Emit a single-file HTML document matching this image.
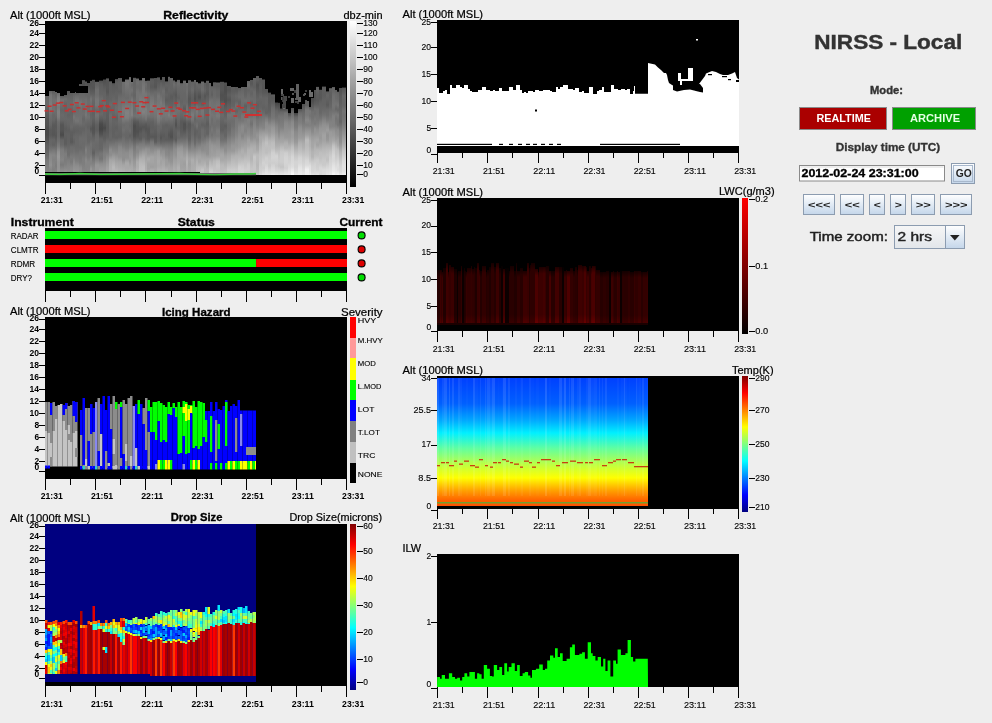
<!DOCTYPE html>
<html><head><meta charset="utf-8"><style>html,body{margin:0;padding:0;background:#eeeeee;width:992px;height:723px;overflow:hidden;position:relative}</style></head>
<body>
<svg width="992" height="723" viewBox="0 0 992 723" style="position:absolute;left:0;top:0;font-family:'Liberation Sans', sans-serif;will-change:transform"><rect x="0" y="0" width="992" height="723" fill="#eeeeee" /><defs><linearGradient id="gray" x1="0" y1="0" x2="0" y2="1"><stop offset="0" stop-color="#fff"/><stop offset="1" stop-color="#000"/></linearGradient><linearGradient id="jet" x1="0" y1="0" x2="0" y2="1"><stop offset="0" stop-color="#800000"/><stop offset="0.125" stop-color="#ff0000"/><stop offset="0.375" stop-color="#ffff00"/><stop offset="0.625" stop-color="#00ffff"/><stop offset="0.875" stop-color="#0000ff"/><stop offset="1" stop-color="#000080"/></linearGradient><linearGradient id="red" x1="0" y1="0" x2="0" y2="1"><stop offset="0" stop-color="#ff0000"/><stop offset="1" stop-color="#000"/></linearGradient></defs><rect x="45" y="21" width="302" height="162" fill="#000" /><defs><linearGradient id="rf0" x1="0" y1="0" x2="0" y2="1"><stop offset="0.000" stop-color="#616161"/><stop offset="0.051" stop-color="#686868"/><stop offset="0.114" stop-color="#6b6b6b"/><stop offset="0.177" stop-color="#606060"/><stop offset="0.241" stop-color="#5a5a5a"/><stop offset="0.304" stop-color="#525252"/><stop offset="0.367" stop-color="#515151"/><stop offset="0.430" stop-color="#4a4a4a"/><stop offset="0.494" stop-color="#4b4b4b"/><stop offset="0.557" stop-color="#525252"/><stop offset="0.620" stop-color="#5e5e5e"/><stop offset="0.684" stop-color="#626262"/><stop offset="0.747" stop-color="#696969"/><stop offset="0.810" stop-color="#777777"/><stop offset="0.873" stop-color="#7d7d7d"/><stop offset="0.937" stop-color="#838383"/><stop offset="1.000" stop-color="#7e7e7e"/></linearGradient><linearGradient id="rf1" x1="0" y1="0" x2="0" y2="1"><stop offset="0.000" stop-color="#636363"/><stop offset="0.048" stop-color="#767676"/><stop offset="0.107" stop-color="#787878"/><stop offset="0.167" stop-color="#7d7d7d"/><stop offset="0.226" stop-color="#777777"/><stop offset="0.286" stop-color="#6e6e6e"/><stop offset="0.345" stop-color="#6a6a6a"/><stop offset="0.405" stop-color="#656565"/><stop offset="0.464" stop-color="#5a5a5a"/><stop offset="0.524" stop-color="#595959"/><stop offset="0.583" stop-color="#656565"/><stop offset="0.643" stop-color="#676767"/><stop offset="0.702" stop-color="#747474"/><stop offset="0.762" stop-color="#878787"/><stop offset="0.821" stop-color="#8a8a8a"/><stop offset="0.881" stop-color="#909090"/><stop offset="0.940" stop-color="#858585"/><stop offset="1.000" stop-color="#8f8f8f"/></linearGradient><linearGradient id="rf2" x1="0" y1="0" x2="0" y2="1"><stop offset="0.000" stop-color="#5a5a5a"/><stop offset="0.048" stop-color="#6a6a6a"/><stop offset="0.107" stop-color="#727272"/><stop offset="0.167" stop-color="#6f6f6f"/><stop offset="0.226" stop-color="#717171"/><stop offset="0.286" stop-color="#676767"/><stop offset="0.345" stop-color="#666666"/><stop offset="0.405" stop-color="#595959"/><stop offset="0.464" stop-color="#585858"/><stop offset="0.524" stop-color="#555555"/><stop offset="0.583" stop-color="#656565"/><stop offset="0.643" stop-color="#626262"/><stop offset="0.702" stop-color="#777777"/><stop offset="0.762" stop-color="#858585"/><stop offset="0.821" stop-color="#818181"/><stop offset="0.881" stop-color="#848484"/><stop offset="0.940" stop-color="#7f7f7f"/><stop offset="1.000" stop-color="#898989"/></linearGradient><linearGradient id="rf3" x1="0" y1="0" x2="0" y2="1"><stop offset="0.000" stop-color="#636363"/><stop offset="0.048" stop-color="#666666"/><stop offset="0.108" stop-color="#747474"/><stop offset="0.169" stop-color="#6a6a6a"/><stop offset="0.229" stop-color="#6d6d6d"/><stop offset="0.289" stop-color="#696969"/><stop offset="0.349" stop-color="#5e5e5e"/><stop offset="0.410" stop-color="#595959"/><stop offset="0.470" stop-color="#5a5a5a"/><stop offset="0.530" stop-color="#565656"/><stop offset="0.590" stop-color="#606060"/><stop offset="0.651" stop-color="#686868"/><stop offset="0.711" stop-color="#777777"/><stop offset="0.771" stop-color="#838383"/><stop offset="0.831" stop-color="#818181"/><stop offset="0.892" stop-color="#7c7c7c"/><stop offset="0.952" stop-color="#838383"/><stop offset="1.000" stop-color="#8a8a8a"/></linearGradient><linearGradient id="rf4" x1="0" y1="0" x2="0" y2="1"><stop offset="0.000" stop-color="#6c6c6c"/><stop offset="0.049" stop-color="#7e7e7e"/><stop offset="0.110" stop-color="#868686"/><stop offset="0.171" stop-color="#787878"/><stop offset="0.232" stop-color="#818181"/><stop offset="0.293" stop-color="#7d7d7d"/><stop offset="0.354" stop-color="#6d6d6d"/><stop offset="0.415" stop-color="#686868"/><stop offset="0.476" stop-color="#676767"/><stop offset="0.537" stop-color="#696969"/><stop offset="0.598" stop-color="#717171"/><stop offset="0.659" stop-color="#7e7e7e"/><stop offset="0.720" stop-color="#929292"/><stop offset="0.780" stop-color="#999999"/><stop offset="0.841" stop-color="#929292"/><stop offset="0.902" stop-color="#929292"/><stop offset="0.963" stop-color="#959595"/><stop offset="1.000" stop-color="#a2a2a2"/></linearGradient><linearGradient id="rf5" x1="0" y1="0" x2="0" y2="1"><stop offset="0.000" stop-color="#5a5a5a"/><stop offset="0.051" stop-color="#727272"/><stop offset="0.114" stop-color="#6c6c6c"/><stop offset="0.177" stop-color="#646464"/><stop offset="0.241" stop-color="#696969"/><stop offset="0.304" stop-color="#666666"/><stop offset="0.367" stop-color="#555555"/><stop offset="0.430" stop-color="#555555"/><stop offset="0.494" stop-color="#4a4a4a"/><stop offset="0.557" stop-color="#656565"/><stop offset="0.620" stop-color="#696969"/><stop offset="0.684" stop-color="#7c7c7c"/><stop offset="0.747" stop-color="#7f7f7f"/><stop offset="0.810" stop-color="#848484"/><stop offset="0.873" stop-color="#7a7a7a"/><stop offset="0.937" stop-color="#8b8b8b"/><stop offset="1.000" stop-color="#959595"/></linearGradient><linearGradient id="rf6" x1="0" y1="0" x2="0" y2="1"><stop offset="0.000" stop-color="#585858"/><stop offset="0.050" stop-color="#6d6d6d"/><stop offset="0.113" stop-color="#646464"/><stop offset="0.175" stop-color="#626262"/><stop offset="0.237" stop-color="#666666"/><stop offset="0.300" stop-color="#676767"/><stop offset="0.362" stop-color="#626262"/><stop offset="0.425" stop-color="#5b5b5b"/><stop offset="0.487" stop-color="#606060"/><stop offset="0.550" stop-color="#5d5d5d"/><stop offset="0.613" stop-color="#5d5d5d"/><stop offset="0.675" stop-color="#6f6f6f"/><stop offset="0.738" stop-color="#7d7d7d"/><stop offset="0.800" stop-color="#7b7b7b"/><stop offset="0.863" stop-color="#7e7e7e"/><stop offset="0.925" stop-color="#8a8a8a"/><stop offset="0.988" stop-color="#9a9a9a"/><stop offset="1.000" stop-color="#9b9b9b"/></linearGradient><linearGradient id="rf7" x1="0" y1="0" x2="0" y2="1"><stop offset="0.000" stop-color="#545454"/><stop offset="0.048" stop-color="#606060"/><stop offset="0.107" stop-color="#686868"/><stop offset="0.167" stop-color="#696969"/><stop offset="0.226" stop-color="#686868"/><stop offset="0.286" stop-color="#626262"/><stop offset="0.345" stop-color="#676767"/><stop offset="0.405" stop-color="#646464"/><stop offset="0.464" stop-color="#5d5d5d"/><stop offset="0.524" stop-color="#616161"/><stop offset="0.583" stop-color="#616161"/><stop offset="0.643" stop-color="#646464"/><stop offset="0.702" stop-color="#6c6c6c"/><stop offset="0.762" stop-color="#6e6e6e"/><stop offset="0.821" stop-color="#7d7d7d"/><stop offset="0.881" stop-color="#848484"/><stop offset="0.940" stop-color="#8b8b8b"/><stop offset="1.000" stop-color="#979797"/></linearGradient><linearGradient id="rf8" x1="0" y1="0" x2="0" y2="1"><stop offset="0.000" stop-color="#5c5c5c"/><stop offset="0.049" stop-color="#636363"/><stop offset="0.110" stop-color="#696969"/><stop offset="0.171" stop-color="#696969"/><stop offset="0.232" stop-color="#626262"/><stop offset="0.293" stop-color="#656565"/><stop offset="0.354" stop-color="#666666"/><stop offset="0.415" stop-color="#696969"/><stop offset="0.476" stop-color="#5e5e5e"/><stop offset="0.537" stop-color="#5d5d5d"/><stop offset="0.598" stop-color="#595959"/><stop offset="0.659" stop-color="#6c6c6c"/><stop offset="0.720" stop-color="#6e6e6e"/><stop offset="0.780" stop-color="#7a7a7a"/><stop offset="0.841" stop-color="#797979"/><stop offset="0.902" stop-color="#888888"/><stop offset="0.963" stop-color="#8f8f8f"/><stop offset="1.000" stop-color="#8d8d8d"/></linearGradient><linearGradient id="rf9" x1="0" y1="0" x2="0" y2="1"><stop offset="0.000" stop-color="#5e5e5e"/><stop offset="0.049" stop-color="#6a6a6a"/><stop offset="0.110" stop-color="#707070"/><stop offset="0.171" stop-color="#6e6e6e"/><stop offset="0.232" stop-color="#686868"/><stop offset="0.293" stop-color="#767676"/><stop offset="0.354" stop-color="#6d6d6d"/><stop offset="0.415" stop-color="#646464"/><stop offset="0.476" stop-color="#5e5e5e"/><stop offset="0.537" stop-color="#666666"/><stop offset="0.598" stop-color="#606060"/><stop offset="0.659" stop-color="#6b6b6b"/><stop offset="0.720" stop-color="#717171"/><stop offset="0.780" stop-color="#7a7a7a"/><stop offset="0.841" stop-color="#898989"/><stop offset="0.902" stop-color="#8f8f8f"/><stop offset="0.963" stop-color="#989898"/><stop offset="1.000" stop-color="#9a9a9a"/></linearGradient><linearGradient id="rf10" x1="0" y1="0" x2="0" y2="1"><stop offset="0.000" stop-color="#585858"/><stop offset="0.048" stop-color="#6a6a6a"/><stop offset="0.108" stop-color="#777777"/><stop offset="0.169" stop-color="#6a6a6a"/><stop offset="0.229" stop-color="#6c6c6c"/><stop offset="0.289" stop-color="#6f6f6f"/><stop offset="0.349" stop-color="#757575"/><stop offset="0.410" stop-color="#656565"/><stop offset="0.470" stop-color="#606060"/><stop offset="0.530" stop-color="#666666"/><stop offset="0.590" stop-color="#686868"/><stop offset="0.651" stop-color="#686868"/><stop offset="0.711" stop-color="#6c6c6c"/><stop offset="0.771" stop-color="#767676"/><stop offset="0.831" stop-color="#7d7d7d"/><stop offset="0.892" stop-color="#8d8d8d"/><stop offset="0.952" stop-color="#949494"/><stop offset="1.000" stop-color="#9b9b9b"/></linearGradient><linearGradient id="rf11" x1="0" y1="0" x2="0" y2="1"><stop offset="0.000" stop-color="#4f4f4f"/><stop offset="0.044" stop-color="#5c5c5c"/><stop offset="0.099" stop-color="#656565"/><stop offset="0.154" stop-color="#6b6b6b"/><stop offset="0.209" stop-color="#767676"/><stop offset="0.264" stop-color="#6f6f6f"/><stop offset="0.319" stop-color="#6e6e6e"/><stop offset="0.374" stop-color="#707070"/><stop offset="0.429" stop-color="#6f6f6f"/><stop offset="0.484" stop-color="#636363"/><stop offset="0.538" stop-color="#626262"/><stop offset="0.593" stop-color="#6c6c6c"/><stop offset="0.648" stop-color="#6b6b6b"/><stop offset="0.703" stop-color="#696969"/><stop offset="0.758" stop-color="#747474"/><stop offset="0.813" stop-color="#767676"/><stop offset="0.868" stop-color="#7c7c7c"/><stop offset="0.923" stop-color="#8d8d8d"/><stop offset="0.978" stop-color="#8f8f8f"/><stop offset="1.000" stop-color="#969696"/></linearGradient><linearGradient id="rf12" x1="0" y1="0" x2="0" y2="1"><stop offset="0.000" stop-color="#565656"/><stop offset="0.040" stop-color="#4e4e4e"/><stop offset="0.092" stop-color="#575757"/><stop offset="0.145" stop-color="#666666"/><stop offset="0.198" stop-color="#6c6c6c"/><stop offset="0.251" stop-color="#707070"/><stop offset="0.303" stop-color="#6a6a6a"/><stop offset="0.356" stop-color="#6e6e6e"/><stop offset="0.409" stop-color="#666666"/><stop offset="0.462" stop-color="#696969"/><stop offset="0.515" stop-color="#626262"/><stop offset="0.567" stop-color="#686868"/><stop offset="0.620" stop-color="#6c6c6c"/><stop offset="0.673" stop-color="#6a6a6a"/><stop offset="0.726" stop-color="#6c6c6c"/><stop offset="0.778" stop-color="#737373"/><stop offset="0.831" stop-color="#7d7d7d"/><stop offset="0.884" stop-color="#7e7e7e"/><stop offset="0.937" stop-color="#838383"/><stop offset="0.989" stop-color="#8c8c8c"/><stop offset="1.000" stop-color="#8a8a8a"/></linearGradient><linearGradient id="rf13" x1="0" y1="0" x2="0" y2="1"><stop offset="0.000" stop-color="#565656"/><stop offset="0.037" stop-color="#535353"/><stop offset="0.091" stop-color="#616161"/><stop offset="0.144" stop-color="#656565"/><stop offset="0.198" stop-color="#6f6f6f"/><stop offset="0.251" stop-color="#717171"/><stop offset="0.305" stop-color="#727272"/><stop offset="0.358" stop-color="#777777"/><stop offset="0.412" stop-color="#6c6c6c"/><stop offset="0.465" stop-color="#656565"/><stop offset="0.519" stop-color="#676767"/><stop offset="0.572" stop-color="#6a6a6a"/><stop offset="0.626" stop-color="#6c6c6c"/><stop offset="0.679" stop-color="#6e6e6e"/><stop offset="0.733" stop-color="#808080"/><stop offset="0.786" stop-color="#7a7a7a"/><stop offset="0.840" stop-color="#888888"/><stop offset="0.893" stop-color="#848484"/><stop offset="0.947" stop-color="#848484"/><stop offset="1.000" stop-color="#929292"/></linearGradient><linearGradient id="rf14" x1="0" y1="0" x2="0" y2="1"><stop offset="0.000" stop-color="#505050"/><stop offset="0.043" stop-color="#555555"/><stop offset="0.098" stop-color="#646464"/><stop offset="0.152" stop-color="#666666"/><stop offset="0.207" stop-color="#6c6c6c"/><stop offset="0.261" stop-color="#696969"/><stop offset="0.315" stop-color="#6b6b6b"/><stop offset="0.370" stop-color="#707070"/><stop offset="0.424" stop-color="#676767"/><stop offset="0.478" stop-color="#616161"/><stop offset="0.533" stop-color="#676767"/><stop offset="0.587" stop-color="#656565"/><stop offset="0.641" stop-color="#666666"/><stop offset="0.696" stop-color="#727272"/><stop offset="0.750" stop-color="#757575"/><stop offset="0.804" stop-color="#787878"/><stop offset="0.859" stop-color="#848484"/><stop offset="0.913" stop-color="#848484"/><stop offset="0.967" stop-color="#888888"/><stop offset="1.000" stop-color="#909090"/></linearGradient><linearGradient id="rf15" x1="0" y1="0" x2="0" y2="1"><stop offset="0.000" stop-color="#535353"/><stop offset="0.033" stop-color="#535353"/><stop offset="0.086" stop-color="#575757"/><stop offset="0.139" stop-color="#606060"/><stop offset="0.192" stop-color="#747474"/><stop offset="0.245" stop-color="#6e6e6e"/><stop offset="0.299" stop-color="#707070"/><stop offset="0.352" stop-color="#646464"/><stop offset="0.405" stop-color="#676767"/><stop offset="0.458" stop-color="#646464"/><stop offset="0.511" stop-color="#555555"/><stop offset="0.564" stop-color="#676767"/><stop offset="0.617" stop-color="#666666"/><stop offset="0.671" stop-color="#717171"/><stop offset="0.724" stop-color="#707070"/><stop offset="0.777" stop-color="#747474"/><stop offset="0.830" stop-color="#838383"/><stop offset="0.883" stop-color="#838383"/><stop offset="0.936" stop-color="#979797"/><stop offset="0.989" stop-color="#949494"/><stop offset="1.000" stop-color="#949494"/></linearGradient><linearGradient id="rf16" x1="0" y1="0" x2="0" y2="1"><stop offset="0.000" stop-color="#4c4c4c"/><stop offset="0.033" stop-color="#555555"/><stop offset="0.086" stop-color="#545454"/><stop offset="0.138" stop-color="#5e5e5e"/><stop offset="0.191" stop-color="#696969"/><stop offset="0.243" stop-color="#656565"/><stop offset="0.296" stop-color="#656565"/><stop offset="0.348" stop-color="#616161"/><stop offset="0.401" stop-color="#636363"/><stop offset="0.454" stop-color="#5a5a5a"/><stop offset="0.506" stop-color="#525252"/><stop offset="0.559" stop-color="#565656"/><stop offset="0.611" stop-color="#636363"/><stop offset="0.664" stop-color="#6b6b6b"/><stop offset="0.716" stop-color="#6a6a6a"/><stop offset="0.769" stop-color="#606060"/><stop offset="0.821" stop-color="#717171"/><stop offset="0.874" stop-color="#808080"/><stop offset="0.926" stop-color="#8b8b8b"/><stop offset="0.979" stop-color="#929292"/><stop offset="1.000" stop-color="#959595"/></linearGradient><linearGradient id="rf17" x1="0" y1="0" x2="0" y2="1"><stop offset="0.000" stop-color="#616161"/><stop offset="0.035" stop-color="#636363"/><stop offset="0.088" stop-color="#6e6e6e"/><stop offset="0.142" stop-color="#6e6e6e"/><stop offset="0.196" stop-color="#777777"/><stop offset="0.249" stop-color="#767676"/><stop offset="0.303" stop-color="#686868"/><stop offset="0.357" stop-color="#747474"/><stop offset="0.410" stop-color="#6b6b6b"/><stop offset="0.464" stop-color="#5f5f5f"/><stop offset="0.517" stop-color="#5d5d5d"/><stop offset="0.571" stop-color="#696969"/><stop offset="0.625" stop-color="#6c6c6c"/><stop offset="0.678" stop-color="#696969"/><stop offset="0.732" stop-color="#6a6a6a"/><stop offset="0.786" stop-color="#747474"/><stop offset="0.839" stop-color="#828282"/><stop offset="0.893" stop-color="#969696"/><stop offset="0.946" stop-color="#969696"/><stop offset="1.000" stop-color="#979797"/></linearGradient><linearGradient id="rf18" x1="0" y1="0" x2="0" y2="1"><stop offset="0.000" stop-color="#4f4f4f"/><stop offset="0.036" stop-color="#5d5d5d"/><stop offset="0.089" stop-color="#616161"/><stop offset="0.142" stop-color="#636363"/><stop offset="0.195" stop-color="#6c6c6c"/><stop offset="0.248" stop-color="#676767"/><stop offset="0.301" stop-color="#626262"/><stop offset="0.354" stop-color="#696969"/><stop offset="0.407" stop-color="#5d5d5d"/><stop offset="0.460" stop-color="#4a4a4a"/><stop offset="0.513" stop-color="#454545"/><stop offset="0.566" stop-color="#515151"/><stop offset="0.619" stop-color="#656565"/><stop offset="0.672" stop-color="#656565"/><stop offset="0.725" stop-color="#666666"/><stop offset="0.777" stop-color="#767676"/><stop offset="0.830" stop-color="#747474"/><stop offset="0.883" stop-color="#8e8e8e"/><stop offset="0.936" stop-color="#9a9a9a"/><stop offset="0.989" stop-color="#a0a0a0"/><stop offset="1.000" stop-color="#999999"/></linearGradient><linearGradient id="rf19" x1="0" y1="0" x2="0" y2="1"><stop offset="0.000" stop-color="#4e4e4e"/><stop offset="0.037" stop-color="#545454"/><stop offset="0.089" stop-color="#5d5d5d"/><stop offset="0.141" stop-color="#636363"/><stop offset="0.194" stop-color="#646464"/><stop offset="0.246" stop-color="#6b6b6b"/><stop offset="0.298" stop-color="#686868"/><stop offset="0.351" stop-color="#636363"/><stop offset="0.403" stop-color="#636363"/><stop offset="0.455" stop-color="#575757"/><stop offset="0.508" stop-color="#494949"/><stop offset="0.560" stop-color="#595959"/><stop offset="0.613" stop-color="#5d5d5d"/><stop offset="0.665" stop-color="#696969"/><stop offset="0.717" stop-color="#717171"/><stop offset="0.770" stop-color="#7d7d7d"/><stop offset="0.822" stop-color="#818181"/><stop offset="0.874" stop-color="#8e8e8e"/><stop offset="0.927" stop-color="#989898"/><stop offset="0.979" stop-color="#a0a0a0"/><stop offset="1.000" stop-color="#a6a6a6"/></linearGradient><linearGradient id="rf20" x1="0" y1="0" x2="0" y2="1"><stop offset="0.000" stop-color="#585858"/><stop offset="0.037" stop-color="#555555"/><stop offset="0.089" stop-color="#585858"/><stop offset="0.141" stop-color="#565656"/><stop offset="0.192" stop-color="#606060"/><stop offset="0.244" stop-color="#636363"/><stop offset="0.296" stop-color="#626262"/><stop offset="0.348" stop-color="#5f5f5f"/><stop offset="0.400" stop-color="#5d5d5d"/><stop offset="0.451" stop-color="#5b5b5b"/><stop offset="0.503" stop-color="#585858"/><stop offset="0.555" stop-color="#5a5a5a"/><stop offset="0.607" stop-color="#606060"/><stop offset="0.658" stop-color="#6d6d6d"/><stop offset="0.710" stop-color="#717171"/><stop offset="0.762" stop-color="#7b7b7b"/><stop offset="0.814" stop-color="#8a8a8a"/><stop offset="0.865" stop-color="#959595"/><stop offset="0.917" stop-color="#9f9f9f"/><stop offset="0.969" stop-color="#a6a6a6"/><stop offset="1.000" stop-color="#a9a9a9"/></linearGradient><linearGradient id="rf21" x1="0" y1="0" x2="0" y2="1"><stop offset="0.000" stop-color="#5d5d5d"/><stop offset="0.039" stop-color="#5f5f5f"/><stop offset="0.093" stop-color="#5f5f5f"/><stop offset="0.146" stop-color="#626262"/><stop offset="0.199" stop-color="#636363"/><stop offset="0.253" stop-color="#6b6b6b"/><stop offset="0.306" stop-color="#636363"/><stop offset="0.360" stop-color="#6c6c6c"/><stop offset="0.413" stop-color="#6a6a6a"/><stop offset="0.466" stop-color="#666666"/><stop offset="0.520" stop-color="#636363"/><stop offset="0.573" stop-color="#666666"/><stop offset="0.626" stop-color="#666666"/><stop offset="0.680" stop-color="#767676"/><stop offset="0.733" stop-color="#8c8c8c"/><stop offset="0.787" stop-color="#8d8d8d"/><stop offset="0.840" stop-color="#a5a5a5"/><stop offset="0.893" stop-color="#adadad"/><stop offset="0.947" stop-color="#b1b1b1"/><stop offset="1.000" stop-color="#b9b9b9"/></linearGradient><linearGradient id="rf22" x1="0" y1="0" x2="0" y2="1"><stop offset="0.000" stop-color="#555555"/><stop offset="0.041" stop-color="#5d5d5d"/><stop offset="0.096" stop-color="#5f5f5f"/><stop offset="0.150" stop-color="#646464"/><stop offset="0.205" stop-color="#686868"/><stop offset="0.259" stop-color="#676767"/><stop offset="0.314" stop-color="#676767"/><stop offset="0.368" stop-color="#626262"/><stop offset="0.423" stop-color="#646464"/><stop offset="0.477" stop-color="#616161"/><stop offset="0.531" stop-color="#606060"/><stop offset="0.586" stop-color="#616161"/><stop offset="0.640" stop-color="#6d6d6d"/><stop offset="0.695" stop-color="#7d7d7d"/><stop offset="0.749" stop-color="#898989"/><stop offset="0.804" stop-color="#9c9c9c"/><stop offset="0.858" stop-color="#ababab"/><stop offset="0.913" stop-color="#b8b8b8"/><stop offset="0.967" stop-color="#b6b6b6"/><stop offset="1.000" stop-color="#bdbdbd"/></linearGradient><linearGradient id="rf23" x1="0" y1="0" x2="0" y2="1"><stop offset="0.000" stop-color="#535353"/><stop offset="0.040" stop-color="#5f5f5f"/><stop offset="0.093" stop-color="#5d5d5d"/><stop offset="0.145" stop-color="#626262"/><stop offset="0.197" stop-color="#626262"/><stop offset="0.249" stop-color="#686868"/><stop offset="0.301" stop-color="#6d6d6d"/><stop offset="0.353" stop-color="#6a6a6a"/><stop offset="0.405" stop-color="#616161"/><stop offset="0.458" stop-color="#656565"/><stop offset="0.510" stop-color="#5f5f5f"/><stop offset="0.562" stop-color="#646464"/><stop offset="0.614" stop-color="#616161"/><stop offset="0.666" stop-color="#747474"/><stop offset="0.718" stop-color="#7e7e7e"/><stop offset="0.771" stop-color="#8a8a8a"/><stop offset="0.823" stop-color="#9a9a9a"/><stop offset="0.875" stop-color="#a6a6a6"/><stop offset="0.927" stop-color="#afafaf"/><stop offset="0.979" stop-color="#bbbbbb"/><stop offset="1.000" stop-color="#bababa"/></linearGradient><linearGradient id="rf24" x1="0" y1="0" x2="0" y2="1"><stop offset="0.000" stop-color="#565656"/><stop offset="0.041" stop-color="#606060"/><stop offset="0.092" stop-color="#626262"/><stop offset="0.144" stop-color="#606060"/><stop offset="0.196" stop-color="#6a6a6a"/><stop offset="0.247" stop-color="#6e6e6e"/><stop offset="0.299" stop-color="#717171"/><stop offset="0.350" stop-color="#727272"/><stop offset="0.402" stop-color="#6f6f6f"/><stop offset="0.453" stop-color="#6b6b6b"/><stop offset="0.505" stop-color="#656565"/><stop offset="0.557" stop-color="#636363"/><stop offset="0.608" stop-color="#616161"/><stop offset="0.660" stop-color="#737373"/><stop offset="0.711" stop-color="#868686"/><stop offset="0.763" stop-color="#8e8e8e"/><stop offset="0.814" stop-color="#919191"/><stop offset="0.866" stop-color="#a3a3a3"/><stop offset="0.917" stop-color="#aaaaaa"/><stop offset="0.969" stop-color="#b4b4b4"/><stop offset="1.000" stop-color="#b8b8b8"/></linearGradient><linearGradient id="rf25" x1="0" y1="0" x2="0" y2="1"><stop offset="0.000" stop-color="#6d6d6d"/><stop offset="0.035" stop-color="#6d6d6d"/><stop offset="0.089" stop-color="#6d6d6d"/><stop offset="0.142" stop-color="#696969"/><stop offset="0.196" stop-color="#6e6e6e"/><stop offset="0.249" stop-color="#747474"/><stop offset="0.303" stop-color="#7c7c7c"/><stop offset="0.357" stop-color="#787878"/><stop offset="0.410" stop-color="#787878"/><stop offset="0.464" stop-color="#6a6a6a"/><stop offset="0.517" stop-color="#6e6e6e"/><stop offset="0.571" stop-color="#676767"/><stop offset="0.625" stop-color="#707070"/><stop offset="0.678" stop-color="#787878"/><stop offset="0.732" stop-color="#888888"/><stop offset="0.786" stop-color="#8e8e8e"/><stop offset="0.839" stop-color="#8e8e8e"/><stop offset="0.893" stop-color="#a5a5a5"/><stop offset="0.946" stop-color="#aeaeae"/><stop offset="1.000" stop-color="#b8b8b8"/></linearGradient><linearGradient id="rf26" x1="0" y1="0" x2="0" y2="1"><stop offset="0.000" stop-color="#707070"/><stop offset="0.037" stop-color="#787878"/><stop offset="0.089" stop-color="#737373"/><stop offset="0.141" stop-color="#6e6e6e"/><stop offset="0.194" stop-color="#6a6a6a"/><stop offset="0.246" stop-color="#727272"/><stop offset="0.299" stop-color="#7c7c7c"/><stop offset="0.351" stop-color="#818181"/><stop offset="0.403" stop-color="#7d7d7d"/><stop offset="0.456" stop-color="#6d6d6d"/><stop offset="0.508" stop-color="#6c6c6c"/><stop offset="0.560" stop-color="#676767"/><stop offset="0.613" stop-color="#666666"/><stop offset="0.665" stop-color="#727272"/><stop offset="0.717" stop-color="#7d7d7d"/><stop offset="0.770" stop-color="#8d8d8d"/><stop offset="0.822" stop-color="#909090"/><stop offset="0.874" stop-color="#a8a8a8"/><stop offset="0.927" stop-color="#a8a8a8"/><stop offset="0.979" stop-color="#b0b0b0"/><stop offset="1.000" stop-color="#b3b3b3"/></linearGradient><linearGradient id="rf27" x1="0" y1="0" x2="0" y2="1"><stop offset="0.000" stop-color="#6b6b6b"/><stop offset="0.039" stop-color="#727272"/><stop offset="0.091" stop-color="#6f6f6f"/><stop offset="0.142" stop-color="#727272"/><stop offset="0.193" stop-color="#6e6e6e"/><stop offset="0.244" stop-color="#6f6f6f"/><stop offset="0.295" stop-color="#777777"/><stop offset="0.346" stop-color="#7a7a7a"/><stop offset="0.397" stop-color="#7b7b7b"/><stop offset="0.448" stop-color="#6f6f6f"/><stop offset="0.499" stop-color="#686868"/><stop offset="0.550" stop-color="#6d6d6d"/><stop offset="0.601" stop-color="#606060"/><stop offset="0.653" stop-color="#717171"/><stop offset="0.704" stop-color="#7d7d7d"/><stop offset="0.755" stop-color="#8f8f8f"/><stop offset="0.806" stop-color="#979797"/><stop offset="0.857" stop-color="#959595"/><stop offset="0.908" stop-color="#a5a5a5"/><stop offset="0.959" stop-color="#aeaeae"/><stop offset="1.000" stop-color="#b2b2b2"/></linearGradient><linearGradient id="rf28" x1="0" y1="0" x2="0" y2="1"><stop offset="0.000" stop-color="#727272"/><stop offset="0.033" stop-color="#686868"/><stop offset="0.086" stop-color="#737373"/><stop offset="0.140" stop-color="#686868"/><stop offset="0.194" stop-color="#787878"/><stop offset="0.248" stop-color="#797979"/><stop offset="0.301" stop-color="#7e7e7e"/><stop offset="0.355" stop-color="#818181"/><stop offset="0.409" stop-color="#696969"/><stop offset="0.463" stop-color="#646464"/><stop offset="0.516" stop-color="#646464"/><stop offset="0.570" stop-color="#616161"/><stop offset="0.624" stop-color="#686868"/><stop offset="0.678" stop-color="#7c7c7c"/><stop offset="0.731" stop-color="#8d8d8d"/><stop offset="0.785" stop-color="#959595"/><stop offset="0.839" stop-color="#9d9d9d"/><stop offset="0.893" stop-color="#a6a6a6"/><stop offset="0.946" stop-color="#ababab"/><stop offset="1.000" stop-color="#adadad"/></linearGradient><linearGradient id="rf29" x1="0" y1="0" x2="0" y2="1"><stop offset="0.000" stop-color="#5a5a5a"/><stop offset="0.033" stop-color="#636363"/><stop offset="0.084" stop-color="#656565"/><stop offset="0.136" stop-color="#676767"/><stop offset="0.187" stop-color="#646464"/><stop offset="0.239" stop-color="#6c6c6c"/><stop offset="0.290" stop-color="#6c6c6c"/><stop offset="0.342" stop-color="#6b6b6b"/><stop offset="0.393" stop-color="#727272"/><stop offset="0.444" stop-color="#5a5a5a"/><stop offset="0.496" stop-color="#4b4b4b"/><stop offset="0.547" stop-color="#4e4e4e"/><stop offset="0.599" stop-color="#515151"/><stop offset="0.650" stop-color="#636363"/><stop offset="0.702" stop-color="#747474"/><stop offset="0.753" stop-color="#808080"/><stop offset="0.805" stop-color="#888888"/><stop offset="0.856" stop-color="#969696"/><stop offset="0.907" stop-color="#9d9d9d"/><stop offset="0.959" stop-color="#a9a9a9"/><stop offset="1.000" stop-color="#a6a6a6"/></linearGradient><linearGradient id="rf30" x1="0" y1="0" x2="0" y2="1"><stop offset="0.000" stop-color="#646464"/><stop offset="0.036" stop-color="#6f6f6f"/><stop offset="0.088" stop-color="#6b6b6b"/><stop offset="0.140" stop-color="#747474"/><stop offset="0.191" stop-color="#747474"/><stop offset="0.243" stop-color="#737373"/><stop offset="0.295" stop-color="#7a7a7a"/><stop offset="0.347" stop-color="#727272"/><stop offset="0.399" stop-color="#727272"/><stop offset="0.451" stop-color="#585858"/><stop offset="0.502" stop-color="#525252"/><stop offset="0.554" stop-color="#505050"/><stop offset="0.606" stop-color="#595959"/><stop offset="0.658" stop-color="#6c6c6c"/><stop offset="0.710" stop-color="#858585"/><stop offset="0.762" stop-color="#888888"/><stop offset="0.813" stop-color="#989898"/><stop offset="0.865" stop-color="#ababab"/><stop offset="0.917" stop-color="#adadad"/><stop offset="0.969" stop-color="#b6b6b6"/><stop offset="1.000" stop-color="#b3b3b3"/></linearGradient><linearGradient id="rf31" x1="0" y1="0" x2="0" y2="1"><stop offset="0.000" stop-color="#6a6a6a"/><stop offset="0.039" stop-color="#6b6b6b"/><stop offset="0.092" stop-color="#6b6b6b"/><stop offset="0.145" stop-color="#747474"/><stop offset="0.198" stop-color="#797979"/><stop offset="0.250" stop-color="#7d7d7d"/><stop offset="0.303" stop-color="#7f7f7f"/><stop offset="0.356" stop-color="#787878"/><stop offset="0.409" stop-color="#6a6a6a"/><stop offset="0.462" stop-color="#5c5c5c"/><stop offset="0.514" stop-color="#515151"/><stop offset="0.567" stop-color="#5c5c5c"/><stop offset="0.620" stop-color="#5c5c5c"/><stop offset="0.673" stop-color="#7a7a7a"/><stop offset="0.725" stop-color="#888888"/><stop offset="0.778" stop-color="#9b9b9b"/><stop offset="0.831" stop-color="#afafaf"/><stop offset="0.884" stop-color="#b9b9b9"/><stop offset="0.937" stop-color="#bebebe"/><stop offset="0.989" stop-color="#bfbfbf"/><stop offset="1.000" stop-color="#c5c5c5"/></linearGradient><linearGradient id="rf32" x1="0" y1="0" x2="0" y2="1"><stop offset="0.000" stop-color="#6c6c6c"/><stop offset="0.041" stop-color="#717171"/><stop offset="0.093" stop-color="#777777"/><stop offset="0.144" stop-color="#787878"/><stop offset="0.196" stop-color="#757575"/><stop offset="0.247" stop-color="#7d7d7d"/><stop offset="0.299" stop-color="#787878"/><stop offset="0.350" stop-color="#828282"/><stop offset="0.402" stop-color="#747474"/><stop offset="0.453" stop-color="#646464"/><stop offset="0.505" stop-color="#545454"/><stop offset="0.557" stop-color="#5e5e5e"/><stop offset="0.608" stop-color="#606060"/><stop offset="0.660" stop-color="#747474"/><stop offset="0.711" stop-color="#848484"/><stop offset="0.763" stop-color="#9a9a9a"/><stop offset="0.814" stop-color="#ababab"/><stop offset="0.866" stop-color="#b4b4b4"/><stop offset="0.918" stop-color="#bebebe"/><stop offset="0.969" stop-color="#c0c0c0"/><stop offset="1.000" stop-color="#c7c7c7"/></linearGradient><linearGradient id="rf33" x1="0" y1="0" x2="0" y2="1"><stop offset="0.000" stop-color="#606060"/><stop offset="0.034" stop-color="#6e6e6e"/><stop offset="0.087" stop-color="#696969"/><stop offset="0.140" stop-color="#767676"/><stop offset="0.193" stop-color="#747474"/><stop offset="0.247" stop-color="#737373"/><stop offset="0.300" stop-color="#7f7f7f"/><stop offset="0.353" stop-color="#7c7c7c"/><stop offset="0.406" stop-color="#747474"/><stop offset="0.459" stop-color="#595959"/><stop offset="0.512" stop-color="#535353"/><stop offset="0.565" stop-color="#5c5c5c"/><stop offset="0.618" stop-color="#5f5f5f"/><stop offset="0.671" stop-color="#747474"/><stop offset="0.724" stop-color="#929292"/><stop offset="0.777" stop-color="#9e9e9e"/><stop offset="0.830" stop-color="#a5a5a5"/><stop offset="0.883" stop-color="#acacac"/><stop offset="0.936" stop-color="#aeaeae"/><stop offset="0.989" stop-color="#bdbdbd"/><stop offset="1.000" stop-color="#c3c3c3"/></linearGradient><linearGradient id="rf34" x1="0" y1="0" x2="0" y2="1"><stop offset="0.000" stop-color="#626262"/><stop offset="0.036" stop-color="#626262"/><stop offset="0.089" stop-color="#656565"/><stop offset="0.142" stop-color="#707070"/><stop offset="0.195" stop-color="#6b6b6b"/><stop offset="0.248" stop-color="#737373"/><stop offset="0.301" stop-color="#767676"/><stop offset="0.354" stop-color="#787878"/><stop offset="0.407" stop-color="#686868"/><stop offset="0.460" stop-color="#5f5f5f"/><stop offset="0.513" stop-color="#555555"/><stop offset="0.566" stop-color="#565656"/><stop offset="0.619" stop-color="#5a5a5a"/><stop offset="0.672" stop-color="#757575"/><stop offset="0.725" stop-color="#8f8f8f"/><stop offset="0.778" stop-color="#979797"/><stop offset="0.831" stop-color="#ababab"/><stop offset="0.883" stop-color="#a1a1a1"/><stop offset="0.936" stop-color="#a2a2a2"/><stop offset="0.989" stop-color="#b5b5b5"/><stop offset="1.000" stop-color="#b8b8b8"/></linearGradient><linearGradient id="rf35" x1="0" y1="0" x2="0" y2="1"><stop offset="0.000" stop-color="#5b5b5b"/><stop offset="0.038" stop-color="#5e5e5e"/><stop offset="0.090" stop-color="#5a5a5a"/><stop offset="0.141" stop-color="#666666"/><stop offset="0.193" stop-color="#727272"/><stop offset="0.245" stop-color="#787878"/><stop offset="0.296" stop-color="#7d7d7d"/><stop offset="0.348" stop-color="#757575"/><stop offset="0.400" stop-color="#6f6f6f"/><stop offset="0.452" stop-color="#616161"/><stop offset="0.503" stop-color="#5e5e5e"/><stop offset="0.555" stop-color="#606060"/><stop offset="0.607" stop-color="#575757"/><stop offset="0.659" stop-color="#757575"/><stop offset="0.710" stop-color="#828282"/><stop offset="0.762" stop-color="#919191"/><stop offset="0.814" stop-color="#a4a4a4"/><stop offset="0.866" stop-color="#a4a4a4"/><stop offset="0.917" stop-color="#9e9e9e"/><stop offset="0.969" stop-color="#b4b4b4"/><stop offset="1.000" stop-color="#b9b9b9"/></linearGradient><linearGradient id="rf36" x1="0" y1="0" x2="0" y2="1"><stop offset="0.000" stop-color="#535353"/><stop offset="0.041" stop-color="#585858"/><stop offset="0.093" stop-color="#555555"/><stop offset="0.144" stop-color="#696969"/><stop offset="0.196" stop-color="#6c6c6c"/><stop offset="0.247" stop-color="#707070"/><stop offset="0.299" stop-color="#777777"/><stop offset="0.351" stop-color="#767676"/><stop offset="0.402" stop-color="#727272"/><stop offset="0.454" stop-color="#686868"/><stop offset="0.505" stop-color="#606060"/><stop offset="0.557" stop-color="#5d5d5d"/><stop offset="0.608" stop-color="#575757"/><stop offset="0.660" stop-color="#5e5e5e"/><stop offset="0.711" stop-color="#828282"/><stop offset="0.763" stop-color="#979797"/><stop offset="0.814" stop-color="#a0a0a0"/><stop offset="0.866" stop-color="#a1a1a1"/><stop offset="0.918" stop-color="#a1a1a1"/><stop offset="0.969" stop-color="#acacac"/><stop offset="1.000" stop-color="#acacac"/></linearGradient><linearGradient id="rf37" x1="0" y1="0" x2="0" y2="1"><stop offset="0.000" stop-color="#595959"/><stop offset="0.037" stop-color="#595959"/><stop offset="0.088" stop-color="#606060"/><stop offset="0.140" stop-color="#686868"/><stop offset="0.191" stop-color="#767676"/><stop offset="0.242" stop-color="#747474"/><stop offset="0.293" stop-color="#787878"/><stop offset="0.344" stop-color="#797979"/><stop offset="0.396" stop-color="#7e7e7e"/><stop offset="0.447" stop-color="#777777"/><stop offset="0.498" stop-color="#676767"/><stop offset="0.549" stop-color="#666666"/><stop offset="0.601" stop-color="#606060"/><stop offset="0.652" stop-color="#656565"/><stop offset="0.703" stop-color="#7a7a7a"/><stop offset="0.754" stop-color="#9b9b9b"/><stop offset="0.805" stop-color="#a3a3a3"/><stop offset="0.857" stop-color="#a9a9a9"/><stop offset="0.908" stop-color="#a7a7a7"/><stop offset="0.959" stop-color="#b2b2b2"/><stop offset="1.000" stop-color="#b3b3b3"/></linearGradient><linearGradient id="rf38" x1="0" y1="0" x2="0" y2="1"><stop offset="0.000" stop-color="#4f4f4f"/><stop offset="0.034" stop-color="#5f5f5f"/><stop offset="0.087" stop-color="#676767"/><stop offset="0.139" stop-color="#696969"/><stop offset="0.192" stop-color="#727272"/><stop offset="0.244" stop-color="#7a7a7a"/><stop offset="0.297" stop-color="#757575"/><stop offset="0.349" stop-color="#707070"/><stop offset="0.402" stop-color="#777777"/><stop offset="0.454" stop-color="#696969"/><stop offset="0.507" stop-color="#666666"/><stop offset="0.559" stop-color="#5e5e5e"/><stop offset="0.612" stop-color="#545454"/><stop offset="0.664" stop-color="#656565"/><stop offset="0.717" stop-color="#858585"/><stop offset="0.769" stop-color="#919191"/><stop offset="0.822" stop-color="#a3a3a3"/><stop offset="0.874" stop-color="#a1a1a1"/><stop offset="0.927" stop-color="#aaaaaa"/><stop offset="0.979" stop-color="#b7b7b7"/><stop offset="1.000" stop-color="#bbbbbb"/></linearGradient><linearGradient id="rf39" x1="0" y1="0" x2="0" y2="1"><stop offset="0.000" stop-color="#565656"/><stop offset="0.041" stop-color="#575757"/><stop offset="0.092" stop-color="#616161"/><stop offset="0.143" stop-color="#6e6e6e"/><stop offset="0.194" stop-color="#6a6a6a"/><stop offset="0.245" stop-color="#6e6e6e"/><stop offset="0.296" stop-color="#767676"/><stop offset="0.347" stop-color="#757575"/><stop offset="0.398" stop-color="#757575"/><stop offset="0.449" stop-color="#6c6c6c"/><stop offset="0.500" stop-color="#606060"/><stop offset="0.551" stop-color="#606060"/><stop offset="0.602" stop-color="#5a5a5a"/><stop offset="0.653" stop-color="#606060"/><stop offset="0.704" stop-color="#757575"/><stop offset="0.755" stop-color="#8f8f8f"/><stop offset="0.806" stop-color="#989898"/><stop offset="0.857" stop-color="#a4a4a4"/><stop offset="0.908" stop-color="#a9a9a9"/><stop offset="0.959" stop-color="#b3b3b3"/><stop offset="1.000" stop-color="#b9b9b9"/></linearGradient><linearGradient id="rf40" x1="0" y1="0" x2="0" y2="1"><stop offset="0.000" stop-color="#5c5c5c"/><stop offset="0.039" stop-color="#636363"/><stop offset="0.092" stop-color="#5e5e5e"/><stop offset="0.146" stop-color="#646464"/><stop offset="0.199" stop-color="#5c5c5c"/><stop offset="0.252" stop-color="#646464"/><stop offset="0.306" stop-color="#757575"/><stop offset="0.359" stop-color="#777777"/><stop offset="0.413" stop-color="#707070"/><stop offset="0.466" stop-color="#5f5f5f"/><stop offset="0.519" stop-color="#616161"/><stop offset="0.573" stop-color="#5e5e5e"/><stop offset="0.626" stop-color="#5c5c5c"/><stop offset="0.680" stop-color="#737373"/><stop offset="0.733" stop-color="#858585"/><stop offset="0.786" stop-color="#8a8a8a"/><stop offset="0.840" stop-color="#9b9b9b"/><stop offset="0.893" stop-color="#9e9e9e"/><stop offset="0.947" stop-color="#aeaeae"/><stop offset="1.000" stop-color="#c0c0c0"/></linearGradient><linearGradient id="rf41" x1="0" y1="0" x2="0" y2="1"><stop offset="0.000" stop-color="#606060"/><stop offset="0.033" stop-color="#5f5f5f"/><stop offset="0.084" stop-color="#626262"/><stop offset="0.135" stop-color="#646464"/><stop offset="0.186" stop-color="#606060"/><stop offset="0.237" stop-color="#5e5e5e"/><stop offset="0.288" stop-color="#636363"/><stop offset="0.338" stop-color="#717171"/><stop offset="0.389" stop-color="#7e7e7e"/><stop offset="0.440" stop-color="#6e6e6e"/><stop offset="0.491" stop-color="#626262"/><stop offset="0.542" stop-color="#5e5e5e"/><stop offset="0.593" stop-color="#545454"/><stop offset="0.644" stop-color="#5c5c5c"/><stop offset="0.695" stop-color="#727272"/><stop offset="0.746" stop-color="#828282"/><stop offset="0.796" stop-color="#888888"/><stop offset="0.847" stop-color="#939393"/><stop offset="0.898" stop-color="#a1a1a1"/><stop offset="0.949" stop-color="#a8a8a8"/><stop offset="1.000" stop-color="#b6b6b6"/></linearGradient><linearGradient id="rf42" x1="0" y1="0" x2="0" y2="1"><stop offset="0.000" stop-color="#636363"/><stop offset="0.041" stop-color="#646464"/><stop offset="0.093" stop-color="#636363"/><stop offset="0.144" stop-color="#626262"/><stop offset="0.196" stop-color="#5a5a5a"/><stop offset="0.247" stop-color="#606060"/><stop offset="0.299" stop-color="#646464"/><stop offset="0.351" stop-color="#6e6e6e"/><stop offset="0.402" stop-color="#777777"/><stop offset="0.454" stop-color="#6a6a6a"/><stop offset="0.505" stop-color="#5f5f5f"/><stop offset="0.557" stop-color="#555555"/><stop offset="0.608" stop-color="#4f4f4f"/><stop offset="0.660" stop-color="#636363"/><stop offset="0.711" stop-color="#777777"/><stop offset="0.763" stop-color="#888888"/><stop offset="0.814" stop-color="#8f8f8f"/><stop offset="0.866" stop-color="#949494"/><stop offset="0.918" stop-color="#a1a1a1"/><stop offset="0.969" stop-color="#ababab"/><stop offset="1.000" stop-color="#b3b3b3"/></linearGradient><linearGradient id="rf43" x1="0" y1="0" x2="0" y2="1"><stop offset="0.000" stop-color="#616161"/><stop offset="0.038" stop-color="#6e6e6e"/><stop offset="0.091" stop-color="#656565"/><stop offset="0.144" stop-color="#5c5c5c"/><stop offset="0.197" stop-color="#606060"/><stop offset="0.250" stop-color="#656565"/><stop offset="0.303" stop-color="#6e6e6e"/><stop offset="0.355" stop-color="#747474"/><stop offset="0.408" stop-color="#6c6c6c"/><stop offset="0.461" stop-color="#636363"/><stop offset="0.514" stop-color="#616161"/><stop offset="0.567" stop-color="#5e5e5e"/><stop offset="0.620" stop-color="#5f5f5f"/><stop offset="0.672" stop-color="#7a7a7a"/><stop offset="0.725" stop-color="#8b8b8b"/><stop offset="0.778" stop-color="#939393"/><stop offset="0.831" stop-color="#9d9d9d"/><stop offset="0.884" stop-color="#a5a5a5"/><stop offset="0.937" stop-color="#acacac"/><stop offset="0.989" stop-color="#afafaf"/><stop offset="1.000" stop-color="#b2b2b2"/></linearGradient><linearGradient id="rf44" x1="0" y1="0" x2="0" y2="1"><stop offset="0.000" stop-color="#5c5c5c"/><stop offset="0.036" stop-color="#686868"/><stop offset="0.090" stop-color="#606060"/><stop offset="0.143" stop-color="#575757"/><stop offset="0.197" stop-color="#5d5d5d"/><stop offset="0.250" stop-color="#626262"/><stop offset="0.304" stop-color="#6f6f6f"/><stop offset="0.357" stop-color="#717171"/><stop offset="0.411" stop-color="#5b5b5b"/><stop offset="0.465" stop-color="#505050"/><stop offset="0.518" stop-color="#606060"/><stop offset="0.572" stop-color="#5f5f5f"/><stop offset="0.625" stop-color="#5b5b5b"/><stop offset="0.679" stop-color="#7a7a7a"/><stop offset="0.732" stop-color="#8e8e8e"/><stop offset="0.786" stop-color="#929292"/><stop offset="0.839" stop-color="#9e9e9e"/><stop offset="0.893" stop-color="#a4a4a4"/><stop offset="0.946" stop-color="#ababab"/><stop offset="1.000" stop-color="#a8a8a8"/></linearGradient><linearGradient id="rf45" x1="0" y1="0" x2="0" y2="1"><stop offset="0.000" stop-color="#616161"/><stop offset="0.033" stop-color="#6f6f6f"/><stop offset="0.085" stop-color="#696969"/><stop offset="0.138" stop-color="#666666"/><stop offset="0.191" stop-color="#606060"/><stop offset="0.243" stop-color="#6d6d6d"/><stop offset="0.296" stop-color="#747474"/><stop offset="0.348" stop-color="#6e6e6e"/><stop offset="0.401" stop-color="#686868"/><stop offset="0.453" stop-color="#636363"/><stop offset="0.506" stop-color="#5e5e5e"/><stop offset="0.558" stop-color="#696969"/><stop offset="0.611" stop-color="#676767"/><stop offset="0.664" stop-color="#7b7b7b"/><stop offset="0.716" stop-color="#959595"/><stop offset="0.769" stop-color="#a0a0a0"/><stop offset="0.821" stop-color="#a2a2a2"/><stop offset="0.874" stop-color="#a7a7a7"/><stop offset="0.926" stop-color="#b1b1b1"/><stop offset="0.979" stop-color="#afafaf"/><stop offset="1.000" stop-color="#b8b8b8"/></linearGradient><linearGradient id="rf46" x1="0" y1="0" x2="0" y2="1"><stop offset="0.000" stop-color="#656565"/><stop offset="0.041" stop-color="#696969"/><stop offset="0.095" stop-color="#676767"/><stop offset="0.150" stop-color="#666666"/><stop offset="0.204" stop-color="#646464"/><stop offset="0.259" stop-color="#696969"/><stop offset="0.313" stop-color="#6a6a6a"/><stop offset="0.368" stop-color="#646464"/><stop offset="0.422" stop-color="#595959"/><stop offset="0.477" stop-color="#595959"/><stop offset="0.531" stop-color="#5c5c5c"/><stop offset="0.586" stop-color="#656565"/><stop offset="0.640" stop-color="#767676"/><stop offset="0.695" stop-color="#939393"/><stop offset="0.749" stop-color="#9e9e9e"/><stop offset="0.804" stop-color="#a4a4a4"/><stop offset="0.858" stop-color="#a2a2a2"/><stop offset="0.913" stop-color="#a1a1a1"/><stop offset="0.967" stop-color="#a8a8a8"/><stop offset="1.000" stop-color="#b2b2b2"/></linearGradient><linearGradient id="rf47" x1="0" y1="0" x2="0" y2="1"><stop offset="0.000" stop-color="#6b6b6b"/><stop offset="0.036" stop-color="#6a6a6a"/><stop offset="0.089" stop-color="#696969"/><stop offset="0.142" stop-color="#666666"/><stop offset="0.195" stop-color="#666666"/><stop offset="0.248" stop-color="#686868"/><stop offset="0.301" stop-color="#5c5c5c"/><stop offset="0.354" stop-color="#6c6c6c"/><stop offset="0.407" stop-color="#626262"/><stop offset="0.460" stop-color="#505050"/><stop offset="0.513" stop-color="#525252"/><stop offset="0.566" stop-color="#606060"/><stop offset="0.619" stop-color="#6c6c6c"/><stop offset="0.672" stop-color="#7e7e7e"/><stop offset="0.725" stop-color="#909090"/><stop offset="0.777" stop-color="#9a9a9a"/><stop offset="0.830" stop-color="#a5a5a5"/><stop offset="0.883" stop-color="#9e9e9e"/><stop offset="0.936" stop-color="#a3a3a3"/><stop offset="0.989" stop-color="#a9a9a9"/><stop offset="1.000" stop-color="#b1b1b1"/></linearGradient><linearGradient id="rf48" x1="0" y1="0" x2="0" y2="1"><stop offset="0.000" stop-color="#737373"/><stop offset="0.043" stop-color="#6c6c6c"/><stop offset="0.098" stop-color="#6e6e6e"/><stop offset="0.152" stop-color="#696969"/><stop offset="0.207" stop-color="#666666"/><stop offset="0.261" stop-color="#707070"/><stop offset="0.315" stop-color="#737373"/><stop offset="0.370" stop-color="#747474"/><stop offset="0.424" stop-color="#606060"/><stop offset="0.478" stop-color="#5b5b5b"/><stop offset="0.533" stop-color="#646464"/><stop offset="0.587" stop-color="#6a6a6a"/><stop offset="0.641" stop-color="#7b7b7b"/><stop offset="0.696" stop-color="#8c8c8c"/><stop offset="0.750" stop-color="#9e9e9e"/><stop offset="0.804" stop-color="#acacac"/><stop offset="0.859" stop-color="#b4b4b4"/><stop offset="0.913" stop-color="#afafaf"/><stop offset="0.967" stop-color="#aeaeae"/><stop offset="1.000" stop-color="#acacac"/></linearGradient><linearGradient id="rf49" x1="0" y1="0" x2="0" y2="1"><stop offset="0.000" stop-color="#606060"/><stop offset="0.040" stop-color="#626262"/><stop offset="0.092" stop-color="#636363"/><stop offset="0.145" stop-color="#5d5d5d"/><stop offset="0.198" stop-color="#565656"/><stop offset="0.251" stop-color="#5a5a5a"/><stop offset="0.303" stop-color="#656565"/><stop offset="0.356" stop-color="#6e6e6e"/><stop offset="0.409" stop-color="#6a6a6a"/><stop offset="0.462" stop-color="#575757"/><stop offset="0.515" stop-color="#5a5a5a"/><stop offset="0.567" stop-color="#5f5f5f"/><stop offset="0.620" stop-color="#606060"/><stop offset="0.673" stop-color="#707070"/><stop offset="0.726" stop-color="#838383"/><stop offset="0.778" stop-color="#979797"/><stop offset="0.831" stop-color="#a5a5a5"/><stop offset="0.884" stop-color="#a1a1a1"/><stop offset="0.937" stop-color="#a6a6a6"/><stop offset="0.989" stop-color="#acacac"/><stop offset="1.000" stop-color="#adadad"/></linearGradient><linearGradient id="rf50" x1="0" y1="0" x2="0" y2="1"><stop offset="0.000" stop-color="#626262"/><stop offset="0.036" stop-color="#656565"/><stop offset="0.090" stop-color="#6a6a6a"/><stop offset="0.143" stop-color="#616161"/><stop offset="0.197" stop-color="#5e5e5e"/><stop offset="0.250" stop-color="#666666"/><stop offset="0.304" stop-color="#717171"/><stop offset="0.357" stop-color="#7b7b7b"/><stop offset="0.411" stop-color="#747474"/><stop offset="0.465" stop-color="#636363"/><stop offset="0.518" stop-color="#666666"/><stop offset="0.572" stop-color="#696969"/><stop offset="0.625" stop-color="#717171"/><stop offset="0.679" stop-color="#7f7f7f"/><stop offset="0.732" stop-color="#8a8a8a"/><stop offset="0.786" stop-color="#9c9c9c"/><stop offset="0.839" stop-color="#aeaeae"/><stop offset="0.893" stop-color="#ababab"/><stop offset="0.946" stop-color="#adadad"/><stop offset="1.000" stop-color="#b3b3b3"/></linearGradient><linearGradient id="rf51" x1="0" y1="0" x2="0" y2="1"><stop offset="0.000" stop-color="#696969"/><stop offset="0.042" stop-color="#606060"/><stop offset="0.095" stop-color="#606060"/><stop offset="0.147" stop-color="#555555"/><stop offset="0.200" stop-color="#4f4f4f"/><stop offset="0.253" stop-color="#5e5e5e"/><stop offset="0.305" stop-color="#717171"/><stop offset="0.358" stop-color="#717171"/><stop offset="0.411" stop-color="#656565"/><stop offset="0.463" stop-color="#6a6a6a"/><stop offset="0.516" stop-color="#616161"/><stop offset="0.568" stop-color="#5e5e5e"/><stop offset="0.621" stop-color="#656565"/><stop offset="0.674" stop-color="#6d6d6d"/><stop offset="0.726" stop-color="#868686"/><stop offset="0.779" stop-color="#969696"/><stop offset="0.832" stop-color="#a4a4a4"/><stop offset="0.884" stop-color="#a9a9a9"/><stop offset="0.937" stop-color="#aeaeae"/><stop offset="0.989" stop-color="#afafaf"/><stop offset="1.000" stop-color="#b3b3b3"/></linearGradient><linearGradient id="rf52" x1="0" y1="0" x2="0" y2="1"><stop offset="0.000" stop-color="#6d6d6d"/><stop offset="0.042" stop-color="#656565"/><stop offset="0.095" stop-color="#606060"/><stop offset="0.149" stop-color="#595959"/><stop offset="0.203" stop-color="#5a5a5a"/><stop offset="0.257" stop-color="#6e6e6e"/><stop offset="0.311" stop-color="#7a7a7a"/><stop offset="0.365" stop-color="#747474"/><stop offset="0.418" stop-color="#696969"/><stop offset="0.472" stop-color="#727272"/><stop offset="0.526" stop-color="#616161"/><stop offset="0.580" stop-color="#656565"/><stop offset="0.634" stop-color="#717171"/><stop offset="0.688" stop-color="#818181"/><stop offset="0.742" stop-color="#919191"/><stop offset="0.795" stop-color="#a3a3a3"/><stop offset="0.849" stop-color="#afafaf"/><stop offset="0.903" stop-color="#b6b6b6"/><stop offset="0.957" stop-color="#bebebe"/><stop offset="1.000" stop-color="#bababa"/></linearGradient><linearGradient id="rf53" x1="0" y1="0" x2="0" y2="1"><stop offset="0.000" stop-color="#626262"/><stop offset="0.041" stop-color="#676767"/><stop offset="0.095" stop-color="#5c5c5c"/><stop offset="0.150" stop-color="#4f4f4f"/><stop offset="0.204" stop-color="#5f5f5f"/><stop offset="0.259" stop-color="#6b6b6b"/><stop offset="0.313" stop-color="#707070"/><stop offset="0.368" stop-color="#6f6f6f"/><stop offset="0.422" stop-color="#696969"/><stop offset="0.477" stop-color="#646464"/><stop offset="0.531" stop-color="#656565"/><stop offset="0.586" stop-color="#636363"/><stop offset="0.640" stop-color="#707070"/><stop offset="0.695" stop-color="#878787"/><stop offset="0.749" stop-color="#979797"/><stop offset="0.804" stop-color="#a5a5a5"/><stop offset="0.858" stop-color="#a6a6a6"/><stop offset="0.913" stop-color="#b9b9b9"/><stop offset="0.967" stop-color="#c2c2c2"/><stop offset="1.000" stop-color="#bababa"/></linearGradient><linearGradient id="rf54" x1="0" y1="0" x2="0" y2="1"><stop offset="0.000" stop-color="#6c6c6c"/><stop offset="0.038" stop-color="#6a6a6a"/><stop offset="0.091" stop-color="#6c6c6c"/><stop offset="0.145" stop-color="#5f5f5f"/><stop offset="0.198" stop-color="#5e5e5e"/><stop offset="0.251" stop-color="#616161"/><stop offset="0.305" stop-color="#767676"/><stop offset="0.358" stop-color="#757575"/><stop offset="0.412" stop-color="#6b6b6b"/><stop offset="0.465" stop-color="#606060"/><stop offset="0.519" stop-color="#6c6c6c"/><stop offset="0.572" stop-color="#6c6c6c"/><stop offset="0.626" stop-color="#737373"/><stop offset="0.679" stop-color="#858585"/><stop offset="0.733" stop-color="#8b8b8b"/><stop offset="0.786" stop-color="#9c9c9c"/><stop offset="0.840" stop-color="#a8a8a8"/><stop offset="0.893" stop-color="#b1b1b1"/><stop offset="0.947" stop-color="#c6c6c6"/><stop offset="1.000" stop-color="#c2c2c2"/></linearGradient><linearGradient id="rf55" x1="0" y1="0" x2="0" y2="1"><stop offset="0.000" stop-color="#5d5d5d"/><stop offset="0.036" stop-color="#606060"/><stop offset="0.090" stop-color="#646464"/><stop offset="0.144" stop-color="#555555"/><stop offset="0.198" stop-color="#5f5f5f"/><stop offset="0.253" stop-color="#686868"/><stop offset="0.307" stop-color="#686868"/><stop offset="0.361" stop-color="#686868"/><stop offset="0.415" stop-color="#696969"/><stop offset="0.469" stop-color="#606060"/><stop offset="0.523" stop-color="#686868"/><stop offset="0.578" stop-color="#676767"/><stop offset="0.632" stop-color="#7a7a7a"/><stop offset="0.686" stop-color="#898989"/><stop offset="0.740" stop-color="#8f8f8f"/><stop offset="0.794" stop-color="#9d9d9d"/><stop offset="0.848" stop-color="#aaaaaa"/><stop offset="0.903" stop-color="#b8b8b8"/><stop offset="0.957" stop-color="#bbbbbb"/><stop offset="1.000" stop-color="#bdbdbd"/></linearGradient><linearGradient id="rf56" x1="0" y1="0" x2="0" y2="1"><stop offset="0.000" stop-color="#616161"/><stop offset="0.034" stop-color="#595959"/><stop offset="0.087" stop-color="#5d5d5d"/><stop offset="0.140" stop-color="#585858"/><stop offset="0.193" stop-color="#606060"/><stop offset="0.246" stop-color="#666666"/><stop offset="0.299" stop-color="#666666"/><stop offset="0.352" stop-color="#676767"/><stop offset="0.405" stop-color="#656565"/><stop offset="0.458" stop-color="#5c5c5c"/><stop offset="0.512" stop-color="#636363"/><stop offset="0.565" stop-color="#636363"/><stop offset="0.618" stop-color="#797979"/><stop offset="0.671" stop-color="#898989"/><stop offset="0.724" stop-color="#8d8d8d"/><stop offset="0.777" stop-color="#909090"/><stop offset="0.830" stop-color="#a6a6a6"/><stop offset="0.883" stop-color="#a8a8a8"/><stop offset="0.936" stop-color="#b7b7b7"/><stop offset="0.989" stop-color="#bcbcbc"/><stop offset="1.000" stop-color="#c0c0c0"/></linearGradient><linearGradient id="rf57" x1="0" y1="0" x2="0" y2="1"><stop offset="0.000" stop-color="#656565"/><stop offset="0.043" stop-color="#656565"/><stop offset="0.097" stop-color="#676767"/><stop offset="0.152" stop-color="#676767"/><stop offset="0.206" stop-color="#747474"/><stop offset="0.261" stop-color="#747474"/><stop offset="0.315" stop-color="#787878"/><stop offset="0.369" stop-color="#767676"/><stop offset="0.424" stop-color="#747474"/><stop offset="0.478" stop-color="#6c6c6c"/><stop offset="0.532" stop-color="#727272"/><stop offset="0.587" stop-color="#7a7a7a"/><stop offset="0.641" stop-color="#8f8f8f"/><stop offset="0.696" stop-color="#969696"/><stop offset="0.750" stop-color="#999999"/><stop offset="0.804" stop-color="#9f9f9f"/><stop offset="0.859" stop-color="#b6b6b6"/><stop offset="0.913" stop-color="#c2c2c2"/><stop offset="0.967" stop-color="#d1d1d1"/><stop offset="1.000" stop-color="#d4d4d4"/></linearGradient><linearGradient id="rf58" x1="0" y1="0" x2="0" y2="1"><stop offset="0.000" stop-color="#616161"/><stop offset="0.043" stop-color="#656565"/><stop offset="0.099" stop-color="#5f5f5f"/><stop offset="0.156" stop-color="#707070"/><stop offset="0.212" stop-color="#727272"/><stop offset="0.268" stop-color="#707070"/><stop offset="0.325" stop-color="#757575"/><stop offset="0.381" stop-color="#6c6c6c"/><stop offset="0.437" stop-color="#6e6e6e"/><stop offset="0.493" stop-color="#777777"/><stop offset="0.550" stop-color="#717171"/><stop offset="0.606" stop-color="#818181"/><stop offset="0.662" stop-color="#959595"/><stop offset="0.719" stop-color="#9c9c9c"/><stop offset="0.775" stop-color="#9e9e9e"/><stop offset="0.831" stop-color="#ababab"/><stop offset="0.887" stop-color="#bababa"/><stop offset="0.944" stop-color="#cbcbcb"/><stop offset="1.000" stop-color="#d9d9d9"/></linearGradient><linearGradient id="rf59" x1="0" y1="0" x2="0" y2="1"><stop offset="0.000" stop-color="#5e5e5e"/><stop offset="0.040" stop-color="#5e5e5e"/><stop offset="0.094" stop-color="#686868"/><stop offset="0.148" stop-color="#696969"/><stop offset="0.202" stop-color="#6e6e6e"/><stop offset="0.256" stop-color="#727272"/><stop offset="0.310" stop-color="#707070"/><stop offset="0.363" stop-color="#747474"/><stop offset="0.417" stop-color="#727272"/><stop offset="0.471" stop-color="#6e6e6e"/><stop offset="0.525" stop-color="#727272"/><stop offset="0.579" stop-color="#787878"/><stop offset="0.633" stop-color="#848484"/><stop offset="0.687" stop-color="#959595"/><stop offset="0.741" stop-color="#9a9a9a"/><stop offset="0.795" stop-color="#a0a0a0"/><stop offset="0.849" stop-color="#b7b7b7"/><stop offset="0.903" stop-color="#bfbfbf"/><stop offset="0.957" stop-color="#c5c5c5"/><stop offset="1.000" stop-color="#d5d5d5"/></linearGradient><linearGradient id="rf60" x1="0" y1="0" x2="0" y2="1"><stop offset="0.000" stop-color="#616161"/><stop offset="0.038" stop-color="#5c5c5c"/><stop offset="0.092" stop-color="#656565"/><stop offset="0.146" stop-color="#656565"/><stop offset="0.200" stop-color="#707070"/><stop offset="0.254" stop-color="#757575"/><stop offset="0.308" stop-color="#727272"/><stop offset="0.362" stop-color="#7a7a7a"/><stop offset="0.416" stop-color="#6e6e6e"/><stop offset="0.470" stop-color="#6f6f6f"/><stop offset="0.524" stop-color="#7a7a7a"/><stop offset="0.578" stop-color="#797979"/><stop offset="0.632" stop-color="#898989"/><stop offset="0.686" stop-color="#939393"/><stop offset="0.740" stop-color="#9e9e9e"/><stop offset="0.795" stop-color="#a4a4a4"/><stop offset="0.849" stop-color="#bdbdbd"/><stop offset="0.903" stop-color="#c6c6c6"/><stop offset="0.957" stop-color="#c3c3c3"/><stop offset="1.000" stop-color="#d2d2d2"/></linearGradient><linearGradient id="rf61" x1="0" y1="0" x2="0" y2="1"><stop offset="0.000" stop-color="#525252"/><stop offset="0.034" stop-color="#565656"/><stop offset="0.088" stop-color="#565656"/><stop offset="0.142" stop-color="#505050"/><stop offset="0.195" stop-color="#525252"/><stop offset="0.249" stop-color="#626262"/><stop offset="0.303" stop-color="#606060"/><stop offset="0.356" stop-color="#6a6a6a"/><stop offset="0.410" stop-color="#656565"/><stop offset="0.464" stop-color="#5f5f5f"/><stop offset="0.517" stop-color="#5e5e5e"/><stop offset="0.571" stop-color="#6b6b6b"/><stop offset="0.624" stop-color="#707070"/><stop offset="0.678" stop-color="#828282"/><stop offset="0.732" stop-color="#989898"/><stop offset="0.785" stop-color="#a6a6a6"/><stop offset="0.839" stop-color="#a8a8a8"/><stop offset="0.893" stop-color="#b9b9b9"/><stop offset="0.946" stop-color="#bdbdbd"/><stop offset="1.000" stop-color="#cacaca"/></linearGradient><linearGradient id="rf62" x1="0" y1="0" x2="0" y2="1"><stop offset="0.000" stop-color="#535353"/><stop offset="0.038" stop-color="#4d4d4d"/><stop offset="0.092" stop-color="#4d4d4d"/><stop offset="0.146" stop-color="#515151"/><stop offset="0.200" stop-color="#4e4e4e"/><stop offset="0.254" stop-color="#585858"/><stop offset="0.308" stop-color="#5f5f5f"/><stop offset="0.362" stop-color="#646464"/><stop offset="0.416" stop-color="#6a6a6a"/><stop offset="0.470" stop-color="#5b5b5b"/><stop offset="0.524" stop-color="#646464"/><stop offset="0.578" stop-color="#656565"/><stop offset="0.632" stop-color="#747474"/><stop offset="0.686" stop-color="#898989"/><stop offset="0.741" stop-color="#8f8f8f"/><stop offset="0.795" stop-color="#a1a1a1"/><stop offset="0.849" stop-color="#acacac"/><stop offset="0.903" stop-color="#b6b6b6"/><stop offset="0.957" stop-color="#c2c2c2"/><stop offset="1.000" stop-color="#c7c7c7"/></linearGradient><linearGradient id="rf63" x1="0" y1="0" x2="0" y2="1"><stop offset="0.000" stop-color="#575757"/><stop offset="0.045" stop-color="#545454"/><stop offset="0.101" stop-color="#5e5e5e"/><stop offset="0.157" stop-color="#545454"/><stop offset="0.213" stop-color="#5d5d5d"/><stop offset="0.270" stop-color="#626262"/><stop offset="0.326" stop-color="#757575"/><stop offset="0.382" stop-color="#6e6e6e"/><stop offset="0.438" stop-color="#696969"/><stop offset="0.494" stop-color="#6a6a6a"/><stop offset="0.551" stop-color="#737373"/><stop offset="0.607" stop-color="#808080"/><stop offset="0.663" stop-color="#8c8c8c"/><stop offset="0.719" stop-color="#969696"/><stop offset="0.775" stop-color="#a4a4a4"/><stop offset="0.831" stop-color="#aeaeae"/><stop offset="0.888" stop-color="#bebebe"/><stop offset="0.944" stop-color="#cccccc"/><stop offset="1.000" stop-color="#cdcdcd"/></linearGradient><linearGradient id="rf64" x1="0" y1="0" x2="0" y2="1"><stop offset="0.000" stop-color="#5e5e5e"/><stop offset="0.045" stop-color="#5c5c5c"/><stop offset="0.102" stop-color="#646464"/><stop offset="0.159" stop-color="#616161"/><stop offset="0.216" stop-color="#636363"/><stop offset="0.273" stop-color="#737373"/><stop offset="0.330" stop-color="#727272"/><stop offset="0.386" stop-color="#6d6d6d"/><stop offset="0.443" stop-color="#6f6f6f"/><stop offset="0.500" stop-color="#777777"/><stop offset="0.557" stop-color="#7c7c7c"/><stop offset="0.614" stop-color="#898989"/><stop offset="0.670" stop-color="#969696"/><stop offset="0.727" stop-color="#999999"/><stop offset="0.784" stop-color="#afafaf"/><stop offset="0.841" stop-color="#bababa"/><stop offset="0.898" stop-color="#c3c3c3"/><stop offset="0.955" stop-color="#cfcfcf"/><stop offset="1.000" stop-color="#d2d2d2"/></linearGradient><linearGradient id="rf65" x1="0" y1="0" x2="0" y2="1"><stop offset="0.000" stop-color="#585858"/><stop offset="0.045" stop-color="#5c5c5c"/><stop offset="0.102" stop-color="#686868"/><stop offset="0.159" stop-color="#636363"/><stop offset="0.216" stop-color="#727272"/><stop offset="0.273" stop-color="#636363"/><stop offset="0.330" stop-color="#717171"/><stop offset="0.386" stop-color="#777777"/><stop offset="0.443" stop-color="#797979"/><stop offset="0.500" stop-color="#7e7e7e"/><stop offset="0.557" stop-color="#868686"/><stop offset="0.614" stop-color="#929292"/><stop offset="0.670" stop-color="#969696"/><stop offset="0.727" stop-color="#a1a1a1"/><stop offset="0.784" stop-color="#b2b2b2"/><stop offset="0.841" stop-color="#b8b8b8"/><stop offset="0.898" stop-color="#c2c2c2"/><stop offset="0.955" stop-color="#cdcdcd"/><stop offset="1.000" stop-color="#cfcfcf"/></linearGradient><linearGradient id="rf66" x1="0" y1="0" x2="0" y2="1"><stop offset="0.000" stop-color="#5a5a5a"/><stop offset="0.046" stop-color="#676767"/><stop offset="0.103" stop-color="#6d6d6d"/><stop offset="0.161" stop-color="#616161"/><stop offset="0.218" stop-color="#656565"/><stop offset="0.276" stop-color="#6c6c6c"/><stop offset="0.333" stop-color="#6d6d6d"/><stop offset="0.391" stop-color="#787878"/><stop offset="0.448" stop-color="#858585"/><stop offset="0.506" stop-color="#898989"/><stop offset="0.563" stop-color="#909090"/><stop offset="0.621" stop-color="#979797"/><stop offset="0.678" stop-color="#9c9c9c"/><stop offset="0.736" stop-color="#ababab"/><stop offset="0.793" stop-color="#b5b5b5"/><stop offset="0.851" stop-color="#c0c0c0"/><stop offset="0.908" stop-color="#d1d1d1"/><stop offset="0.966" stop-color="#d5d5d5"/><stop offset="1.000" stop-color="#d7d7d7"/></linearGradient><linearGradient id="rf67" x1="0" y1="0" x2="0" y2="1"><stop offset="0.000" stop-color="#616161"/><stop offset="0.045" stop-color="#676767"/><stop offset="0.102" stop-color="#6d6d6d"/><stop offset="0.159" stop-color="#6e6e6e"/><stop offset="0.216" stop-color="#6a6a6a"/><stop offset="0.273" stop-color="#696969"/><stop offset="0.330" stop-color="#767676"/><stop offset="0.386" stop-color="#767676"/><stop offset="0.443" stop-color="#898989"/><stop offset="0.500" stop-color="#8b8b8b"/><stop offset="0.557" stop-color="#848484"/><stop offset="0.614" stop-color="#969696"/><stop offset="0.670" stop-color="#9f9f9f"/><stop offset="0.727" stop-color="#afafaf"/><stop offset="0.784" stop-color="#b0b0b0"/><stop offset="0.841" stop-color="#bfbfbf"/><stop offset="0.898" stop-color="#cdcdcd"/><stop offset="0.955" stop-color="#d5d5d5"/><stop offset="1.000" stop-color="#d9d9d9"/></linearGradient><linearGradient id="rf68" x1="0" y1="0" x2="0" y2="1"><stop offset="0.000" stop-color="#606060"/><stop offset="0.045" stop-color="#616161"/><stop offset="0.102" stop-color="#656565"/><stop offset="0.159" stop-color="#717171"/><stop offset="0.216" stop-color="#5e5e5e"/><stop offset="0.273" stop-color="#676767"/><stop offset="0.330" stop-color="#777777"/><stop offset="0.386" stop-color="#7b7b7b"/><stop offset="0.443" stop-color="#838383"/><stop offset="0.500" stop-color="#818181"/><stop offset="0.557" stop-color="#8d8d8d"/><stop offset="0.614" stop-color="#979797"/><stop offset="0.670" stop-color="#a2a2a2"/><stop offset="0.727" stop-color="#a9a9a9"/><stop offset="0.784" stop-color="#b5b5b5"/><stop offset="0.841" stop-color="#c2c2c2"/><stop offset="0.898" stop-color="#c8c8c8"/><stop offset="0.955" stop-color="#d2d2d2"/><stop offset="1.000" stop-color="#cccccc"/></linearGradient><linearGradient id="rf69" x1="0" y1="0" x2="0" y2="1"><stop offset="0.000" stop-color="#636363"/><stop offset="0.043" stop-color="#6d6d6d"/><stop offset="0.096" stop-color="#636363"/><stop offset="0.149" stop-color="#6a6a6a"/><stop offset="0.202" stop-color="#6e6e6e"/><stop offset="0.255" stop-color="#676767"/><stop offset="0.309" stop-color="#6f6f6f"/><stop offset="0.362" stop-color="#6c6c6c"/><stop offset="0.415" stop-color="#808080"/><stop offset="0.468" stop-color="#7e7e7e"/><stop offset="0.521" stop-color="#878787"/><stop offset="0.574" stop-color="#8d8d8d"/><stop offset="0.628" stop-color="#9f9f9f"/><stop offset="0.681" stop-color="#a3a3a3"/><stop offset="0.734" stop-color="#b3b3b3"/><stop offset="0.787" stop-color="#b7b7b7"/><stop offset="0.840" stop-color="#bfbfbf"/><stop offset="0.894" stop-color="#cdcdcd"/><stop offset="0.947" stop-color="#d0d0d0"/><stop offset="1.000" stop-color="#d0d0d0"/></linearGradient><linearGradient id="rf70" x1="0" y1="0" x2="0" y2="1"><stop offset="0.000" stop-color="#5a5a5a"/><stop offset="0.042" stop-color="#585858"/><stop offset="0.095" stop-color="#666666"/><stop offset="0.147" stop-color="#636363"/><stop offset="0.200" stop-color="#6c6c6c"/><stop offset="0.253" stop-color="#606060"/><stop offset="0.305" stop-color="#6b6b6b"/><stop offset="0.358" stop-color="#676767"/><stop offset="0.411" stop-color="#797979"/><stop offset="0.463" stop-color="#717171"/><stop offset="0.516" stop-color="#808080"/><stop offset="0.568" stop-color="#868686"/><stop offset="0.621" stop-color="#919191"/><stop offset="0.674" stop-color="#a5a5a5"/><stop offset="0.726" stop-color="#b2b2b2"/><stop offset="0.779" stop-color="#b4b4b4"/><stop offset="0.832" stop-color="#b4b4b4"/><stop offset="0.884" stop-color="#bebebe"/><stop offset="0.937" stop-color="#c6c6c6"/><stop offset="0.989" stop-color="#c4c4c4"/><stop offset="1.000" stop-color="#cacaca"/></linearGradient><linearGradient id="rf71" x1="0" y1="0" x2="0" y2="1"><stop offset="0.000" stop-color="#656565"/><stop offset="0.041" stop-color="#626262"/><stop offset="0.093" stop-color="#5f5f5f"/><stop offset="0.144" stop-color="#6a6a6a"/><stop offset="0.196" stop-color="#6a6a6a"/><stop offset="0.247" stop-color="#6c6c6c"/><stop offset="0.299" stop-color="#666666"/><stop offset="0.351" stop-color="#696969"/><stop offset="0.402" stop-color="#767676"/><stop offset="0.454" stop-color="#808080"/><stop offset="0.505" stop-color="#878787"/><stop offset="0.557" stop-color="#8d8d8d"/><stop offset="0.608" stop-color="#909090"/><stop offset="0.660" stop-color="#a0a0a0"/><stop offset="0.711" stop-color="#aeaeae"/><stop offset="0.763" stop-color="#b1b1b1"/><stop offset="0.814" stop-color="#c7c7c7"/><stop offset="0.866" stop-color="#c3c3c3"/><stop offset="0.918" stop-color="#c7c7c7"/><stop offset="0.969" stop-color="#c7c7c7"/><stop offset="1.000" stop-color="#d1d1d1"/></linearGradient><linearGradient id="rf72" x1="0" y1="0" x2="0" y2="1"><stop offset="0.000" stop-color="#5a5a5a"/><stop offset="0.040" stop-color="#5f5f5f"/><stop offset="0.091" stop-color="#505050"/><stop offset="0.141" stop-color="#575757"/><stop offset="0.192" stop-color="#5e5e5e"/><stop offset="0.242" stop-color="#646464"/><stop offset="0.293" stop-color="#5f5f5f"/><stop offset="0.343" stop-color="#626262"/><stop offset="0.394" stop-color="#636363"/><stop offset="0.444" stop-color="#747474"/><stop offset="0.495" stop-color="#797979"/><stop offset="0.545" stop-color="#878787"/><stop offset="0.596" stop-color="#959595"/><stop offset="0.646" stop-color="#949494"/><stop offset="0.697" stop-color="#a0a0a0"/><stop offset="0.747" stop-color="#a8a8a8"/><stop offset="0.798" stop-color="#bbbbbb"/><stop offset="0.848" stop-color="#bbbbbb"/><stop offset="0.899" stop-color="#b8b8b8"/><stop offset="0.949" stop-color="#bdbdbd"/><stop offset="1.000" stop-color="#c9c9c9"/></linearGradient><linearGradient id="rf73" x1="0" y1="0" x2="0" y2="1"><stop offset="0.000" stop-color="#585858"/><stop offset="0.041" stop-color="#585858"/><stop offset="0.093" stop-color="#5d5d5d"/><stop offset="0.144" stop-color="#5d5d5d"/><stop offset="0.196" stop-color="#666666"/><stop offset="0.247" stop-color="#626262"/><stop offset="0.299" stop-color="#636363"/><stop offset="0.351" stop-color="#6c6c6c"/><stop offset="0.402" stop-color="#707070"/><stop offset="0.454" stop-color="#7a7a7a"/><stop offset="0.505" stop-color="#848484"/><stop offset="0.557" stop-color="#979797"/><stop offset="0.608" stop-color="#a6a6a6"/><stop offset="0.660" stop-color="#ababab"/><stop offset="0.711" stop-color="#b4b4b4"/><stop offset="0.763" stop-color="#bdbdbd"/><stop offset="0.814" stop-color="#c3c3c3"/><stop offset="0.866" stop-color="#c7c7c7"/><stop offset="0.918" stop-color="#cdcdcd"/><stop offset="0.969" stop-color="#d2d2d2"/><stop offset="1.000" stop-color="#dbdbdb"/></linearGradient><linearGradient id="rf74" x1="0" y1="0" x2="0" y2="1"><stop offset="0.000" stop-color="#565656"/><stop offset="0.037" stop-color="#565656"/><stop offset="0.089" stop-color="#555555"/><stop offset="0.141" stop-color="#5a5a5a"/><stop offset="0.194" stop-color="#646464"/><stop offset="0.246" stop-color="#646464"/><stop offset="0.298" stop-color="#616161"/><stop offset="0.351" stop-color="#696969"/><stop offset="0.403" stop-color="#757575"/><stop offset="0.455" stop-color="#7f7f7f"/><stop offset="0.508" stop-color="#858585"/><stop offset="0.560" stop-color="#9d9d9d"/><stop offset="0.613" stop-color="#aaaaaa"/><stop offset="0.665" stop-color="#b9b9b9"/><stop offset="0.717" stop-color="#bebebe"/><stop offset="0.770" stop-color="#c2c2c2"/><stop offset="0.822" stop-color="#c9c9c9"/><stop offset="0.874" stop-color="#d2d2d2"/><stop offset="0.927" stop-color="#cecece"/><stop offset="0.979" stop-color="#dddddd"/><stop offset="1.000" stop-color="#e4e4e4"/></linearGradient><linearGradient id="rf75" x1="0" y1="0" x2="0" y2="1"><stop offset="0.000" stop-color="#525252"/><stop offset="0.047" stop-color="#5a5a5a"/><stop offset="0.105" stop-color="#656565"/><stop offset="0.163" stop-color="#666666"/><stop offset="0.221" stop-color="#636363"/><stop offset="0.279" stop-color="#616161"/><stop offset="0.337" stop-color="#797979"/><stop offset="0.395" stop-color="#8c8c8c"/><stop offset="0.453" stop-color="#909090"/><stop offset="0.512" stop-color="#9d9d9d"/><stop offset="0.570" stop-color="#b3b3b3"/><stop offset="0.628" stop-color="#c1c1c1"/><stop offset="0.686" stop-color="#bdbdbd"/><stop offset="0.744" stop-color="#bebebe"/><stop offset="0.802" stop-color="#d0d0d0"/><stop offset="0.860" stop-color="#cfcfcf"/><stop offset="0.919" stop-color="#dadada"/><stop offset="0.977" stop-color="#e3e3e3"/><stop offset="1.000" stop-color="#e5e5e5"/></linearGradient><linearGradient id="rf76" x1="0" y1="0" x2="0" y2="1"><stop offset="0.000" stop-color="#4f4f4f"/><stop offset="0.041" stop-color="#5a5a5a"/><stop offset="0.102" stop-color="#5a5a5a"/><stop offset="0.163" stop-color="#5d5d5d"/><stop offset="0.223" stop-color="#606060"/><stop offset="0.284" stop-color="#696969"/><stop offset="0.345" stop-color="#7a7a7a"/><stop offset="0.405" stop-color="#8e8e8e"/><stop offset="0.466" stop-color="#949494"/><stop offset="0.527" stop-color="#a1a1a1"/><stop offset="0.587" stop-color="#b5b5b5"/><stop offset="0.648" stop-color="#bdbdbd"/><stop offset="0.709" stop-color="#bfbfbf"/><stop offset="0.769" stop-color="#c9c9c9"/><stop offset="0.830" stop-color="#cdcdcd"/><stop offset="0.891" stop-color="#cacaca"/><stop offset="0.951" stop-color="#d9d9d9"/><stop offset="1.000" stop-color="#e6e6e6"/></linearGradient><linearGradient id="rf77" x1="0" y1="0" x2="0" y2="1"><stop offset="0.000" stop-color="#5d5d5d"/><stop offset="0.045" stop-color="#585858"/><stop offset="0.107" stop-color="#5f5f5f"/><stop offset="0.169" stop-color="#6c6c6c"/><stop offset="0.231" stop-color="#727272"/><stop offset="0.293" stop-color="#767676"/><stop offset="0.355" stop-color="#888888"/><stop offset="0.417" stop-color="#979797"/><stop offset="0.479" stop-color="#9f9f9f"/><stop offset="0.541" stop-color="#aeaeae"/><stop offset="0.603" stop-color="#bdbdbd"/><stop offset="0.665" stop-color="#c0c0c0"/><stop offset="0.727" stop-color="#d0d0d0"/><stop offset="0.789" stop-color="#d3d3d3"/><stop offset="0.851" stop-color="#cdcdcd"/><stop offset="0.913" stop-color="#d8d8d8"/><stop offset="0.975" stop-color="#e1e1e1"/><stop offset="1.000" stop-color="#eeeeee"/></linearGradient><linearGradient id="rf78" x1="0" y1="0" x2="0" y2="1"><stop offset="0.000" stop-color="#454545"/><stop offset="0.048" stop-color="#525252"/><stop offset="0.117" stop-color="#676767"/><stop offset="0.186" stop-color="#6d6d6d"/><stop offset="0.255" stop-color="#787878"/><stop offset="0.324" stop-color="#878787"/><stop offset="0.393" stop-color="#909090"/><stop offset="0.462" stop-color="#9c9c9c"/><stop offset="0.531" stop-color="#a5a5a5"/><stop offset="0.600" stop-color="#afafaf"/><stop offset="0.669" stop-color="#bebebe"/><stop offset="0.738" stop-color="#d4d4d4"/><stop offset="0.807" stop-color="#d0d0d0"/><stop offset="0.876" stop-color="#cbcbcb"/><stop offset="0.945" stop-color="#d8d8d8"/><stop offset="1.000" stop-color="#e9e9e9"/></linearGradient><linearGradient id="rf79" x1="0" y1="0" x2="0" y2="1"><stop offset="0.000" stop-color="#434343"/><stop offset="0.045" stop-color="#515151"/><stop offset="0.114" stop-color="#616161"/><stop offset="0.183" stop-color="#737373"/><stop offset="0.253" stop-color="#767676"/><stop offset="0.322" stop-color="#7f7f7f"/><stop offset="0.391" stop-color="#868686"/><stop offset="0.460" stop-color="#929292"/><stop offset="0.529" stop-color="#a4a4a4"/><stop offset="0.599" stop-color="#b0b0b0"/><stop offset="0.668" stop-color="#bfbfbf"/><stop offset="0.737" stop-color="#c7c7c7"/><stop offset="0.806" stop-color="#cccccc"/><stop offset="0.875" stop-color="#c6c6c6"/><stop offset="0.945" stop-color="#d7d7d7"/><stop offset="1.000" stop-color="#e5e5e5"/></linearGradient><linearGradient id="rf80" x1="0" y1="0" x2="0" y2="1"><stop offset="0.000" stop-color="#4b4b4b"/><stop offset="0.053" stop-color="#676767"/><stop offset="0.128" stop-color="#757575"/><stop offset="0.203" stop-color="#7a7a7a"/><stop offset="0.278" stop-color="#808080"/><stop offset="0.353" stop-color="#909090"/><stop offset="0.429" stop-color="#9d9d9d"/><stop offset="0.504" stop-color="#a6a6a6"/><stop offset="0.579" stop-color="#b9b9b9"/><stop offset="0.654" stop-color="#c9c9c9"/><stop offset="0.729" stop-color="#cdcdcd"/><stop offset="0.805" stop-color="#cdcdcd"/><stop offset="0.880" stop-color="#c4c4c4"/><stop offset="0.955" stop-color="#d9d9d9"/><stop offset="1.000" stop-color="#e6e6e6"/></linearGradient><linearGradient id="rf81" x1="0" y1="0" x2="0" y2="1"><stop offset="0.000" stop-color="#4d4d4d"/><stop offset="0.061" stop-color="#727272"/><stop offset="0.136" stop-color="#797979"/><stop offset="0.212" stop-color="#888888"/><stop offset="0.288" stop-color="#8d8d8d"/><stop offset="0.364" stop-color="#939393"/><stop offset="0.439" stop-color="#9a9a9a"/><stop offset="0.515" stop-color="#afafaf"/><stop offset="0.591" stop-color="#b5b5b5"/><stop offset="0.667" stop-color="#cecece"/><stop offset="0.742" stop-color="#d4d4d4"/><stop offset="0.818" stop-color="#d4d4d4"/><stop offset="0.894" stop-color="#d0d0d0"/><stop offset="0.970" stop-color="#e1e1e1"/><stop offset="1.000" stop-color="#eaeaea"/></linearGradient><linearGradient id="rf82" x1="0" y1="0" x2="0" y2="1"><stop offset="0.000" stop-color="#4c4c4c"/><stop offset="0.065" stop-color="#6f6f6f"/><stop offset="0.145" stop-color="#828282"/><stop offset="0.226" stop-color="#8a8a8a"/><stop offset="0.306" stop-color="#949494"/><stop offset="0.387" stop-color="#989898"/><stop offset="0.468" stop-color="#a2a2a2"/><stop offset="0.548" stop-color="#b4b4b4"/><stop offset="0.629" stop-color="#c4c4c4"/><stop offset="0.710" stop-color="#cdcdcd"/><stop offset="0.790" stop-color="#d1d1d1"/><stop offset="0.871" stop-color="#d9d9d9"/><stop offset="0.952" stop-color="#e4e4e4"/><stop offset="1.000" stop-color="#e9e9e9"/></linearGradient><linearGradient id="rf83" x1="0" y1="0" x2="0" y2="1"><stop offset="0.000" stop-color="#525252"/><stop offset="0.060" stop-color="#686868"/><stop offset="0.134" stop-color="#767676"/><stop offset="0.209" stop-color="#898989"/><stop offset="0.284" stop-color="#8f8f8f"/><stop offset="0.358" stop-color="#9b9b9b"/><stop offset="0.433" stop-color="#9d9d9d"/><stop offset="0.507" stop-color="#a8a8a8"/><stop offset="0.582" stop-color="#bdbdbd"/><stop offset="0.657" stop-color="#c9c9c9"/><stop offset="0.731" stop-color="#d6d6d6"/><stop offset="0.806" stop-color="#d8d8d8"/><stop offset="0.881" stop-color="#dddddd"/><stop offset="0.955" stop-color="#f0f0f0"/><stop offset="1.000" stop-color="#fafafa"/></linearGradient><linearGradient id="rf84" x1="0" y1="0" x2="0" y2="1"><stop offset="0.000" stop-color="#424242"/><stop offset="0.065" stop-color="#676767"/><stop offset="0.145" stop-color="#767676"/><stop offset="0.226" stop-color="#7c7c7c"/><stop offset="0.306" stop-color="#8a8a8a"/><stop offset="0.387" stop-color="#909090"/><stop offset="0.468" stop-color="#999999"/><stop offset="0.548" stop-color="#aaaaaa"/><stop offset="0.629" stop-color="#bbbbbb"/><stop offset="0.710" stop-color="#c9c9c9"/><stop offset="0.790" stop-color="#d4d4d4"/><stop offset="0.871" stop-color="#d4d4d4"/><stop offset="0.952" stop-color="#dfdfdf"/><stop offset="1.000" stop-color="#e9e9e9"/></linearGradient><linearGradient id="rf85" x1="0" y1="0" x2="0" y2="1"><stop offset="0.000" stop-color="#525252"/><stop offset="0.061" stop-color="#6d6d6d"/><stop offset="0.136" stop-color="#797979"/><stop offset="0.212" stop-color="#7f7f7f"/><stop offset="0.288" stop-color="#8f8f8f"/><stop offset="0.364" stop-color="#959595"/><stop offset="0.439" stop-color="#9c9c9c"/><stop offset="0.515" stop-color="#afafaf"/><stop offset="0.591" stop-color="#b9b9b9"/><stop offset="0.667" stop-color="#c4c4c4"/><stop offset="0.742" stop-color="#d4d4d4"/><stop offset="0.818" stop-color="#d8d8d8"/><stop offset="0.894" stop-color="#e4e4e4"/><stop offset="0.970" stop-color="#eaeaea"/><stop offset="1.000" stop-color="#ececec"/></linearGradient><linearGradient id="rf86" x1="0" y1="0" x2="0" y2="1"><stop offset="0.000" stop-color="#515151"/><stop offset="0.056" stop-color="#5d5d5d"/><stop offset="0.127" stop-color="#6a6a6a"/><stop offset="0.197" stop-color="#717171"/><stop offset="0.268" stop-color="#797979"/><stop offset="0.338" stop-color="#848484"/><stop offset="0.408" stop-color="#919191"/><stop offset="0.479" stop-color="#9c9c9c"/><stop offset="0.549" stop-color="#aaaaaa"/><stop offset="0.620" stop-color="#b2b2b2"/><stop offset="0.690" stop-color="#c0c0c0"/><stop offset="0.761" stop-color="#cccccc"/><stop offset="0.831" stop-color="#d2d2d2"/><stop offset="0.901" stop-color="#dadada"/><stop offset="0.972" stop-color="#e6e6e6"/><stop offset="1.000" stop-color="#e5e5e5"/></linearGradient><linearGradient id="rf87" x1="0" y1="0" x2="0" y2="1"><stop offset="0.000" stop-color="#656565"/><stop offset="0.058" stop-color="#787878"/><stop offset="0.130" stop-color="#797979"/><stop offset="0.203" stop-color="#878787"/><stop offset="0.275" stop-color="#7e7e7e"/><stop offset="0.348" stop-color="#919191"/><stop offset="0.420" stop-color="#a0a0a0"/><stop offset="0.493" stop-color="#bcbcbc"/><stop offset="0.565" stop-color="#b9b9b9"/><stop offset="0.638" stop-color="#c0c0c0"/><stop offset="0.710" stop-color="#c7c7c7"/><stop offset="0.783" stop-color="#d5d5d5"/><stop offset="0.855" stop-color="#dbdbdb"/><stop offset="0.928" stop-color="#f1f1f1"/><stop offset="1.000" stop-color="#efefef"/></linearGradient><linearGradient id="rf88" x1="0" y1="0" x2="0" y2="1"><stop offset="0.000" stop-color="#595959"/><stop offset="0.059" stop-color="#787878"/><stop offset="0.132" stop-color="#737373"/><stop offset="0.206" stop-color="#828282"/><stop offset="0.279" stop-color="#818181"/><stop offset="0.353" stop-color="#949494"/><stop offset="0.426" stop-color="#9e9e9e"/><stop offset="0.500" stop-color="#aeaeae"/><stop offset="0.574" stop-color="#b1b1b1"/><stop offset="0.647" stop-color="#bababa"/><stop offset="0.721" stop-color="#c1c1c1"/><stop offset="0.794" stop-color="#cacaca"/><stop offset="0.868" stop-color="#dfdfdf"/><stop offset="0.941" stop-color="#e4e4e4"/><stop offset="1.000" stop-color="#ececec"/></linearGradient><linearGradient id="rf89" x1="0" y1="0" x2="0" y2="1"><stop offset="0.000" stop-color="#4b4b4b"/><stop offset="0.052" stop-color="#515151"/><stop offset="0.117" stop-color="#5f5f5f"/><stop offset="0.182" stop-color="#707070"/><stop offset="0.247" stop-color="#717171"/><stop offset="0.312" stop-color="#7a7a7a"/><stop offset="0.377" stop-color="#828282"/><stop offset="0.442" stop-color="#8b8b8b"/><stop offset="0.506" stop-color="#9b9b9b"/><stop offset="0.571" stop-color="#a4a4a4"/><stop offset="0.636" stop-color="#a7a7a7"/><stop offset="0.701" stop-color="#b3b3b3"/><stop offset="0.766" stop-color="#b6b6b6"/><stop offset="0.831" stop-color="#cacaca"/><stop offset="0.896" stop-color="#d4d4d4"/><stop offset="0.961" stop-color="#d7d7d7"/><stop offset="1.000" stop-color="#e3e3e3"/></linearGradient><linearGradient id="rf90" x1="0" y1="0" x2="0" y2="1"><stop offset="0.000" stop-color="#575757"/><stop offset="0.047" stop-color="#545454"/><stop offset="0.106" stop-color="#535353"/><stop offset="0.165" stop-color="#5d5d5d"/><stop offset="0.224" stop-color="#6f6f6f"/><stop offset="0.282" stop-color="#6e6e6e"/><stop offset="0.341" stop-color="#7a7a7a"/><stop offset="0.400" stop-color="#797979"/><stop offset="0.459" stop-color="#929292"/><stop offset="0.518" stop-color="#959595"/><stop offset="0.576" stop-color="#a2a2a2"/><stop offset="0.635" stop-color="#aaaaaa"/><stop offset="0.694" stop-color="#b4b4b4"/><stop offset="0.753" stop-color="#bababa"/><stop offset="0.812" stop-color="#c6c6c6"/><stop offset="0.871" stop-color="#d1d1d1"/><stop offset="0.929" stop-color="#d6d6d6"/><stop offset="0.988" stop-color="#dddddd"/><stop offset="1.000" stop-color="#e1e1e1"/></linearGradient><linearGradient id="rf91" x1="0" y1="0" x2="0" y2="1"><stop offset="0.000" stop-color="#5b5b5b"/><stop offset="0.035" stop-color="#626262"/><stop offset="0.092" stop-color="#5b5b5b"/><stop offset="0.149" stop-color="#585858"/><stop offset="0.205" stop-color="#606060"/><stop offset="0.262" stop-color="#707070"/><stop offset="0.319" stop-color="#737373"/><stop offset="0.376" stop-color="#777777"/><stop offset="0.432" stop-color="#808080"/><stop offset="0.489" stop-color="#8f8f8f"/><stop offset="0.546" stop-color="#999999"/><stop offset="0.603" stop-color="#a6a6a6"/><stop offset="0.659" stop-color="#a1a1a1"/><stop offset="0.716" stop-color="#b7b7b7"/><stop offset="0.773" stop-color="#bcbcbc"/><stop offset="0.830" stop-color="#cbcbcb"/><stop offset="0.886" stop-color="#cdcdcd"/><stop offset="0.943" stop-color="#d3d3d3"/><stop offset="1.000" stop-color="#e3e3e3"/></linearGradient><linearGradient id="rf92" x1="0" y1="0" x2="0" y2="1"><stop offset="0.000" stop-color="#585858"/><stop offset="0.038" stop-color="#585858"/><stop offset="0.097" stop-color="#575757"/><stop offset="0.155" stop-color="#626262"/><stop offset="0.214" stop-color="#656565"/><stop offset="0.273" stop-color="#686868"/><stop offset="0.331" stop-color="#737373"/><stop offset="0.390" stop-color="#848484"/><stop offset="0.449" stop-color="#949494"/><stop offset="0.507" stop-color="#9a9a9a"/><stop offset="0.566" stop-color="#999999"/><stop offset="0.625" stop-color="#a2a2a2"/><stop offset="0.683" stop-color="#b0b0b0"/><stop offset="0.742" stop-color="#bfbfbf"/><stop offset="0.801" stop-color="#c1c1c1"/><stop offset="0.859" stop-color="#cacaca"/><stop offset="0.918" stop-color="#d7d7d7"/><stop offset="0.977" stop-color="#d9d9d9"/><stop offset="1.000" stop-color="#d6d6d6"/></linearGradient><linearGradient id="rf93" x1="0" y1="0" x2="0" y2="1"><stop offset="0.000" stop-color="#5b5b5b"/><stop offset="0.038" stop-color="#5f5f5f"/><stop offset="0.095" stop-color="#5d5d5d"/><stop offset="0.152" stop-color="#626262"/><stop offset="0.208" stop-color="#626262"/><stop offset="0.265" stop-color="#696969"/><stop offset="0.321" stop-color="#717171"/><stop offset="0.378" stop-color="#838383"/><stop offset="0.434" stop-color="#919191"/><stop offset="0.491" stop-color="#979797"/><stop offset="0.548" stop-color="#a2a2a2"/><stop offset="0.604" stop-color="#a2a2a2"/><stop offset="0.661" stop-color="#adadad"/><stop offset="0.717" stop-color="#b9b9b9"/><stop offset="0.774" stop-color="#c0c0c0"/><stop offset="0.830" stop-color="#c8c8c8"/><stop offset="0.887" stop-color="#cacaca"/><stop offset="0.943" stop-color="#dbdbdb"/><stop offset="1.000" stop-color="#dcdcdc"/></linearGradient><linearGradient id="rf94" x1="0" y1="0" x2="0" y2="1"><stop offset="0.000" stop-color="#5b5b5b"/><stop offset="0.043" stop-color="#656565"/><stop offset="0.103" stop-color="#606060"/><stop offset="0.163" stop-color="#5a5a5a"/><stop offset="0.222" stop-color="#6a6a6a"/><stop offset="0.282" stop-color="#6e6e6e"/><stop offset="0.342" stop-color="#7a7a7a"/><stop offset="0.402" stop-color="#8f8f8f"/><stop offset="0.462" stop-color="#9d9d9d"/><stop offset="0.522" stop-color="#929292"/><stop offset="0.581" stop-color="#979797"/><stop offset="0.641" stop-color="#aeaeae"/><stop offset="0.701" stop-color="#bbbbbb"/><stop offset="0.761" stop-color="#c3c3c3"/><stop offset="0.821" stop-color="#c1c1c1"/><stop offset="0.880" stop-color="#d0d0d0"/><stop offset="0.940" stop-color="#dddddd"/><stop offset="1.000" stop-color="#e4e4e4"/></linearGradient><linearGradient id="rf95" x1="0" y1="0" x2="0" y2="1"><stop offset="0.000" stop-color="#646464"/><stop offset="0.043" stop-color="#5f5f5f"/><stop offset="0.101" stop-color="#5e5e5e"/><stop offset="0.159" stop-color="#626262"/><stop offset="0.216" stop-color="#666666"/><stop offset="0.274" stop-color="#717171"/><stop offset="0.331" stop-color="#777777"/><stop offset="0.389" stop-color="#818181"/><stop offset="0.447" stop-color="#848484"/><stop offset="0.504" stop-color="#9a9a9a"/><stop offset="0.562" stop-color="#9d9d9d"/><stop offset="0.620" stop-color="#a5a5a5"/><stop offset="0.677" stop-color="#b3b3b3"/><stop offset="0.735" stop-color="#c3c3c3"/><stop offset="0.793" stop-color="#cecece"/><stop offset="0.850" stop-color="#d4d4d4"/><stop offset="0.908" stop-color="#dadada"/><stop offset="0.965" stop-color="#e2e2e2"/><stop offset="1.000" stop-color="#e8e8e8"/></linearGradient><linearGradient id="rf96" x1="0" y1="0" x2="0" y2="1"><stop offset="0.000" stop-color="#666666"/><stop offset="0.044" stop-color="#666666"/><stop offset="0.101" stop-color="#6f6f6f"/><stop offset="0.158" stop-color="#717171"/><stop offset="0.215" stop-color="#747474"/><stop offset="0.272" stop-color="#707070"/><stop offset="0.329" stop-color="#7f7f7f"/><stop offset="0.386" stop-color="#818181"/><stop offset="0.443" stop-color="#828282"/><stop offset="0.499" stop-color="#959595"/><stop offset="0.556" stop-color="#9c9c9c"/><stop offset="0.613" stop-color="#a8a8a8"/><stop offset="0.670" stop-color="#c2c2c2"/><stop offset="0.727" stop-color="#cecece"/><stop offset="0.784" stop-color="#d7d7d7"/><stop offset="0.841" stop-color="#d8d8d8"/><stop offset="0.898" stop-color="#e3e3e3"/><stop offset="0.954" stop-color="#e9e9e9"/><stop offset="1.000" stop-color="#f5f5f5"/></linearGradient><linearGradient id="rf97" x1="0" y1="0" x2="0" y2="1"><stop offset="0.000" stop-color="#5e5e5e"/><stop offset="0.047" stop-color="#696969"/><stop offset="0.106" stop-color="#6b6b6b"/><stop offset="0.165" stop-color="#737373"/><stop offset="0.224" stop-color="#666666"/><stop offset="0.282" stop-color="#7a7a7a"/><stop offset="0.341" stop-color="#737373"/><stop offset="0.400" stop-color="#797979"/><stop offset="0.459" stop-color="#898989"/><stop offset="0.518" stop-color="#929292"/><stop offset="0.576" stop-color="#9b9b9b"/><stop offset="0.635" stop-color="#aeaeae"/><stop offset="0.694" stop-color="#c1c1c1"/><stop offset="0.753" stop-color="#c6c6c6"/><stop offset="0.812" stop-color="#cfcfcf"/><stop offset="0.871" stop-color="#d8d8d8"/><stop offset="0.929" stop-color="#e2e2e2"/><stop offset="0.988" stop-color="#ebebeb"/><stop offset="1.000" stop-color="#efefef"/></linearGradient><linearGradient id="rf98" x1="0" y1="0" x2="0" y2="1"><stop offset="0.000" stop-color="#606060"/><stop offset="0.040" stop-color="#676767"/><stop offset="0.100" stop-color="#6a6a6a"/><stop offset="0.160" stop-color="#757575"/><stop offset="0.220" stop-color="#666666"/><stop offset="0.280" stop-color="#7c7c7c"/><stop offset="0.340" stop-color="#747474"/><stop offset="0.400" stop-color="#747474"/><stop offset="0.460" stop-color="#8d8d8d"/><stop offset="0.520" stop-color="#919191"/><stop offset="0.580" stop-color="#a1a1a1"/><stop offset="0.640" stop-color="#a9a9a9"/><stop offset="0.700" stop-color="#c0c0c0"/><stop offset="0.760" stop-color="#cacaca"/><stop offset="0.820" stop-color="#d4d4d4"/><stop offset="0.880" stop-color="#dedede"/><stop offset="0.940" stop-color="#dddddd"/><stop offset="1.000" stop-color="#f2f2f2"/></linearGradient><linearGradient id="rf99" x1="0" y1="0" x2="0" y2="1"><stop offset="0.000" stop-color="#505050"/><stop offset="0.046" stop-color="#555555"/><stop offset="0.103" stop-color="#5c5c5c"/><stop offset="0.161" stop-color="#5d5d5d"/><stop offset="0.218" stop-color="#626262"/><stop offset="0.276" stop-color="#676767"/><stop offset="0.333" stop-color="#686868"/><stop offset="0.391" stop-color="#666666"/><stop offset="0.448" stop-color="#767676"/><stop offset="0.506" stop-color="#838383"/><stop offset="0.563" stop-color="#898989"/><stop offset="0.621" stop-color="#8f8f8f"/><stop offset="0.678" stop-color="#a0a0a0"/><stop offset="0.736" stop-color="#b3b3b3"/><stop offset="0.793" stop-color="#bfbfbf"/><stop offset="0.851" stop-color="#cbcbcb"/><stop offset="0.908" stop-color="#d6d6d6"/><stop offset="0.966" stop-color="#dadada"/><stop offset="1.000" stop-color="#e9e9e9"/></linearGradient><linearGradient id="rf100" x1="0" y1="0" x2="0" y2="1"><stop offset="0.000" stop-color="#555555"/><stop offset="0.039" stop-color="#5c5c5c"/><stop offset="0.096" stop-color="#686868"/><stop offset="0.153" stop-color="#666666"/><stop offset="0.211" stop-color="#666666"/><stop offset="0.268" stop-color="#737373"/><stop offset="0.325" stop-color="#707070"/><stop offset="0.382" stop-color="#767676"/><stop offset="0.439" stop-color="#7e7e7e"/><stop offset="0.497" stop-color="#8c8c8c"/><stop offset="0.554" stop-color="#979797"/><stop offset="0.611" stop-color="#a4a4a4"/><stop offset="0.668" stop-color="#b0b0b0"/><stop offset="0.725" stop-color="#c4c4c4"/><stop offset="0.783" stop-color="#cecece"/><stop offset="0.840" stop-color="#dbdbdb"/><stop offset="0.897" stop-color="#e1e1e1"/><stop offset="0.954" stop-color="#e2e2e2"/><stop offset="1.000" stop-color="#ededed"/></linearGradient></defs><rect x="45" y="96.0" width="4" height="79.0" fill="url(#rf0)"/><rect x="49" y="91.0" width="3" height="84.0" fill="url(#rf1)"/><rect x="52" y="91.0" width="3" height="84.0" fill="url(#rf2)"/><rect x="55" y="92.0" width="2" height="83.0" fill="url(#rf3)"/><rect x="57" y="93.0" width="3" height="82.0" fill="url(#rf4)"/><rect x="60" y="96.0" width="4" height="79.0" fill="url(#rf5)"/><rect x="64" y="95.0" width="3" height="80.0" fill="url(#rf6)"/><rect x="67" y="91.0" width="3" height="84.0" fill="url(#rf7)"/><rect x="70" y="93.0" width="3" height="82.0" fill="url(#rf8)"/><rect x="73" y="93.0" width="2" height="82.0" fill="url(#rf9)"/><rect x="75" y="92.0" width="4" height="83.0" fill="url(#rf10)"/><rect x="79" y="84.0" width="3" height="91.0" fill="url(#rf11)"/><rect x="82" y="80.2" width="3" height="94.8" fill="url(#rf12)"/><rect x="85" y="81.5" width="2" height="93.5" fill="url(#rf13)"/><rect x="87" y="83.0" width="3" height="92.0" fill="url(#rf14)"/><rect x="90" y="80.9" width="2" height="94.1" fill="url(#rf15)"/><rect x="92" y="79.8" width="3" height="95.2" fill="url(#rf16)"/><rect x="95" y="81.8" width="4" height="93.2" fill="url(#rf17)"/><rect x="99" y="80.6" width="4" height="94.4" fill="url(#rf18)"/><rect x="103" y="79.5" width="3" height="95.5" fill="url(#rf19)"/><rect x="106" y="78.4" width="3" height="96.6" fill="url(#rf20)"/><rect x="109" y="81.3" width="3" height="93.7" fill="url(#rf21)"/><rect x="112" y="83.2" width="3" height="91.8" fill="url(#rf22)"/><rect x="115" y="79.1" width="3" height="95.9" fill="url(#rf23)"/><rect x="118" y="78.0" width="4" height="97.0" fill="url(#rf24)"/><rect x="122" y="81.7" width="3" height="93.3" fill="url(#rf25)"/><rect x="125" y="79.5" width="4" height="95.5" fill="url(#rf26)"/><rect x="129" y="77.1" width="2" height="97.9" fill="url(#rf27)"/><rect x="131" y="82.0" width="2" height="93.0" fill="url(#rf28)"/><rect x="133" y="77.8" width="3" height="97.2" fill="url(#rf29)"/><rect x="136" y="78.5" width="3" height="96.5" fill="url(#rf30)"/><rect x="139" y="80.3" width="3" height="94.7" fill="url(#rf31)"/><rect x="142" y="78.0" width="3" height="97.0" fill="url(#rf32)"/><rect x="145" y="80.8" width="2" height="94.2" fill="url(#rf33)"/><rect x="147" y="80.6" width="3" height="94.4" fill="url(#rf34)"/><rect x="150" y="78.3" width="4" height="96.7" fill="url(#rf35)"/><rect x="154" y="78.0" width="3" height="97.0" fill="url(#rf36)"/><rect x="157" y="77.4" width="3" height="97.6" fill="url(#rf37)"/><rect x="160" y="79.8" width="2" height="95.2" fill="url(#rf38)"/><rect x="162" y="77.0" width="3" height="98.0" fill="url(#rf39)"/><rect x="165" y="81.4" width="3" height="93.6" fill="url(#rf40)"/><rect x="168" y="76.8" width="2" height="98.2" fill="url(#rf41)"/><rect x="170" y="78.0" width="3" height="97.0" fill="url(#rf42)"/><rect x="173" y="80.4" width="2" height="94.6" fill="url(#rf43)"/><rect x="175" y="81.6" width="2" height="93.4" fill="url(#rf44)"/><rect x="177" y="79.9" width="3" height="95.1" fill="url(#rf45)"/><rect x="180" y="83.2" width="3" height="91.8" fill="url(#rf46)"/><rect x="183" y="80.6" width="3" height="94.4" fill="url(#rf47)"/><rect x="186" y="83.0" width="2" height="92.0" fill="url(#rf48)"/><rect x="188" y="80.2" width="3" height="94.8" fill="url(#rf49)"/><rect x="191" y="81.6" width="3" height="93.4" fill="url(#rf50)"/><rect x="194" y="80.0" width="2" height="95.0" fill="url(#rf51)"/><rect x="196" y="82.1" width="2" height="92.9" fill="url(#rf52)"/><rect x="198" y="83.3" width="3" height="91.7" fill="url(#rf53)"/><rect x="201" y="81.5" width="3" height="93.5" fill="url(#rf54)"/><rect x="204" y="82.7" width="2" height="92.3" fill="url(#rf55)"/><rect x="206" y="80.8" width="3" height="94.2" fill="url(#rf56)"/><rect x="209" y="83.0" width="2" height="92.0" fill="url(#rf57)"/><rect x="211" y="86.2" width="2" height="88.8" fill="url(#rf58)"/><rect x="213" y="82.3" width="3" height="92.7" fill="url(#rf59)"/><rect x="216" y="82.5" width="4" height="92.5" fill="url(#rf60)"/><rect x="220" y="81.8" width="4" height="93.2" fill="url(#rf61)"/><rect x="224" y="82.5" width="3" height="92.5" fill="url(#rf62)"/><rect x="227" y="86.0" width="4" height="89.0" fill="url(#rf63)"/><rect x="231" y="87.0" width="4" height="88.0" fill="url(#rf64)"/><rect x="235" y="87.0" width="3" height="88.0" fill="url(#rf65)"/><rect x="238" y="88.0" width="3" height="87.0" fill="url(#rf66)"/><rect x="241" y="87.0" width="3" height="88.0" fill="url(#rf67)"/><rect x="244" y="87.0" width="3" height="88.0" fill="url(#rf68)"/><rect x="247" y="81.0" width="3" height="94.0" fill="url(#rf69)"/><rect x="250" y="80.0" width="3" height="95.0" fill="url(#rf70)"/><rect x="253" y="78.0" width="3" height="97.0" fill="url(#rf71)"/><rect x="256" y="76.0" width="3" height="99.0" fill="url(#rf72)"/><rect x="259" y="78.0" width="3" height="97.0" fill="url(#rf73)"/><rect x="262" y="79.5" width="3" height="95.5" fill="url(#rf74)"/><rect x="265" y="89.0" width="3" height="86.0" fill="url(#rf75)"/><rect x="268" y="92.6" width="3" height="82.4" fill="url(#rf76)"/><rect x="271" y="94.4" width="4" height="80.6" fill="url(#rf77)"/><rect x="275" y="102.5" width="3" height="72.5" fill="url(#rf78)"/><rect x="278" y="102.8" width="2" height="72.2" fill="url(#rf79)"/><rect x="280" y="108.5" width="4" height="66.5" fill="url(#rf80)"/><rect x="284" y="109.0" width="4" height="66.0" fill="url(#rf81)"/><rect x="288" y="113.0" width="3" height="62.0" fill="url(#rf82)"/><rect x="291" y="108.0" width="3" height="67.0" fill="url(#rf83)"/><rect x="294" y="113.0" width="4" height="62.0" fill="url(#rf84)"/><rect x="298" y="109.0" width="4" height="66.0" fill="url(#rf85)"/><rect x="302" y="104.0" width="3" height="71.0" fill="url(#rf86)"/><rect x="305" y="106.0" width="4" height="69.0" fill="url(#rf87)"/><rect x="309" y="107.0" width="2" height="68.0" fill="url(#rf88)"/><rect x="311" y="98.0" width="3" height="77.0" fill="url(#rf89)"/><rect x="314" y="90.0" width="2" height="85.0" fill="url(#rf90)"/><rect x="316" y="86.9" width="3" height="88.1" fill="url(#rf91)"/><rect x="319" y="89.8" width="3" height="85.2" fill="url(#rf92)"/><rect x="322" y="86.6" width="4" height="88.4" fill="url(#rf93)"/><rect x="326" y="91.4" width="3" height="83.6" fill="url(#rf94)"/><rect x="329" y="88.2" width="3" height="86.8" fill="url(#rf95)"/><rect x="332" y="87.1" width="3" height="87.9" fill="url(#rf96)"/><rect x="335" y="90.0" width="2" height="85.0" fill="url(#rf97)"/><rect x="337" y="91.7" width="2" height="83.3" fill="url(#rf98)"/><rect x="339" y="88.0" width="3" height="87.0" fill="url(#rf99)"/><rect x="342" y="87.6" width="4" height="87.4" fill="url(#rf100)"/><rect x="76" y="86" width="12" height="7" fill="#000"/><rect x="304" y="93" width="2" height="2" fill="#656565"/><rect x="283" y="96" width="4" height="5" fill="#484848"/><rect x="297" y="101" width="2" height="3" fill="#3d3d3d"/><rect x="309" y="90" width="2" height="5" fill="#6e6e6e"/><rect x="292" y="93" width="2" height="2" fill="#585858"/><rect x="288" y="96" width="2" height="2" fill="#404040"/><rect x="305" y="101" width="3" height="5" fill="#5f5f5f"/><rect x="282" y="104" width="4" height="5" fill="#474747"/><rect x="290" y="88" width="4" height="3" fill="#656565"/><rect x="309" y="92" width="4" height="5" fill="#6d6d6d"/><rect x="291" y="98" width="3" height="5" fill="#6b6b6b"/><rect x="296" y="91" width="3" height="3" fill="#616161"/><rect x="303" y="94" width="2" height="2" fill="#555555"/><rect x="281" y="94" width="3" height="2" fill="#494949"/><rect x="295" y="98" width="3" height="2" fill="#5d5d5d"/><rect x="305" y="100" width="2" height="3" fill="#575757"/><rect x="281" y="97" width="3" height="3" fill="#595959"/><rect x="282" y="97" width="2" height="5" fill="#3c3c3c"/><rect x="283" y="106" width="2" height="3" fill="#6d6d6d"/><rect x="283" y="105" width="2" height="3" fill="#464646"/><rect x="305" y="90" width="2" height="2" fill="#3f3f3f"/><rect x="306" y="101" width="3" height="5" fill="#606060"/><rect x="298" y="97" width="3" height="5" fill="#666666"/><rect x="283" y="100" width="3" height="5" fill="#4a4a4a"/><rect x="294" y="90" width="4" height="3" fill="#404040"/><rect x="281" y="89" width="2" height="5" fill="#686868"/><rect x="295" y="101" width="3" height="2" fill="#414141"/><rect x="296" y="84" width="3" height="14" fill="#606060"/><rect x="44.5" y="110.1" width="4" height="1.5" fill="#c83030"/><rect x="47.6" y="105.5" width="4" height="1.5" fill="#c83030"/><rect x="49.6" y="110.5" width="4" height="1.5" fill="#c83030"/><rect x="52.7" y="104.3" width="4" height="1.5" fill="#c83030"/><rect x="55.9" y="102.4" width="4" height="1.5" fill="#c83030"/><rect x="59.3" y="101.8" width="4" height="1.5" fill="#c83030"/><rect x="62.7" y="105.1" width="4" height="1.5" fill="#c83030"/><rect x="64.7" y="110.1" width="4" height="1.5" fill="#c83030"/><rect x="67.6" y="108.6" width="4" height="1.5" fill="#c83030"/><rect x="69.9" y="103.8" width="4" height="1.5" fill="#c83030"/><rect x="71.9" y="110.8" width="4" height="1.5" fill="#c83030"/><rect x="74.7" y="102.0" width="4" height="1.5" fill="#c83030"/><rect x="76.4" y="107.1" width="4" height="1.5" fill="#c83030"/><rect x="80.8" y="103.3" width="4" height="1.5" fill="#c83030"/><rect x="82.8" y="108.3" width="4" height="1.5" fill="#c83030"/><rect x="85.5" y="105.7" width="4" height="1.5" fill="#c83030"/><rect x="87.5" y="110.6" width="4" height="1.5" fill="#c83030"/><rect x="89.5" y="105.6" width="4" height="1.5" fill="#c83030"/><rect x="91.1" y="110.5" width="4" height="1.5" fill="#c83030"/><rect x="96.2" y="110.9" width="4" height="1.5" fill="#c83030"/><rect x="98.2" y="105.9" width="4" height="1.5" fill="#c83030"/><rect x="99.8" y="104.9" width="4" height="1.5" fill="#c83030"/><rect x="101.8" y="99.9" width="4" height="1.5" fill="#c83030"/><rect x="103.1" y="110.1" width="4" height="1.5" fill="#c83030"/><rect x="105.1" y="105.1" width="4" height="1.5" fill="#c83030"/><rect x="106.4" y="106.1" width="4" height="1.5" fill="#c83030"/><rect x="109.9" y="109.5" width="4" height="1.5" fill="#c83030"/><rect x="111.9" y="116.5" width="4" height="1.5" fill="#c83030"/><rect x="112.8" y="102.8" width="4" height="1.5" fill="#c83030"/><rect x="117.9" y="111.0" width="4" height="1.5" fill="#c83030"/><rect x="119.9" y="116.0" width="4" height="1.5" fill="#c83030"/><rect x="120.9" y="101.6" width="4" height="1.5" fill="#c83030"/><rect x="125.1" y="107.7" width="4" height="1.5" fill="#c83030"/><rect x="127.8" y="101.4" width="4" height="1.5" fill="#c83030"/><rect x="132.4" y="101.9" width="4" height="1.5" fill="#c83030"/><rect x="135.1" y="105.3" width="4" height="1.5" fill="#c83030"/><rect x="137.1" y="112.3" width="4" height="1.5" fill="#c83030"/><rect x="139.2" y="101.0" width="4" height="1.5" fill="#c83030"/><rect x="141.2" y="106.0" width="4" height="1.5" fill="#c83030"/><rect x="142.4" y="101.9" width="4" height="1.5" fill="#c83030"/><rect x="144.4" y="96.9" width="4" height="1.5" fill="#c83030"/><rect x="145.1" y="101.7" width="4" height="1.5" fill="#c83030"/><rect x="149.5" y="110.9" width="4" height="1.5" fill="#c83030"/><rect x="152.6" y="105.3" width="4" height="1.5" fill="#c83030"/><rect x="156.8" y="108.1" width="4" height="1.5" fill="#c83030"/><rect x="158.8" y="113.1" width="4" height="1.5" fill="#c83030"/><rect x="161.1" y="107.5" width="4" height="1.5" fill="#c83030"/><rect x="164.5" y="110.3" width="4" height="1.5" fill="#c83030"/><rect x="168.4" y="106.5" width="4" height="1.5" fill="#c83030"/><rect x="170.6" y="110.2" width="4" height="1.5" fill="#c83030"/><rect x="172.6" y="115.2" width="4" height="1.5" fill="#c83030"/><rect x="174.2" y="102.3" width="4" height="1.5" fill="#c83030"/><rect x="176.2" y="107.3" width="4" height="1.5" fill="#c83030"/><rect x="178.3" y="108.5" width="4" height="1.5" fill="#c83030"/><rect x="182.1" y="110.0" width="4" height="1.5" fill="#c83030"/><rect x="184.1" y="115.0" width="4" height="1.5" fill="#c83030"/><rect x="185.4" y="111.1" width="4" height="1.5" fill="#c83030"/><rect x="187.4" y="116.1" width="4" height="1.5" fill="#c83030"/><rect x="189.0" y="107.1" width="4" height="1.5" fill="#c83030"/><rect x="191.0" y="102.1" width="4" height="1.5" fill="#c83030"/><rect x="192.2" y="107.1" width="4" height="1.5" fill="#c83030"/><rect x="194.2" y="102.1" width="4" height="1.5" fill="#c83030"/><rect x="195.7" y="108.6" width="4" height="1.5" fill="#c83030"/><rect x="197.7" y="115.6" width="4" height="1.5" fill="#c83030"/><rect x="199.8" y="107.7" width="4" height="1.5" fill="#c83030"/><rect x="201.8" y="102.7" width="4" height="1.5" fill="#c83030"/><rect x="203.4" y="107.3" width="4" height="1.5" fill="#c83030"/><rect x="205.4" y="114.3" width="4" height="1.5" fill="#c83030"/><rect x="207.0" y="106.9" width="4" height="1.5" fill="#c83030"/><rect x="211.0" y="108.6" width="4" height="1.5" fill="#c83030"/><rect x="215.0" y="110.5" width="4" height="1.5" fill="#c83030"/><rect x="217.3" y="106.6" width="4" height="1.5" fill="#c83030"/><rect x="219.3" y="111.6" width="4" height="1.5" fill="#c83030"/><rect x="221.0" y="103.1" width="4" height="1.5" fill="#c83030"/><rect x="225.9" y="110.7" width="4" height="1.5" fill="#c83030"/><rect x="228.8" y="108.9" width="4" height="1.5" fill="#c83030"/><rect x="231.3" y="110.3" width="4" height="1.5" fill="#c83030"/><rect x="233.3" y="115.3" width="4" height="1.5" fill="#c83030"/><rect x="236.5" y="105.5" width="4" height="1.5" fill="#c83030"/><rect x="239.9" y="107.0" width="4" height="1.5" fill="#c83030"/><rect x="242.3" y="111.3" width="4" height="1.5" fill="#c83030"/><rect x="244.3" y="116.3" width="4" height="1.5" fill="#c83030"/><rect x="247.1" y="102.1" width="4" height="1.5" fill="#c83030"/><rect x="250.5" y="107.4" width="4" height="1.5" fill="#c83030"/><rect x="252.9" y="104.0" width="4" height="1.5" fill="#c83030"/><rect x="256.9" y="110.6" width="4" height="1.5" fill="#c83030"/><rect x="245" y="114" width="17" height="2" fill="#d03030"/><rect x="45" y="172" width="155" height="1.2" fill="#000"/><rect x="45" y="173" width="211" height="2.5" fill="#6a6a6a"/><path d="M45 174 L60 174.5 L80 173.5 L100 174.5 L140 174 L180 173.5 L200 174.5 L215 175 L235 174 L250 174 L256 173.5" stroke="#3cd23c" stroke-width="1.5" fill="none"/><rect x="45" y="175.5" width="302" height="7.5" fill="#000"/><path d="M39 24.5h6M39 33.5h6M39 45.5h6M39 57.5h6M39 69.5h6M39 81.5h6M39 93.5h6M39 105.5h6M39 117.5h6M39 129.5h6M39 141.5h6M39 153.5h6M39 165.5h6M39 175.5h6" stroke="#000" stroke-width="1" fill="none" shape-rendering="crispEdges"/><path d="M45.5 183v10.5M70.5 183v5.5M95.5 183v10.5M120.5 183v5.5M145.5 183v10.5M171.5 183v5.5M196.5 183v10.5M221.5 183v5.5M246.5 183v10.5M271.5 183v5.5M296.5 183v10.5M321.5 183v5.5M346.5 183v10.5" stroke="#000" stroke-width="1" fill="none" shape-rendering="crispEdges"/><rect x="350" y="21" width="6" height="166" fill="url(#gray)" /><path d="M357 23.5h6M357 33.5h6M357 45.5h6M357 57.5h6M357 69.5h6M357 81.5h6M357 93.5h6M357 105.5h6M357 117.5h6M357 129.5h6M357 141.5h6M357 153.5h6M357 165.5h6M357 174.5h6" stroke="#000" stroke-width="1" fill="none" shape-rendering="crispEdges"/><rect x="45" y="228" width="302" height="63" fill="#000" /><rect x="45" y="231" width="302.0" height="8" fill="#00ff00" /><circle cx="361.6" cy="235.4" r="3.5" fill="#00dd00" stroke="#000" stroke-width="1.1"/><rect x="45" y="245" width="302.0" height="8" fill="#ff0000" /><circle cx="361.6" cy="249.4" r="3.5" fill="#dd0000" stroke="#000" stroke-width="1.1"/><rect x="45" y="259" width="211.09799999999998" height="8" fill="#00ff00" /><rect x="256.09799999999996" y="259" width="90.90200000000002" height="8" fill="#ff0000" /><circle cx="361.6" cy="263.4" r="3.5" fill="#dd0000" stroke="#000" stroke-width="1.1"/><rect x="45" y="273" width="302.0" height="8" fill="#00ff00" /><circle cx="361.6" cy="277.4" r="3.5" fill="#00dd00" stroke="#000" stroke-width="1.1"/><path d="M45.5 291v10.5M70.5 291v5.5M95.5 291v10.5M120.5 291v5.5M145.5 291v10.5M171.5 291v5.5M196.5 291v10.5M221.5 291v5.5M246.5 291v10.5M271.5 291v5.5M296.5 291v10.5M321.5 291v5.5M346.5 291v10.5" stroke="#000" stroke-width="1" fill="none" shape-rendering="crispEdges"/><rect x="45" y="317" width="302" height="162" fill="#000" /><rect x="45.0" y="402" width="2.5" height="29.0" fill="#8c8c8c"/><rect x="45.0" y="431" width="2.5" height="35.5" fill="#c4c4c4"/><rect x="45.0" y="465.5" width="2.5" height="3.0" fill="#0000ff"/><rect x="47.5" y="402" width="2.5" height="31.0" fill="#8c8c8c"/><rect x="47.5" y="433" width="2.5" height="33.5" fill="#c4c4c4"/><rect x="47.5" y="465.5" width="2.5" height="3.0" fill="#0000ff"/><rect x="50.0" y="403" width="2.5" height="40.0" fill="#8c8c8c"/><rect x="50.0" y="443" width="2.5" height="23.5" fill="#c4c4c4"/><rect x="50.0" y="457" width="2.5" height="9.0" fill="#8c8c8c"/><rect x="50.0" y="403" width="2.5" height="12.0" fill="#0000ff"/><rect x="52.5" y="402" width="2.5" height="29.0" fill="#8c8c8c"/><rect x="52.5" y="431" width="2.5" height="35.5" fill="#c4c4c4"/><rect x="55.0" y="406" width="2.5" height="13.0" fill="#8c8c8c"/><rect x="55.0" y="419" width="2.5" height="47.5" fill="#c4c4c4"/><rect x="57.5" y="405" width="2.5" height="61.5" fill="#c4c4c4"/><rect x="60.0" y="404" width="2.5" height="62.5" fill="#c4c4c4"/><rect x="62.5" y="405" width="2.5" height="16.0" fill="#8c8c8c"/><rect x="62.5" y="421" width="2.5" height="45.5" fill="#c4c4c4"/><rect x="62.5" y="405" width="2.5" height="10.0" fill="#0000ff"/><rect x="65.0" y="403" width="2.5" height="27.0" fill="#8c8c8c"/><rect x="65.0" y="430" width="2.5" height="36.5" fill="#c4c4c4"/><rect x="65.0" y="403" width="2.5" height="6.0" fill="#0000ff"/><rect x="67.5" y="406" width="2.5" height="19.0" fill="#8c8c8c"/><rect x="67.5" y="425" width="2.5" height="41.5" fill="#c4c4c4"/><rect x="67.5" y="434" width="2.5" height="6.0" fill="#8c8c8c"/><rect x="70.0" y="405" width="2.5" height="37.0" fill="#8c8c8c"/><rect x="70.0" y="442" width="2.5" height="24.5" fill="#c4c4c4"/><rect x="72.5" y="401" width="2.5" height="32.0" fill="#8c8c8c"/><rect x="72.5" y="433" width="2.5" height="33.5" fill="#c4c4c4"/><rect x="72.5" y="401" width="2.5" height="15.0" fill="#0000ff"/><rect x="75.0" y="402" width="2.5" height="29.0" fill="#8c8c8c"/><rect x="75.0" y="431" width="2.5" height="35.5" fill="#c4c4c4"/><rect x="75.0" y="448" width="2.5" height="9.0" fill="#8c8c8c"/><rect x="75.0" y="402" width="2.5" height="20.0" fill="#0000ff"/><rect x="80.0" y="410" width="2.5" height="25.0" fill="#0000ff"/><rect x="80.0" y="435" width="2.5" height="33.0" fill="#8c8c8c"/><rect x="80.0" y="466" width="2.5" height="3.5" fill="#0000ff"/><rect x="82.5" y="398" width="2.5" height="67.0" fill="#0000ff"/><rect x="82.5" y="465" width="2.5" height="3.0" fill="#8c8c8c"/><rect x="82.5" y="466" width="2.5" height="3.5" fill="#30d0d0"/><rect x="85.0" y="408" width="2.5" height="51.0" fill="#8c8c8c"/><rect x="85.0" y="459" width="2.5" height="9.0" fill="#c4c4c4"/><rect x="85.0" y="466" width="2.5" height="3.5" fill="#8c8c8c"/><rect x="87.5" y="408" width="2.5" height="33.0" fill="#8c8c8c"/><rect x="87.5" y="441" width="2.5" height="27.0" fill="#0000ff"/><rect x="87.5" y="466" width="2.5" height="3.5" fill="#c4c4c4"/><rect x="90.0" y="404" width="2.5" height="30.0" fill="#0000ff"/><rect x="90.0" y="434" width="2.5" height="34.0" fill="#8c8c8c"/><rect x="90.0" y="466" width="2.5" height="3.5" fill="#0000ff"/><rect x="92.5" y="408" width="2.5" height="24.0" fill="#0000ff"/><rect x="92.5" y="432" width="2.5" height="36.0" fill="#8c8c8c"/><rect x="92.5" y="466" width="2.5" height="3.5" fill="#0000ff"/><rect x="95.0" y="402" width="2.5" height="66.0" fill="#8888ee"/><rect x="95.0" y="466" width="2.5" height="3.5" fill="#30d0d0"/><rect x="97.5" y="398" width="2.5" height="53.0" fill="#8c8c8c"/><rect x="97.5" y="451" width="2.5" height="17.0" fill="#0000ff"/><rect x="97.5" y="466" width="2.5" height="3.5" fill="#8c8c8c"/><rect x="100.0" y="404" width="2.5" height="30.0" fill="#0000ff"/><rect x="100.0" y="434" width="2.5" height="34.0" fill="#c4c4c4"/><rect x="100.0" y="466" width="2.5" height="3.5" fill="#0000ff"/><rect x="102.5" y="396" width="2.5" height="50.0" fill="#0000ff"/><rect x="102.5" y="446" width="2.5" height="22.0" fill="#0000ff"/><rect x="102.5" y="466" width="2.5" height="3.5" fill="#0000ff"/><rect x="105.0" y="410" width="2.5" height="41.0" fill="#0000ff"/><rect x="105.0" y="451" width="2.5" height="17.0" fill="#8c8c8c"/><rect x="105.0" y="466" width="2.5" height="3.5" fill="#8c8c8c"/><rect x="107.5" y="396" width="2.5" height="67.0" fill="#0000ff"/><rect x="107.5" y="463" width="2.5" height="5.0" fill="#c4c4c4"/><rect x="107.5" y="466" width="2.5" height="3.5" fill="#0000ff"/><rect x="110.0" y="404" width="2.5" height="25.0" fill="#8c8c8c"/><rect x="110.0" y="429" width="2.5" height="39.0" fill="#0000ff"/><rect x="110.0" y="466" width="2.5" height="3.5" fill="#0000ff"/><rect x="112.5" y="396" width="2.5" height="43.0" fill="#8c8c8c"/><rect x="112.5" y="439" width="2.5" height="15.0" fill="#c4c4c4"/><rect x="112.5" y="454" width="2.5" height="14.0" fill="#8c8c8c"/><rect x="112.5" y="466" width="2.5" height="3.5" fill="#c4c4c4"/><rect x="115.0" y="402" width="2.5" height="7.0" fill="#00ff00"/><rect x="115.0" y="409" width="2.5" height="56.0" fill="#8c8c8c"/><rect x="115.0" y="465" width="2.5" height="3.0" fill="#c4c4c4"/><rect x="115.0" y="466" width="2.5" height="3.5" fill="#c4c4c4"/><rect x="117.5" y="404" width="2.5" height="32.0" fill="#8c8c8c"/><rect x="117.5" y="436" width="2.5" height="32.0" fill="#8c8c8c"/><rect x="117.5" y="466" width="2.5" height="3.5" fill="#8c8c8c"/><rect x="120.0" y="402" width="2.5" height="5.0" fill="#00ff00"/><rect x="120.0" y="407" width="2.5" height="51.0" fill="#0000ff"/><rect x="120.0" y="458" width="2.5" height="10.0" fill="#8c8c8c"/><rect x="120.0" y="466" width="2.5" height="3.5" fill="#0000ff"/><rect x="122.5" y="400" width="2.5" height="54.0" fill="#8c8c8c"/><rect x="122.5" y="454" width="2.5" height="14.0" fill="#0000ff"/><rect x="122.5" y="466" width="2.5" height="3.5" fill="#0000ff"/><rect x="125.0" y="404" width="2.5" height="40.0" fill="#8c8c8c"/><rect x="125.0" y="444" width="2.5" height="17.0" fill="#c4c4c4"/><rect x="125.0" y="461" width="2.5" height="7.0" fill="#8c8c8c"/><rect x="125.0" y="466" width="2.5" height="3.5" fill="#30d0d0"/><rect x="127.5" y="398" width="2.5" height="25.0" fill="#8c8c8c"/><rect x="127.5" y="423" width="2.5" height="45.0" fill="#8c8c8c"/><rect x="127.5" y="466" width="2.5" height="3.5" fill="#0000ff"/><rect x="130.0" y="396" width="2.5" height="60.0" fill="#8c8c8c"/><rect x="130.0" y="456" width="2.5" height="12.0" fill="#c4c4c4"/><rect x="130.0" y="466" width="2.5" height="3.5" fill="#8c8c8c"/><rect x="132.5" y="406" width="2.5" height="62.0" fill="#8888ee"/><rect x="132.5" y="466" width="2.5" height="3.5" fill="#0000ff"/><rect x="135.0" y="404" width="2.5" height="44.0" fill="#0000ff"/><rect x="135.0" y="448" width="2.5" height="20.0" fill="#c4c4c4"/><rect x="135.0" y="466" width="2.5" height="3.5" fill="#30d0d0"/><rect x="137.5" y="400" width="2.5" height="14.0" fill="#00ff00"/><rect x="137.5" y="414" width="2.5" height="36.0" fill="#0000ff"/><rect x="137.5" y="450" width="2.5" height="18.0" fill="#0000ff"/><rect x="137.5" y="466" width="2.5" height="3.5" fill="#c4c4c4"/><rect x="140.0" y="404" width="2.5" height="38.0" fill="#0000ff"/><rect x="140.0" y="442" width="2.5" height="26.0" fill="#0000ff"/><rect x="140.0" y="466" width="2.5" height="3.5" fill="#0000ff"/><rect x="142.5" y="408" width="2.5" height="16.0" fill="#8c8c8c"/><rect x="142.5" y="424" width="2.5" height="44.0" fill="#0000ff"/><rect x="142.5" y="466" width="2.5" height="3.5" fill="#0000ff"/><rect x="145.0" y="398" width="2.5" height="52.0" fill="#8c8c8c"/><rect x="145.0" y="450" width="2.5" height="18.0" fill="#0000ff"/><rect x="145.0" y="466" width="2.5" height="3.5" fill="#0000ff"/><rect x="147.5" y="400" width="2.5" height="11.0" fill="#00ff00"/><rect x="147.5" y="411" width="2.5" height="21.0" fill="#0000ff"/><rect x="147.5" y="432" width="2.5" height="36.0" fill="#8c8c8c"/><rect x="147.5" y="466" width="2.5" height="3.5" fill="#c4c4c4"/><rect x="150.0" y="407" width="2.5" height="25.0" fill="#00ff00"/><rect x="150.0" y="432" width="2.5" height="32.0" fill="#0000ff"/><rect x="150.0" y="464" width="2.5" height="5.5" fill="#0000ff"/><rect x="152.5" y="402" width="2.5" height="30.0" fill="#00ff00"/><rect x="152.5" y="432" width="2.5" height="32.0" fill="#0000ff"/><rect x="152.5" y="464" width="2.5" height="5.5" fill="#0000ff"/><rect x="155.0" y="402" width="2.5" height="38.0" fill="#00ff00"/><rect x="155.0" y="440" width="2.5" height="24.0" fill="#0000ff"/><rect x="155.0" y="464" width="2.5" height="5.5" fill="#8888ee"/><rect x="157.5" y="401" width="2.5" height="20.0" fill="#00ff00"/><rect x="157.5" y="421" width="2.5" height="43.0" fill="#0000ff"/><rect x="157.5" y="460" width="2.5" height="9.5" fill="#ffff00"/><rect x="160.0" y="403" width="2.5" height="39.0" fill="#00ff00"/><rect x="160.0" y="442" width="2.5" height="22.0" fill="#0000ff"/><rect x="160.0" y="460" width="2.5" height="9.5" fill="#00ff00"/><rect x="162.5" y="405" width="2.5" height="35.0" fill="#00ff00"/><rect x="162.5" y="440" width="2.5" height="24.0" fill="#0000ff"/><rect x="162.5" y="460" width="2.5" height="9.5" fill="#00ff00"/><rect x="165.0" y="407" width="2.5" height="35.0" fill="#00ff00"/><rect x="165.0" y="442" width="2.5" height="22.0" fill="#0000ff"/><rect x="165.0" y="460" width="2.5" height="9.5" fill="#ffff00"/><rect x="167.5" y="402" width="2.5" height="12.0" fill="#00ff00"/><rect x="167.5" y="414" width="2.5" height="50.0" fill="#0000ff"/><rect x="167.5" y="460" width="2.5" height="9.5" fill="#ffff00"/><rect x="170.0" y="407" width="2.5" height="8.0" fill="#00ff00"/><rect x="170.0" y="415" width="2.5" height="49.0" fill="#0000ff"/><rect x="170.0" y="460" width="2.5" height="9.5" fill="#00ff00"/><rect x="172.5" y="403" width="2.5" height="5.0" fill="#00ff00"/><rect x="172.5" y="408" width="2.5" height="56.0" fill="#0000ff"/><rect x="172.5" y="464" width="2.5" height="5.5" fill="#0000ff"/><rect x="175.0" y="407" width="2.5" height="10.0" fill="#00ff00"/><rect x="175.0" y="417" width="2.5" height="47.0" fill="#0000ff"/><rect x="175.0" y="464" width="2.5" height="5.5" fill="#0000ff"/><rect x="177.5" y="402" width="2.5" height="52.0" fill="#00ff00"/><rect x="177.5" y="454" width="2.5" height="10.0" fill="#0000ff"/><rect x="177.5" y="464" width="2.5" height="5.5" fill="#0000ff"/><rect x="180.0" y="407" width="2.5" height="46.0" fill="#00ff00"/><rect x="180.0" y="453" width="2.5" height="11.0" fill="#0000ff"/><rect x="180.0" y="464" width="2.5" height="5.5" fill="#0000ff"/><rect x="182.5" y="401" width="2.5" height="35.0" fill="#00ff00"/><rect x="182.5" y="407" width="2.5" height="6.0" fill="#ffff00"/><rect x="182.5" y="436" width="2.5" height="28.0" fill="#0000ff"/><rect x="182.5" y="464" width="2.5" height="5.5" fill="#8888ee"/><rect x="185.0" y="402" width="2.5" height="52.0" fill="#00ff00"/><rect x="185.0" y="404" width="2.5" height="17.0" fill="#ffff00"/><rect x="185.0" y="454" width="2.5" height="10.0" fill="#0000ff"/><rect x="185.0" y="464" width="2.5" height="5.5" fill="#0000ff"/><rect x="187.5" y="405" width="2.5" height="48.0" fill="#00ff00"/><rect x="187.5" y="409" width="2.5" height="11.0" fill="#ffff00"/><rect x="187.5" y="453" width="2.5" height="11.0" fill="#0000ff"/><rect x="187.5" y="464" width="2.5" height="5.5" fill="#0000ff"/><rect x="190.0" y="405" width="2.5" height="8.0" fill="#00ff00"/><rect x="190.0" y="406" width="2.5" height="8.0" fill="#ffff00"/><rect x="190.0" y="413" width="2.5" height="51.0" fill="#0000ff"/><rect x="190.0" y="460" width="2.5" height="9.5" fill="#00ff00"/><rect x="192.5" y="401" width="2.5" height="47.0" fill="#00ff00"/><rect x="192.5" y="448" width="2.5" height="16.0" fill="#0000ff"/><rect x="192.5" y="460" width="2.5" height="9.5" fill="#ffff00"/><rect x="195.0" y="407" width="2.5" height="39.0" fill="#00ff00"/><rect x="195.0" y="446" width="2.5" height="18.0" fill="#0000ff"/><rect x="195.0" y="460" width="2.5" height="9.5" fill="#00ff00"/><rect x="197.5" y="401" width="2.5" height="48.0" fill="#00ff00"/><rect x="197.5" y="449" width="2.5" height="15.0" fill="#0000ff"/><rect x="197.5" y="460" width="2.5" height="9.5" fill="#ffff00"/><rect x="200.0" y="402" width="2.5" height="44.0" fill="#00ff00"/><rect x="200.0" y="446" width="2.5" height="18.0" fill="#0000ff"/><rect x="200.0" y="464" width="2.5" height="5.5" fill="#0000ff"/><rect x="202.5" y="403" width="2.5" height="34.0" fill="#00ff00"/><rect x="202.5" y="437" width="2.5" height="27.0" fill="#0000ff"/><rect x="202.5" y="464" width="2.5" height="5.5" fill="#0000ff"/><rect x="205.0" y="411" width="2.5" height="52.0" fill="#0000ff"/><rect x="205.0" y="420" width="2.5" height="22.0" fill="#00ff00"/><rect x="205.0" y="463" width="2.5" height="6.5" fill="#0000ff"/><rect x="207.5" y="411" width="2.5" height="52.0" fill="#0000ff"/><rect x="207.5" y="463" width="2.5" height="6.5" fill="#0000ff"/><rect x="210.0" y="402" width="2.5" height="61.0" fill="#0000ff"/><rect x="210.0" y="416" width="2.5" height="36.0" fill="#00ff00"/><rect x="210.0" y="463" width="2.5" height="6.5" fill="#00ff00"/><rect x="212.5" y="411" width="2.5" height="52.0" fill="#0000ff"/><rect x="212.5" y="463" width="2.5" height="6.5" fill="#0000ff"/><rect x="215.0" y="402" width="2.5" height="18.0" fill="#0000ff"/><rect x="215.0" y="420" width="2.5" height="41.0" fill="#8c8c8c"/><rect x="215.0" y="461" width="2.5" height="2.0" fill="#0000ff"/><rect x="215.0" y="463" width="2.5" height="6.5" fill="#00ff00"/><rect x="217.5" y="409" width="2.5" height="54.0" fill="#0000ff"/><rect x="217.5" y="424" width="2.5" height="25.0" fill="#00ff00"/><rect x="217.5" y="463" width="2.5" height="6.5" fill="#0000ff"/><rect x="220.0" y="410" width="2.5" height="53.0" fill="#0000ff"/><rect x="220.0" y="463" width="2.5" height="6.5" fill="#00ff00"/><rect x="222.5" y="406" width="2.5" height="57.0" fill="#0000ff"/><rect x="222.5" y="463" width="2.5" height="6.5" fill="#0000ff"/><rect x="225.0" y="400" width="2.5" height="63.0" fill="#0000ff"/><rect x="225.0" y="402" width="2.5" height="44.0" fill="#00ff00"/><rect x="225.0" y="463" width="2.5" height="6.5" fill="#00ff00"/><rect x="227.5" y="411" width="2.5" height="52.0" fill="#0000ff"/><rect x="227.5" y="461" width="2.5" height="8.5" fill="#ffff00"/><rect x="230.0" y="406" width="2.5" height="57.0" fill="#0000ff"/><rect x="230.0" y="461" width="2.5" height="8.5" fill="#00ff00"/><rect x="232.5" y="404" width="2.5" height="59.0" fill="#0000ff"/><rect x="232.5" y="461" width="2.5" height="8.5" fill="#ffff00"/><rect x="235.0" y="406" width="2.5" height="12.0" fill="#0000ff"/><rect x="235.0" y="418" width="2.5" height="34.0" fill="#8c8c8c"/><rect x="235.0" y="452" width="2.5" height="11.0" fill="#0000ff"/><rect x="235.0" y="461" width="2.5" height="8.5" fill="#00ff00"/><rect x="237.5" y="400" width="2.5" height="63.0" fill="#0000ff"/><rect x="237.5" y="461" width="2.5" height="8.5" fill="#00ff00"/><rect x="240.0" y="410.5" width="2.5" height="3.5" fill="#0000ff"/><rect x="240.0" y="414" width="2.5" height="32.0" fill="#8888ee"/><rect x="240.0" y="446" width="2.5" height="17.0" fill="#0000ff"/><rect x="240.0" y="461" width="2.5" height="8.5" fill="#ffff00"/><rect x="242.5" y="410.5" width="2.5" height="52.5" fill="#0000ff"/><rect x="242.5" y="461" width="2.5" height="8.5" fill="#ffff00"/><rect x="245.0" y="410.5" width="2.5" height="52.5" fill="#0000ff"/><rect x="245.0" y="461" width="2.5" height="8.5" fill="#ffff00"/><rect x="247.5" y="410.5" width="2.5" height="52.5" fill="#0000ff"/><rect x="247.5" y="461" width="2.5" height="8.5" fill="#00ff00"/><rect x="250.0" y="410.5" width="2.5" height="52.5" fill="#0000ff"/><rect x="250.0" y="461" width="2.5" height="8.5" fill="#ffff00"/><rect x="252.5" y="410.5" width="2.5" height="52.5" fill="#0000ff"/><rect x="252.5" y="461" width="2.5" height="8.5" fill="#00ff00"/><rect x="255.0" y="410.5" width="1.0" height="52.5" fill="#0000ff"/><rect x="255.0" y="461" width="1.0" height="8.5" fill="#ffff00"/><rect x="246" y="447" width="10" height="8" fill="#8c8c8c"/><path d="M39 319.5h6M39 329.5h6M39 341.5h6M39 353.5h6M39 365.5h6M39 377.5h6M39 389.5h6M39 401.5h6M39 413.5h6M39 425.5h6M39 437.5h6M39 449.5h6M39 461.5h6M39 471.5h6" stroke="#000" stroke-width="1" fill="none" shape-rendering="crispEdges"/><path d="M45.5 479v10.5M70.5 479v5.5M95.5 479v10.5M120.5 479v5.5M145.5 479v10.5M171.5 479v5.5M196.5 479v10.5M221.5 479v5.5M246.5 479v10.5M271.5 479v5.5M296.5 479v10.5M321.5 479v5.5M346.5 479v10.5" stroke="#000" stroke-width="1" fill="none" shape-rendering="crispEdges"/><rect x="350" y="317" width="6" height="21" fill="#ff0000" /><rect x="350" y="338" width="6" height="20" fill="#ff9999" /><rect x="350" y="358" width="6" height="22" fill="#ffff00" /><rect x="350" y="380" width="6" height="20" fill="#00ff00" /><rect x="350" y="400" width="6" height="21" fill="#0000ff" /><rect x="350" y="421" width="6" height="21" fill="#808080" /><rect x="350" y="442" width="6" height="21" fill="#c0c0c0" /><rect x="350" y="463" width="6" height="20" fill="#000000" /><rect x="45" y="524" width="302" height="162" fill="#000" /><rect x="45" y="524" width="211" height="158" fill="#000080" /><rect x="45.0" y="620" width="2.5" height="3" fill="#ff4c00"/><rect x="45.0" y="623" width="2.5" height="3" fill="#bd0000"/><rect x="45.0" y="626" width="2.5" height="3" fill="#b90000"/><rect x="45.0" y="629" width="2.5" height="3" fill="#009eff"/><rect x="45.0" y="632" width="2.5" height="3" fill="#009eff"/><rect x="45.0" y="635" width="2.5" height="3" fill="#0061ff"/><rect x="45.0" y="638" width="2.5" height="3" fill="#009eff"/><rect x="45.0" y="641" width="2.5" height="3" fill="#001aff"/><rect x="45.0" y="644" width="2.5" height="3" fill="#0061ff"/><rect x="45.0" y="647" width="2.5" height="3" fill="#001aff"/><rect x="45.0" y="650" width="2.5" height="3" fill="#ffc700"/><rect x="45.0" y="653" width="2.5" height="3" fill="#4dffb2"/><rect x="45.0" y="656" width="2.5" height="3" fill="#05fffa"/><rect x="45.0" y="659" width="2.5" height="3" fill="#00c7ff"/><rect x="45.0" y="662" width="2.5" height="3" fill="#faff05"/><rect x="45.0" y="665" width="2.5" height="3" fill="#be0000"/><rect x="45.0" y="668" width="2.5" height="3" fill="#d90000"/><rect x="45.0" y="671" width="2.5" height="3" fill="#eb0000"/><rect x="47.5" y="622" width="2.5" height="3" fill="#ff1a00"/><rect x="47.5" y="625" width="2.5" height="3" fill="#faff05"/><rect x="47.5" y="628" width="2.5" height="3" fill="#ef0000"/><rect x="47.5" y="631" width="2.5" height="3" fill="#0061ff"/><rect x="47.5" y="634" width="2.5" height="3" fill="#001aff"/><rect x="47.5" y="637" width="2.5" height="3" fill="#001aff"/><rect x="47.5" y="640" width="2.5" height="3" fill="#001aff"/><rect x="47.5" y="643" width="2.5" height="3" fill="#001aff"/><rect x="47.5" y="646" width="2.5" height="3" fill="#0061ff"/><rect x="47.5" y="649" width="2.5" height="3" fill="#faff05"/><rect x="47.5" y="652" width="2.5" height="3" fill="#4dffb2"/><rect x="47.5" y="655" width="2.5" height="3" fill="#00c7ff"/><rect x="47.5" y="658" width="2.5" height="3" fill="#00c7ff"/><rect x="47.5" y="661" width="2.5" height="3" fill="#4dffb2"/><rect x="47.5" y="664" width="2.5" height="3" fill="#faff05"/><rect x="47.5" y="667" width="2.5" height="3" fill="#ffc700"/><rect x="47.5" y="670" width="2.5" height="3" fill="#ffc700"/><rect x="47.5" y="673" width="2.5" height="1" fill="#b3ff4c"/><rect x="50.0" y="622" width="2.5" height="3" fill="#ff4c00"/><rect x="50.0" y="625" width="2.5" height="3" fill="#b3ff4c"/><rect x="50.0" y="628" width="2.5" height="3" fill="#b3ff4c"/><rect x="50.0" y="631" width="2.5" height="3" fill="#001aff"/><rect x="50.0" y="634" width="2.5" height="3" fill="#0061ff"/><rect x="50.0" y="637" width="2.5" height="3" fill="#009eff"/><rect x="50.0" y="640" width="2.5" height="3" fill="#009eff"/><rect x="50.0" y="643" width="2.5" height="3" fill="#0061ff"/><rect x="50.0" y="646" width="2.5" height="3" fill="#0061ff"/><rect x="50.0" y="649" width="2.5" height="3" fill="#e5ff1a"/><rect x="50.0" y="652" width="2.5" height="3" fill="#e5ff1a"/><rect x="50.0" y="655" width="2.5" height="3" fill="#80ff80"/><rect x="50.0" y="658" width="2.5" height="3" fill="#2effd1"/><rect x="50.0" y="661" width="2.5" height="3" fill="#b3ff4c"/><rect x="50.0" y="664" width="2.5" height="3" fill="#ffc700"/><rect x="50.0" y="667" width="2.5" height="3" fill="#e5ff1a"/><rect x="50.0" y="670" width="2.5" height="3" fill="#4dffb2"/><rect x="50.0" y="673" width="2.5" height="1" fill="#b3ff4c"/><rect x="52.5" y="621" width="2.5" height="3" fill="#ff4c00"/><rect x="52.5" y="624" width="2.5" height="3" fill="#faff05"/><rect x="52.5" y="627" width="2.5" height="3" fill="#2effd1"/><rect x="52.5" y="630" width="2.5" height="3" fill="#80ff80"/><rect x="52.5" y="633" width="2.5" height="3" fill="#b3ff4c"/><rect x="52.5" y="636" width="2.5" height="3" fill="#cd0000"/><rect x="52.5" y="639" width="2.5" height="3" fill="#d80000"/><rect x="52.5" y="642" width="2.5" height="3" fill="#ffc700"/><rect x="52.5" y="645" width="2.5" height="3" fill="#4dffb2"/><rect x="52.5" y="648" width="2.5" height="3" fill="#05fffa"/><rect x="52.5" y="651" width="2.5" height="3" fill="#80ff80"/><rect x="52.5" y="654" width="2.5" height="3" fill="#05fffa"/><rect x="52.5" y="657" width="2.5" height="3" fill="#00c7ff"/><rect x="52.5" y="660" width="2.5" height="3" fill="#00c7ff"/><rect x="52.5" y="663" width="2.5" height="3" fill="#b3ff4c"/><rect x="52.5" y="666" width="2.5" height="3" fill="#b3ff4c"/><rect x="52.5" y="669" width="2.5" height="3" fill="#80ff80"/><rect x="52.5" y="672" width="2.5" height="2" fill="#2effd1"/><rect x="55.0" y="620" width="2.5" height="3" fill="#ff4c00"/><rect x="55.0" y="623" width="2.5" height="3" fill="#ff8000"/><rect x="55.0" y="626" width="2.5" height="3" fill="#e5ff1a"/><rect x="55.0" y="629" width="2.5" height="3" fill="#80ff80"/><rect x="55.0" y="632" width="2.5" height="3" fill="#b3ff4c"/><rect x="55.0" y="635" width="2.5" height="3" fill="#ff8000"/><rect x="55.0" y="638" width="2.5" height="3" fill="#bd0000"/><rect x="55.0" y="641" width="2.5" height="3" fill="#ffc700"/><rect x="55.0" y="644" width="2.5" height="3" fill="#e5ff1a"/><rect x="55.0" y="647" width="2.5" height="3" fill="#05fffa"/><rect x="55.0" y="650" width="2.5" height="3" fill="#80ff80"/><rect x="55.0" y="653" width="2.5" height="3" fill="#05fffa"/><rect x="55.0" y="656" width="2.5" height="3" fill="#b3ff4c"/><rect x="55.0" y="659" width="2.5" height="3" fill="#e5ff1a"/><rect x="55.0" y="662" width="2.5" height="3" fill="#4dffb2"/><rect x="55.0" y="665" width="2.5" height="3" fill="#2effd1"/><rect x="55.0" y="668" width="2.5" height="3" fill="#00c7ff"/><rect x="55.0" y="671" width="2.5" height="3" fill="#e5ff1a"/><rect x="57.5" y="622" width="2.5" height="3" fill="#e50000"/><rect x="57.5" y="625" width="2.5" height="3" fill="#ff8000"/><rect x="57.5" y="628" width="2.5" height="3" fill="#faff05"/><rect x="57.5" y="631" width="2.5" height="3" fill="#ffc700"/><rect x="57.5" y="634" width="2.5" height="3" fill="#ff8000"/><rect x="57.5" y="637" width="2.5" height="3" fill="#e00000"/><rect x="57.5" y="640" width="2.5" height="3" fill="#b3ff4c"/><rect x="57.5" y="643" width="2.5" height="3" fill="#faff05"/><rect x="57.5" y="646" width="2.5" height="3" fill="#4dffb2"/><rect x="57.5" y="649" width="2.5" height="3" fill="#00c7ff"/><rect x="57.5" y="652" width="2.5" height="3" fill="#2effd1"/><rect x="57.5" y="655" width="2.5" height="3" fill="#e5ff1a"/><rect x="57.5" y="658" width="2.5" height="3" fill="#b3ff4c"/><rect x="57.5" y="661" width="2.5" height="3" fill="#4dffb2"/><rect x="57.5" y="664" width="2.5" height="3" fill="#b3ff4c"/><rect x="57.5" y="667" width="2.5" height="3" fill="#b3ff4c"/><rect x="57.5" y="670" width="2.5" height="3" fill="#ff8000"/><rect x="57.5" y="673" width="2.5" height="1" fill="#ff8000"/><rect x="60.0" y="622" width="2.5" height="3" fill="#ff1a00"/><rect x="60.0" y="625" width="2.5" height="3" fill="#e70000"/><rect x="60.0" y="628" width="2.5" height="3" fill="#c90000"/><rect x="60.0" y="631" width="2.5" height="3" fill="#b60000"/><rect x="60.0" y="634" width="2.5" height="3" fill="#d50000"/><rect x="60.0" y="637" width="2.5" height="3" fill="#d70000"/><rect x="60.0" y="640" width="2.5" height="3" fill="#b3ff4c"/><rect x="60.0" y="643" width="2.5" height="3" fill="#aa0000"/><rect x="60.0" y="646" width="2.5" height="3" fill="#c60000"/><rect x="60.0" y="649" width="2.5" height="3" fill="#ffc700"/><rect x="60.0" y="652" width="2.5" height="3" fill="#ffc700"/><rect x="60.0" y="655" width="2.5" height="3" fill="#00c7ff"/><rect x="60.0" y="658" width="2.5" height="3" fill="#00c7ff"/><rect x="60.0" y="661" width="2.5" height="3" fill="#ff8000"/><rect x="60.0" y="664" width="2.5" height="3" fill="#cc0000"/><rect x="60.0" y="667" width="2.5" height="3" fill="#ef0000"/><rect x="60.0" y="670" width="2.5" height="3" fill="#b10000"/><rect x="60.0" y="673" width="2.5" height="1" fill="#d80000"/><rect x="62.5" y="621" width="2.5" height="3" fill="#ff4c00"/><rect x="62.5" y="624" width="2.5" height="3" fill="#db0000"/><rect x="62.5" y="627" width="2.5" height="3" fill="#f50000"/><rect x="62.5" y="630" width="2.5" height="3" fill="#d80000"/><rect x="62.5" y="633" width="2.5" height="3" fill="#ee0000"/><rect x="62.5" y="636" width="2.5" height="3" fill="#af0000"/><rect x="62.5" y="639" width="2.5" height="3" fill="#c70000"/><rect x="62.5" y="642" width="2.5" height="3" fill="#ec0000"/><rect x="62.5" y="645" width="2.5" height="3" fill="#cf0000"/><rect x="62.5" y="648" width="2.5" height="3" fill="#ac0000"/><rect x="62.5" y="651" width="2.5" height="3" fill="#c20000"/><rect x="62.5" y="654" width="2.5" height="3" fill="#e5ff1a"/><rect x="62.5" y="657" width="2.5" height="3" fill="#80ff80"/><rect x="62.5" y="660" width="2.5" height="3" fill="#e5ff1a"/><rect x="62.5" y="663" width="2.5" height="3" fill="#e20000"/><rect x="62.5" y="666" width="2.5" height="3" fill="#d90000"/><rect x="62.5" y="669" width="2.5" height="3" fill="#ee0000"/><rect x="62.5" y="672" width="2.5" height="2" fill="#db0000"/><rect x="65.0" y="620" width="2.5" height="3" fill="#ff1a00"/><rect x="65.0" y="623" width="2.5" height="3" fill="#c70000"/><rect x="65.0" y="626" width="2.5" height="3" fill="#d10000"/><rect x="65.0" y="629" width="2.5" height="3" fill="#de0000"/><rect x="65.0" y="632" width="2.5" height="3" fill="#f30000"/><rect x="65.0" y="635" width="2.5" height="3" fill="#e40000"/><rect x="65.0" y="638" width="2.5" height="3" fill="#ba0000"/><rect x="65.0" y="641" width="2.5" height="3" fill="#b30000"/><rect x="65.0" y="644" width="2.5" height="3" fill="#dc0000"/><rect x="65.0" y="647" width="2.5" height="3" fill="#ba0000"/><rect x="65.0" y="650" width="2.5" height="3" fill="#bb0000"/><rect x="65.0" y="653" width="2.5" height="3" fill="#ff8000"/><rect x="65.0" y="656" width="2.5" height="3" fill="#4dffb2"/><rect x="65.0" y="659" width="2.5" height="3" fill="#4dffb2"/><rect x="65.0" y="662" width="2.5" height="3" fill="#f70000"/><rect x="65.0" y="665" width="2.5" height="3" fill="#e10000"/><rect x="65.0" y="668" width="2.5" height="3" fill="#cc0000"/><rect x="65.0" y="671" width="2.5" height="3" fill="#c30000"/><rect x="67.5" y="622" width="2.5" height="3" fill="#ff4c00"/><rect x="67.5" y="625" width="2.5" height="3" fill="#bb0000"/><rect x="67.5" y="628" width="2.5" height="3" fill="#c20000"/><rect x="67.5" y="631" width="2.5" height="3" fill="#e20000"/><rect x="67.5" y="634" width="2.5" height="3" fill="#ad0000"/><rect x="67.5" y="637" width="2.5" height="3" fill="#c50000"/><rect x="67.5" y="640" width="2.5" height="3" fill="#cb0000"/><rect x="67.5" y="643" width="2.5" height="3" fill="#f90000"/><rect x="67.5" y="646" width="2.5" height="3" fill="#cd0000"/><rect x="67.5" y="649" width="2.5" height="3" fill="#e50000"/><rect x="67.5" y="652" width="2.5" height="3" fill="#c30000"/><rect x="67.5" y="655" width="2.5" height="3" fill="#d40000"/><rect x="67.5" y="658" width="2.5" height="3" fill="#b70000"/><rect x="67.5" y="661" width="2.5" height="3" fill="#c50000"/><rect x="67.5" y="664" width="2.5" height="3" fill="#b90000"/><rect x="67.5" y="667" width="2.5" height="3" fill="#de0000"/><rect x="67.5" y="670" width="2.5" height="3" fill="#c50000"/><rect x="67.5" y="673" width="2.5" height="1" fill="#be0000"/><rect x="70.0" y="622" width="2.5" height="3" fill="#ff4c00"/><rect x="70.0" y="625" width="2.5" height="3" fill="#af0000"/><rect x="70.0" y="628" width="2.5" height="3" fill="#ec0000"/><rect x="70.0" y="631" width="2.5" height="3" fill="#b30000"/><rect x="70.0" y="634" width="2.5" height="3" fill="#d50000"/><rect x="70.0" y="637" width="2.5" height="3" fill="#dc0000"/><rect x="70.0" y="640" width="2.5" height="3" fill="#df0000"/><rect x="70.0" y="643" width="2.5" height="3" fill="#ee0000"/><rect x="70.0" y="646" width="2.5" height="3" fill="#aa0000"/><rect x="70.0" y="649" width="2.5" height="3" fill="#ea0000"/><rect x="70.0" y="652" width="2.5" height="3" fill="#dc0000"/><rect x="70.0" y="655" width="2.5" height="3" fill="#b40000"/><rect x="70.0" y="658" width="2.5" height="3" fill="#e30000"/><rect x="70.0" y="661" width="2.5" height="3" fill="#f30000"/><rect x="70.0" y="664" width="2.5" height="3" fill="#c30000"/><rect x="70.0" y="667" width="2.5" height="3" fill="#d80000"/><rect x="70.0" y="670" width="2.5" height="3" fill="#c80000"/><rect x="70.0" y="673" width="2.5" height="1" fill="#ae0000"/><rect x="72.5" y="620" width="2.5" height="3" fill="#e50000"/><rect x="72.5" y="623" width="2.5" height="3" fill="#ad0000"/><rect x="72.5" y="626" width="2.5" height="3" fill="#e10000"/><rect x="72.5" y="629" width="2.5" height="3" fill="#cd0000"/><rect x="72.5" y="632" width="2.5" height="3" fill="#b30000"/><rect x="72.5" y="635" width="2.5" height="3" fill="#e40000"/><rect x="72.5" y="638" width="2.5" height="3" fill="#a90000"/><rect x="72.5" y="641" width="2.5" height="3" fill="#ea0000"/><rect x="72.5" y="644" width="2.5" height="3" fill="#ca0000"/><rect x="72.5" y="647" width="2.5" height="3" fill="#c70000"/><rect x="72.5" y="650" width="2.5" height="3" fill="#eb0000"/><rect x="72.5" y="653" width="2.5" height="3" fill="#bc0000"/><rect x="72.5" y="656" width="2.5" height="3" fill="#eb0000"/><rect x="72.5" y="659" width="2.5" height="3" fill="#bf0000"/><rect x="72.5" y="662" width="2.5" height="3" fill="#a90000"/><rect x="72.5" y="665" width="2.5" height="3" fill="#aa0000"/><rect x="72.5" y="668" width="2.5" height="3" fill="#ec0000"/><rect x="72.5" y="671" width="2.5" height="3" fill="#b10000"/><rect x="75.0" y="621" width="2.5" height="3" fill="#ff4c00"/><rect x="75.0" y="624" width="2.5" height="3" fill="#ab0000"/><rect x="75.0" y="627" width="2.5" height="3" fill="#d30000"/><rect x="75.0" y="630" width="2.5" height="3" fill="#cd0000"/><rect x="75.0" y="633" width="2.5" height="3" fill="#d80000"/><rect x="75.0" y="636" width="2.5" height="3" fill="#dd0000"/><rect x="75.0" y="639" width="2.5" height="3" fill="#c40000"/><rect x="75.0" y="642" width="2.5" height="3" fill="#f40000"/><rect x="75.0" y="645" width="2.5" height="3" fill="#e90000"/><rect x="75.0" y="648" width="2.5" height="3" fill="#bf0000"/><rect x="75.0" y="651" width="2.5" height="3" fill="#db0000"/><rect x="75.0" y="654" width="2.5" height="3" fill="#dd0000"/><rect x="75.0" y="657" width="2.5" height="3" fill="#ac0000"/><rect x="75.0" y="660" width="2.5" height="3" fill="#b40000"/><rect x="75.0" y="663" width="2.5" height="3" fill="#b30000"/><rect x="75.0" y="666" width="2.5" height="3" fill="#c20000"/><rect x="75.0" y="669" width="2.5" height="3" fill="#cd0000"/><rect x="75.0" y="672" width="2.5" height="2" fill="#ab0000"/><rect x="80.0" y="611" width="2.5" height="14" fill="#b30000"/><rect x="80.0" y="625" width="2.5" height="3" fill="#ffb300"/><rect x="80.0" y="628" width="2.5" height="3" fill="#c70000"/><rect x="80.0" y="631" width="2.5" height="3" fill="#c70000"/><rect x="80.0" y="634" width="2.5" height="3" fill="#c70000"/><rect x="80.0" y="637" width="2.5" height="3" fill="#c70000"/><rect x="80.0" y="640" width="2.5" height="3" fill="#c70000"/><rect x="80.0" y="643" width="2.5" height="3" fill="#c70000"/><rect x="80.0" y="646" width="2.5" height="3" fill="#c70000"/><rect x="80.0" y="649" width="2.5" height="3" fill="#c70000"/><rect x="80.0" y="652" width="2.5" height="3" fill="#c70000"/><rect x="80.0" y="655" width="2.5" height="3" fill="#c70000"/><rect x="80.0" y="658" width="2.5" height="3" fill="#c70000"/><rect x="80.0" y="661" width="2.5" height="3" fill="#c70000"/><rect x="80.0" y="664" width="2.5" height="3" fill="#c70000"/><rect x="80.0" y="667" width="2.5" height="3" fill="#c70000"/><rect x="80.0" y="670" width="2.5" height="3" fill="#c70000"/><rect x="80.0" y="673" width="2.5" height="1" fill="#c70000"/><rect x="82.5" y="625" width="2.5" height="3" fill="#ff8000"/><rect x="82.5" y="628" width="2.5" height="3" fill="#e50000"/><rect x="82.5" y="631" width="2.5" height="3" fill="#e50000"/><rect x="82.5" y="634" width="2.5" height="3" fill="#e50000"/><rect x="82.5" y="637" width="2.5" height="3" fill="#e50000"/><rect x="82.5" y="640" width="2.5" height="3" fill="#e50000"/><rect x="82.5" y="643" width="2.5" height="3" fill="#e50000"/><rect x="82.5" y="646" width="2.5" height="3" fill="#e50000"/><rect x="82.5" y="649" width="2.5" height="3" fill="#e50000"/><rect x="82.5" y="652" width="2.5" height="3" fill="#e50000"/><rect x="82.5" y="655" width="2.5" height="3" fill="#e50000"/><rect x="82.5" y="658" width="2.5" height="3" fill="#e50000"/><rect x="82.5" y="661" width="2.5" height="3" fill="#e50000"/><rect x="82.5" y="664" width="2.5" height="3" fill="#e50000"/><rect x="82.5" y="667" width="2.5" height="3" fill="#e50000"/><rect x="82.5" y="670" width="2.5" height="3" fill="#e50000"/><rect x="82.5" y="673" width="2.5" height="1" fill="#e50000"/><rect x="85.0" y="625" width="2.5" height="3" fill="#ff4c00"/><rect x="85.0" y="628" width="2.5" height="3" fill="#ff1a00"/><rect x="85.0" y="631" width="2.5" height="3" fill="#ff1a00"/><rect x="85.0" y="634" width="2.5" height="3" fill="#ff1a00"/><rect x="85.0" y="637" width="2.5" height="3" fill="#ff1a00"/><rect x="85.0" y="640" width="2.5" height="3" fill="#ff1a00"/><rect x="85.0" y="643" width="2.5" height="3" fill="#ff1a00"/><rect x="85.0" y="646" width="2.5" height="3" fill="#ff1a00"/><rect x="85.0" y="649" width="2.5" height="3" fill="#ff1a00"/><rect x="85.0" y="652" width="2.5" height="3" fill="#ff1a00"/><rect x="85.0" y="655" width="2.5" height="3" fill="#ff1a00"/><rect x="85.0" y="658" width="2.5" height="3" fill="#ff1a00"/><rect x="85.0" y="661" width="2.5" height="3" fill="#ff1a00"/><rect x="85.0" y="664" width="2.5" height="3" fill="#ff1a00"/><rect x="85.0" y="667" width="2.5" height="3" fill="#ff1a00"/><rect x="85.0" y="670" width="2.5" height="3" fill="#ff1a00"/><rect x="85.0" y="673" width="2.5" height="1" fill="#ff1a00"/><rect x="87.5" y="621" width="2.5" height="3" fill="#ff4c00"/><rect x="87.5" y="624" width="2.5" height="3" fill="#a80000"/><rect x="87.5" y="627" width="2.5" height="3" fill="#a80000"/><rect x="87.5" y="630" width="2.5" height="3" fill="#a80000"/><rect x="87.5" y="633" width="2.5" height="3" fill="#a80000"/><rect x="87.5" y="636" width="2.5" height="3" fill="#a80000"/><rect x="87.5" y="639" width="2.5" height="3" fill="#a80000"/><rect x="87.5" y="642" width="2.5" height="3" fill="#a80000"/><rect x="87.5" y="645" width="2.5" height="3" fill="#a80000"/><rect x="87.5" y="648" width="2.5" height="3" fill="#a80000"/><rect x="87.5" y="651" width="2.5" height="3" fill="#a80000"/><rect x="87.5" y="654" width="2.5" height="3" fill="#a80000"/><rect x="87.5" y="657" width="2.5" height="3" fill="#a80000"/><rect x="87.5" y="660" width="2.5" height="3" fill="#a80000"/><rect x="87.5" y="663" width="2.5" height="3" fill="#a80000"/><rect x="87.5" y="666" width="2.5" height="3" fill="#a80000"/><rect x="87.5" y="669" width="2.5" height="3" fill="#a80000"/><rect x="87.5" y="672" width="2.5" height="2" fill="#a80000"/><rect x="90.0" y="622" width="2.5" height="3" fill="#ffb300"/><rect x="90.0" y="625" width="2.5" height="3" fill="#9e0000"/><rect x="90.0" y="628" width="2.5" height="3" fill="#9e0000"/><rect x="90.0" y="631" width="2.5" height="3" fill="#9e0000"/><rect x="90.0" y="634" width="2.5" height="3" fill="#9e0000"/><rect x="90.0" y="637" width="2.5" height="3" fill="#9e0000"/><rect x="90.0" y="640" width="2.5" height="3" fill="#9e0000"/><rect x="90.0" y="643" width="2.5" height="3" fill="#9e0000"/><rect x="90.0" y="646" width="2.5" height="3" fill="#9e0000"/><rect x="90.0" y="649" width="2.5" height="3" fill="#9e0000"/><rect x="90.0" y="652" width="2.5" height="3" fill="#9e0000"/><rect x="90.0" y="655" width="2.5" height="3" fill="#9e0000"/><rect x="90.0" y="658" width="2.5" height="3" fill="#9e0000"/><rect x="90.0" y="661" width="2.5" height="3" fill="#9e0000"/><rect x="90.0" y="664" width="2.5" height="3" fill="#9e0000"/><rect x="90.0" y="667" width="2.5" height="3" fill="#9e0000"/><rect x="90.0" y="670" width="2.5" height="3" fill="#9e0000"/><rect x="90.0" y="673" width="2.5" height="1" fill="#9e0000"/><rect x="92.5" y="606" width="2.5" height="15" fill="#e50000"/><rect x="92.5" y="621" width="2.5" height="3" fill="#ff8000"/><rect x="92.5" y="624" width="2.5" height="3" fill="#2effd1"/><rect x="92.5" y="627" width="2.5" height="3" fill="#2effd1"/><rect x="92.5" y="630" width="2.5" height="3" fill="#ff1a00"/><rect x="92.5" y="633" width="2.5" height="3" fill="#ff1a00"/><rect x="92.5" y="636" width="2.5" height="3" fill="#ff1a00"/><rect x="92.5" y="639" width="2.5" height="3" fill="#ff1a00"/><rect x="92.5" y="642" width="2.5" height="3" fill="#ff1a00"/><rect x="92.5" y="645" width="2.5" height="3" fill="#ff1a00"/><rect x="92.5" y="648" width="2.5" height="3" fill="#ff1a00"/><rect x="92.5" y="651" width="2.5" height="3" fill="#ff1a00"/><rect x="92.5" y="654" width="2.5" height="3" fill="#ff1a00"/><rect x="92.5" y="657" width="2.5" height="3" fill="#ff1a00"/><rect x="92.5" y="660" width="2.5" height="3" fill="#ff1a00"/><rect x="92.5" y="663" width="2.5" height="3" fill="#ff1a00"/><rect x="92.5" y="666" width="2.5" height="3" fill="#ff1a00"/><rect x="92.5" y="669" width="2.5" height="3" fill="#ff1a00"/><rect x="92.5" y="672" width="2.5" height="2" fill="#ff1a00"/><rect x="95.0" y="621" width="2.5" height="3" fill="#ff8000"/><rect x="95.0" y="624" width="2.5" height="3" fill="#2effd1"/><rect x="95.0" y="627" width="2.5" height="3" fill="#2effd1"/><rect x="95.0" y="630" width="2.5" height="3" fill="#c70000"/><rect x="95.0" y="633" width="2.5" height="3" fill="#c70000"/><rect x="95.0" y="636" width="2.5" height="3" fill="#c70000"/><rect x="95.0" y="639" width="2.5" height="3" fill="#c70000"/><rect x="95.0" y="642" width="2.5" height="3" fill="#c70000"/><rect x="95.0" y="645" width="2.5" height="3" fill="#c70000"/><rect x="95.0" y="648" width="2.5" height="3" fill="#c70000"/><rect x="95.0" y="651" width="2.5" height="3" fill="#c70000"/><rect x="95.0" y="654" width="2.5" height="3" fill="#c70000"/><rect x="95.0" y="657" width="2.5" height="3" fill="#c70000"/><rect x="95.0" y="660" width="2.5" height="3" fill="#c70000"/><rect x="95.0" y="663" width="2.5" height="3" fill="#c70000"/><rect x="95.0" y="666" width="2.5" height="3" fill="#c70000"/><rect x="95.0" y="669" width="2.5" height="3" fill="#c70000"/><rect x="95.0" y="672" width="2.5" height="2" fill="#c70000"/><rect x="97.5" y="620" width="2.5" height="3" fill="#ff4c00"/><rect x="97.5" y="623" width="2.5" height="3" fill="#00e5ff"/><rect x="97.5" y="626" width="2.5" height="3" fill="#80ff80"/><rect x="97.5" y="629" width="2.5" height="3" fill="#ff1a00"/><rect x="97.5" y="632" width="2.5" height="3" fill="#ff1a00"/><rect x="97.5" y="635" width="2.5" height="3" fill="#ff1a00"/><rect x="97.5" y="638" width="2.5" height="3" fill="#ff1a00"/><rect x="97.5" y="641" width="2.5" height="3" fill="#ff1a00"/><rect x="97.5" y="644" width="2.5" height="3" fill="#ff1a00"/><rect x="97.5" y="647" width="2.5" height="3" fill="#ff1a00"/><rect x="97.5" y="650" width="2.5" height="3" fill="#ff1a00"/><rect x="97.5" y="653" width="2.5" height="3" fill="#ff1a00"/><rect x="97.5" y="656" width="2.5" height="3" fill="#ff1a00"/><rect x="97.5" y="659" width="2.5" height="3" fill="#ff1a00"/><rect x="97.5" y="662" width="2.5" height="3" fill="#ff1a00"/><rect x="97.5" y="665" width="2.5" height="3" fill="#ff1a00"/><rect x="97.5" y="668" width="2.5" height="3" fill="#ff1a00"/><rect x="97.5" y="671" width="2.5" height="3" fill="#ff1a00"/><rect x="100.0" y="623" width="2.5" height="3" fill="#ff8000"/><rect x="100.0" y="626" width="2.5" height="3" fill="#80ff80"/><rect x="100.0" y="629" width="2.5" height="3" fill="#9e0000"/><rect x="100.0" y="632" width="2.5" height="3" fill="#9e0000"/><rect x="100.0" y="635" width="2.5" height="3" fill="#9e0000"/><rect x="100.0" y="638" width="2.5" height="3" fill="#9e0000"/><rect x="100.0" y="641" width="2.5" height="3" fill="#9e0000"/><rect x="100.0" y="644" width="2.5" height="3" fill="#9e0000"/><rect x="100.0" y="647" width="2.5" height="3" fill="#9e0000"/><rect x="100.0" y="650" width="2.5" height="3" fill="#9e0000"/><rect x="100.0" y="653" width="2.5" height="3" fill="#9e0000"/><rect x="100.0" y="656" width="2.5" height="3" fill="#9e0000"/><rect x="100.0" y="659" width="2.5" height="3" fill="#9e0000"/><rect x="100.0" y="662" width="2.5" height="3" fill="#9e0000"/><rect x="100.0" y="665" width="2.5" height="3" fill="#9e0000"/><rect x="100.0" y="668" width="2.5" height="3" fill="#9e0000"/><rect x="100.0" y="671" width="2.5" height="3" fill="#9e0000"/><rect x="102.5" y="623" width="2.5" height="3" fill="#ff8000"/><rect x="102.5" y="626" width="2.5" height="3" fill="#2effd1"/><rect x="102.5" y="629" width="2.5" height="3" fill="#e5ff1a"/><rect x="102.5" y="632" width="2.5" height="3" fill="#a80000"/><rect x="102.5" y="635" width="2.5" height="3" fill="#a80000"/><rect x="102.5" y="638" width="2.5" height="3" fill="#a80000"/><rect x="102.5" y="641" width="2.5" height="3" fill="#a80000"/><rect x="102.5" y="644" width="2.5" height="3" fill="#a80000"/><rect x="102.5" y="647" width="2.5" height="3" fill="#e5ff1a"/><rect x="102.5" y="650" width="2.5" height="3" fill="#a80000"/><rect x="102.5" y="653" width="2.5" height="3" fill="#a80000"/><rect x="102.5" y="656" width="2.5" height="3" fill="#a80000"/><rect x="102.5" y="659" width="2.5" height="3" fill="#a80000"/><rect x="102.5" y="662" width="2.5" height="3" fill="#a80000"/><rect x="102.5" y="665" width="2.5" height="3" fill="#a80000"/><rect x="102.5" y="668" width="2.5" height="3" fill="#a80000"/><rect x="102.5" y="671" width="2.5" height="3" fill="#a80000"/><rect x="105.0" y="620" width="2.5" height="3" fill="#ff4c00"/><rect x="105.0" y="623" width="2.5" height="3" fill="#2effd1"/><rect x="105.0" y="626" width="2.5" height="3" fill="#e5ff1a"/><rect x="105.0" y="629" width="2.5" height="3" fill="#2effd1"/><rect x="105.0" y="632" width="2.5" height="3" fill="#a80000"/><rect x="105.0" y="635" width="2.5" height="3" fill="#a80000"/><rect x="105.0" y="638" width="2.5" height="3" fill="#a80000"/><rect x="105.0" y="641" width="2.5" height="3" fill="#a80000"/><rect x="105.0" y="644" width="2.5" height="3" fill="#a80000"/><rect x="105.0" y="647" width="2.5" height="3" fill="#00e5ff"/><rect x="105.0" y="650" width="2.5" height="3" fill="#00e5ff"/><rect x="105.0" y="653" width="2.5" height="3" fill="#a80000"/><rect x="105.0" y="656" width="2.5" height="3" fill="#a80000"/><rect x="105.0" y="659" width="2.5" height="3" fill="#a80000"/><rect x="105.0" y="662" width="2.5" height="3" fill="#a80000"/><rect x="105.0" y="665" width="2.5" height="3" fill="#a80000"/><rect x="105.0" y="668" width="2.5" height="3" fill="#a80000"/><rect x="105.0" y="671" width="2.5" height="3" fill="#a80000"/><rect x="105.0" y="674" width="2.5" height="0" fill="#a80000"/><rect x="107.5" y="623" width="2.5" height="3" fill="#ff8000"/><rect x="107.5" y="626" width="2.5" height="3" fill="#ffc700"/><rect x="107.5" y="629" width="2.5" height="3" fill="#2effd1"/><rect x="107.5" y="632" width="2.5" height="3" fill="#9e0000"/><rect x="107.5" y="635" width="2.5" height="3" fill="#9e0000"/><rect x="107.5" y="638" width="2.5" height="3" fill="#9e0000"/><rect x="107.5" y="641" width="2.5" height="3" fill="#9e0000"/><rect x="107.5" y="644" width="2.5" height="3" fill="#9e0000"/><rect x="107.5" y="647" width="2.5" height="3" fill="#9e0000"/><rect x="107.5" y="650" width="2.5" height="3" fill="#9e0000"/><rect x="107.5" y="653" width="2.5" height="3" fill="#9e0000"/><rect x="107.5" y="656" width="2.5" height="3" fill="#9e0000"/><rect x="107.5" y="659" width="2.5" height="3" fill="#9e0000"/><rect x="107.5" y="662" width="2.5" height="3" fill="#9e0000"/><rect x="107.5" y="665" width="2.5" height="3" fill="#9e0000"/><rect x="107.5" y="668" width="2.5" height="3" fill="#9e0000"/><rect x="107.5" y="671" width="2.5" height="3" fill="#9e0000"/><rect x="107.5" y="674" width="2.5" height="0" fill="#9e0000"/><rect x="110.0" y="622" width="2.5" height="3" fill="#ffb300"/><rect x="110.0" y="625" width="2.5" height="3" fill="#80ff80"/><rect x="110.0" y="628" width="2.5" height="3" fill="#2effd1"/><rect x="110.0" y="631" width="2.5" height="3" fill="#00e5ff"/><rect x="110.0" y="634" width="2.5" height="3" fill="#c70000"/><rect x="110.0" y="637" width="2.5" height="3" fill="#c70000"/><rect x="110.0" y="640" width="2.5" height="3" fill="#c70000"/><rect x="110.0" y="643" width="2.5" height="3" fill="#c70000"/><rect x="110.0" y="646" width="2.5" height="3" fill="#c70000"/><rect x="110.0" y="649" width="2.5" height="3" fill="#c70000"/><rect x="110.0" y="652" width="2.5" height="3" fill="#c70000"/><rect x="110.0" y="655" width="2.5" height="3" fill="#c70000"/><rect x="110.0" y="658" width="2.5" height="3" fill="#c70000"/><rect x="110.0" y="661" width="2.5" height="3" fill="#c70000"/><rect x="110.0" y="664" width="2.5" height="3" fill="#c70000"/><rect x="110.0" y="667" width="2.5" height="3" fill="#c70000"/><rect x="110.0" y="670" width="2.5" height="3" fill="#c70000"/><rect x="110.0" y="673" width="2.5" height="1" fill="#c70000"/><rect x="112.5" y="619" width="2.5" height="3" fill="#ffb300"/><rect x="112.5" y="622" width="2.5" height="3" fill="#e5ff1a"/><rect x="112.5" y="625" width="2.5" height="3" fill="#ffc700"/><rect x="112.5" y="628" width="2.5" height="3" fill="#80ff80"/><rect x="112.5" y="631" width="2.5" height="3" fill="#80ff80"/><rect x="112.5" y="634" width="2.5" height="3" fill="#9e0000"/><rect x="112.5" y="637" width="2.5" height="3" fill="#9e0000"/><rect x="112.5" y="640" width="2.5" height="3" fill="#9e0000"/><rect x="112.5" y="643" width="2.5" height="3" fill="#9e0000"/><rect x="112.5" y="646" width="2.5" height="3" fill="#9e0000"/><rect x="112.5" y="649" width="2.5" height="3" fill="#9e0000"/><rect x="112.5" y="652" width="2.5" height="3" fill="#9e0000"/><rect x="112.5" y="655" width="2.5" height="3" fill="#9e0000"/><rect x="112.5" y="658" width="2.5" height="3" fill="#9e0000"/><rect x="112.5" y="661" width="2.5" height="3" fill="#9e0000"/><rect x="112.5" y="664" width="2.5" height="3" fill="#9e0000"/><rect x="112.5" y="667" width="2.5" height="3" fill="#9e0000"/><rect x="112.5" y="670" width="2.5" height="3" fill="#9e0000"/><rect x="112.5" y="673" width="2.5" height="1" fill="#9e0000"/><rect x="115.0" y="622" width="2.5" height="3" fill="#ffb300"/><rect x="115.0" y="625" width="2.5" height="3" fill="#e5ff1a"/><rect x="115.0" y="628" width="2.5" height="3" fill="#2effd1"/><rect x="115.0" y="631" width="2.5" height="3" fill="#80ff80"/><rect x="115.0" y="634" width="2.5" height="3" fill="#ff1a00"/><rect x="115.0" y="637" width="2.5" height="3" fill="#ff1a00"/><rect x="115.0" y="640" width="2.5" height="3" fill="#ff1a00"/><rect x="115.0" y="643" width="2.5" height="3" fill="#ff1a00"/><rect x="115.0" y="646" width="2.5" height="3" fill="#ff1a00"/><rect x="115.0" y="649" width="2.5" height="3" fill="#ff1a00"/><rect x="115.0" y="652" width="2.5" height="3" fill="#ff1a00"/><rect x="115.0" y="655" width="2.5" height="3" fill="#ff1a00"/><rect x="115.0" y="658" width="2.5" height="3" fill="#ff1a00"/><rect x="115.0" y="661" width="2.5" height="3" fill="#ff1a00"/><rect x="115.0" y="664" width="2.5" height="3" fill="#ff1a00"/><rect x="115.0" y="667" width="2.5" height="3" fill="#ff1a00"/><rect x="115.0" y="670" width="2.5" height="3" fill="#ff1a00"/><rect x="115.0" y="673" width="2.5" height="1" fill="#ff1a00"/><rect x="117.5" y="622" width="2.5" height="3" fill="#ffb300"/><rect x="117.5" y="625" width="2.5" height="3" fill="#e5ff1a"/><rect x="117.5" y="628" width="2.5" height="3" fill="#e5ff1a"/><rect x="117.5" y="631" width="2.5" height="3" fill="#80ff80"/><rect x="117.5" y="634" width="2.5" height="3" fill="#00e5ff"/><rect x="117.5" y="637" width="2.5" height="3" fill="#a80000"/><rect x="117.5" y="640" width="2.5" height="3" fill="#a80000"/><rect x="117.5" y="643" width="2.5" height="3" fill="#a80000"/><rect x="117.5" y="646" width="2.5" height="3" fill="#a80000"/><rect x="117.5" y="649" width="2.5" height="3" fill="#a80000"/><rect x="117.5" y="652" width="2.5" height="3" fill="#a80000"/><rect x="117.5" y="655" width="2.5" height="3" fill="#a80000"/><rect x="117.5" y="658" width="2.5" height="3" fill="#a80000"/><rect x="117.5" y="661" width="2.5" height="3" fill="#a80000"/><rect x="117.5" y="664" width="2.5" height="3" fill="#a80000"/><rect x="117.5" y="667" width="2.5" height="3" fill="#a80000"/><rect x="117.5" y="670" width="2.5" height="3" fill="#a80000"/><rect x="117.5" y="673" width="2.5" height="1" fill="#a80000"/><rect x="120.0" y="618" width="2.5" height="3" fill="#ff4c00"/><rect x="120.0" y="621" width="2.5" height="3" fill="#ff1a00"/><rect x="120.0" y="624" width="2.5" height="3" fill="#ff1a00"/><rect x="120.0" y="627" width="2.5" height="3" fill="#ffc700"/><rect x="120.0" y="630" width="2.5" height="3" fill="#e5ff1a"/><rect x="120.0" y="633" width="2.5" height="3" fill="#2effd1"/><rect x="120.0" y="636" width="2.5" height="3" fill="#2effd1"/><rect x="120.0" y="639" width="2.5" height="3" fill="#00e5ff"/><rect x="120.0" y="642" width="2.5" height="3" fill="#ff1a00"/><rect x="120.0" y="645" width="2.5" height="3" fill="#ff1a00"/><rect x="120.0" y="648" width="2.5" height="3" fill="#ff1a00"/><rect x="120.0" y="651" width="2.5" height="3" fill="#ff1a00"/><rect x="120.0" y="654" width="2.5" height="3" fill="#ff1a00"/><rect x="120.0" y="657" width="2.5" height="3" fill="#ff1a00"/><rect x="120.0" y="660" width="2.5" height="3" fill="#ff1a00"/><rect x="120.0" y="663" width="2.5" height="3" fill="#ff1a00"/><rect x="120.0" y="666" width="2.5" height="3" fill="#ff1a00"/><rect x="120.0" y="669" width="2.5" height="3" fill="#ff1a00"/><rect x="120.0" y="672" width="2.5" height="2" fill="#ff1a00"/><rect x="122.5" y="618" width="2.5" height="3" fill="#ff8000"/><rect x="122.5" y="621" width="2.5" height="3" fill="#e50000"/><rect x="122.5" y="624" width="2.5" height="3" fill="#e50000"/><rect x="122.5" y="627" width="2.5" height="3" fill="#2effd1"/><rect x="122.5" y="630" width="2.5" height="3" fill="#ffc700"/><rect x="122.5" y="633" width="2.5" height="3" fill="#80ff80"/><rect x="122.5" y="636" width="2.5" height="3" fill="#2effd1"/><rect x="122.5" y="639" width="2.5" height="3" fill="#e5ff1a"/><rect x="122.5" y="642" width="2.5" height="3" fill="#80ff80"/><rect x="122.5" y="645" width="2.5" height="3" fill="#e50000"/><rect x="122.5" y="648" width="2.5" height="3" fill="#e50000"/><rect x="122.5" y="651" width="2.5" height="3" fill="#e50000"/><rect x="122.5" y="654" width="2.5" height="3" fill="#e50000"/><rect x="122.5" y="657" width="2.5" height="3" fill="#e50000"/><rect x="122.5" y="660" width="2.5" height="3" fill="#e50000"/><rect x="122.5" y="663" width="2.5" height="3" fill="#e50000"/><rect x="122.5" y="666" width="2.5" height="3" fill="#e50000"/><rect x="122.5" y="669" width="2.5" height="3" fill="#e50000"/><rect x="122.5" y="672" width="2.5" height="2" fill="#e50000"/><rect x="125.0" y="619" width="2.5" height="3" fill="#68ff97"/><rect x="125.0" y="622" width="2.5" height="1" fill="#a4ff5b"/><rect x="125.0" y="623" width="2.5" height="3" fill="#00c7ff"/><rect x="125.0" y="626" width="2.5" height="3" fill="#0061ff"/><rect x="125.0" y="629" width="2.5" height="2" fill="#004dff"/><rect x="125.0" y="631" width="2.5" height="2" fill="#e5ff1a"/><rect x="125.0" y="633" width="2.5" height="41" fill="#c70000"/><rect x="127.5" y="620" width="2.5" height="3" fill="#13ffec"/><rect x="127.5" y="623" width="2.5" height="1" fill="#7dff82"/><rect x="127.5" y="624" width="2.5" height="3" fill="#004dff"/><rect x="127.5" y="627" width="2.5" height="3" fill="#00c7ff"/><rect x="127.5" y="630" width="2.5" height="2" fill="#009eff"/><rect x="127.5" y="632" width="2.5" height="2" fill="#e5ff1a"/><rect x="127.5" y="634" width="2.5" height="40" fill="#e50000"/><rect x="130.0" y="620" width="2.5" height="3" fill="#5fffa0"/><rect x="130.0" y="623" width="2.5" height="2" fill="#90ff6f"/><rect x="130.0" y="625" width="2.5" height="3" fill="#001aff"/><rect x="130.0" y="628" width="2.5" height="3" fill="#004dff"/><rect x="130.0" y="631" width="2.5" height="2" fill="#0038ff"/><rect x="130.0" y="633" width="2.5" height="2" fill="#e5ff1a"/><rect x="130.0" y="635" width="2.5" height="39" fill="#ff3800"/><rect x="132.5" y="618" width="2.5" height="3" fill="#bbff44"/><rect x="132.5" y="621" width="2.5" height="3" fill="#acff53"/><rect x="132.5" y="624" width="2.5" height="3" fill="#0061ff"/><rect x="132.5" y="627" width="2.5" height="3" fill="#004dff"/><rect x="132.5" y="630" width="2.5" height="3" fill="#009eff"/><rect x="132.5" y="633" width="2.5" height="1" fill="#001aff"/><rect x="132.5" y="634" width="2.5" height="2" fill="#e5ff1a"/><rect x="132.5" y="636" width="2.5" height="38" fill="#fa0000"/><rect x="135.0" y="617" width="2.5" height="3" fill="#a0ff5f"/><rect x="135.0" y="620" width="2.5" height="3" fill="#66ff99"/><rect x="135.0" y="623" width="2.5" height="1" fill="#fffb00"/><rect x="135.0" y="624" width="2.5" height="3" fill="#001aff"/><rect x="135.0" y="627" width="2.5" height="3" fill="#0038ff"/><rect x="135.0" y="630" width="2.5" height="3" fill="#00c7ff"/><rect x="135.0" y="633" width="2.5" height="1" fill="#004dff"/><rect x="135.0" y="634" width="2.5" height="2" fill="#80ff80"/><rect x="135.0" y="636" width="2.5" height="38" fill="#fa0000"/><rect x="137.5" y="619" width="2.5" height="3" fill="#92ff6d"/><rect x="137.5" y="622" width="2.5" height="3" fill="#deff21"/><rect x="137.5" y="625" width="2.5" height="0" fill="#ffea00"/><rect x="137.5" y="625" width="2.5" height="3" fill="#0038ff"/><rect x="137.5" y="628" width="2.5" height="3" fill="#0038ff"/><rect x="137.5" y="631" width="2.5" height="3" fill="#00c7ff"/><rect x="137.5" y="634" width="2.5" height="2" fill="#80ff80"/><rect x="137.5" y="636" width="2.5" height="38" fill="#d10000"/><rect x="140.0" y="619" width="2.5" height="3" fill="#e6ff19"/><rect x="140.0" y="622" width="2.5" height="2" fill="#ffdf00"/><rect x="140.0" y="624" width="2.5" height="3" fill="#001aff"/><rect x="140.0" y="627" width="2.5" height="3" fill="#00c7ff"/><rect x="140.0" y="630" width="2.5" height="3" fill="#001aff"/><rect x="140.0" y="633" width="2.5" height="3" fill="#004dff"/><rect x="140.0" y="636" width="2.5" height="0" fill="#009eff"/><rect x="140.0" y="637" width="2.5" height="2" fill="#ffe500"/><rect x="140.0" y="639" width="2.5" height="35" fill="#9e0000"/><rect x="142.5" y="620" width="2.5" height="3" fill="#deff21"/><rect x="142.5" y="623" width="2.5" height="2" fill="#aaff55"/><rect x="142.5" y="624" width="2.5" height="3" fill="#004dff"/><rect x="142.5" y="627" width="2.5" height="3" fill="#009eff"/><rect x="142.5" y="630" width="2.5" height="3" fill="#00c7ff"/><rect x="142.5" y="633" width="2.5" height="3" fill="#0038ff"/><rect x="142.5" y="636" width="2.5" height="2" fill="#80ff80"/><rect x="142.5" y="638" width="2.5" height="36" fill="#d10000"/><rect x="145.0" y="617" width="2.5" height="3" fill="#c2ff3d"/><rect x="145.0" y="620" width="2.5" height="3" fill="#b2ff4d"/><rect x="145.0" y="623" width="2.5" height="2" fill="#5cffa3"/><rect x="145.0" y="626" width="2.5" height="3" fill="#009eff"/><rect x="145.0" y="628" width="2.5" height="3" fill="#0061ff"/><rect x="145.0" y="632" width="2.5" height="3" fill="#004dff"/><rect x="145.0" y="634" width="2.5" height="1" fill="#0061ff"/><rect x="145.0" y="636" width="2.5" height="2" fill="#80ff80"/><rect x="145.0" y="638" width="2.5" height="36" fill="#a80000"/><rect x="147.5" y="619" width="2.5" height="3" fill="#6dff92"/><rect x="147.5" y="622" width="2.5" height="2" fill="#62ff9d"/><rect x="147.5" y="625" width="2.5" height="3" fill="#00c7ff"/><rect x="147.5" y="628" width="2.5" height="3" fill="#00c7ff"/><rect x="147.5" y="631" width="2.5" height="3" fill="#00c7ff"/><rect x="147.5" y="634" width="2.5" height="3" fill="#0038ff"/><rect x="147.5" y="637" width="2.5" height="3" fill="#0061ff"/><rect x="147.5" y="639" width="2.5" height="2" fill="#80ff80"/><rect x="147.5" y="641" width="2.5" height="33" fill="#e50000"/><rect x="150.0" y="618" width="2.5" height="3" fill="#9bff64"/><rect x="150.0" y="621" width="2.5" height="3" fill="#68ff97"/><rect x="150.0" y="624" width="2.5" height="2" fill="#68ff97"/><rect x="150.0" y="626" width="2.5" height="3" fill="#00c7ff"/><rect x="150.0" y="629" width="2.5" height="3" fill="#0038ff"/><rect x="150.0" y="632" width="2.5" height="3" fill="#0038ff"/><rect x="150.0" y="635" width="2.5" height="3" fill="#0061ff"/><rect x="150.0" y="638" width="2.5" height="2" fill="#009eff"/><rect x="150.0" y="640" width="2.5" height="2" fill="#ffe500"/><rect x="150.0" y="642" width="2.5" height="34" fill="#d10000"/><rect x="152.5" y="616" width="2.5" height="3" fill="#ffc800"/><rect x="152.5" y="619" width="2.5" height="3" fill="#83ff7c"/><rect x="152.5" y="622" width="2.5" height="3" fill="#70ff8f"/><rect x="152.5" y="625" width="2.5" height="3" fill="#004dff"/><rect x="152.5" y="628" width="2.5" height="3" fill="#0061ff"/><rect x="152.5" y="631" width="2.5" height="3" fill="#001aff"/><rect x="152.5" y="634" width="2.5" height="3" fill="#00c7ff"/><rect x="152.5" y="637" width="2.5" height="1" fill="#004dff"/><rect x="152.5" y="638" width="2.5" height="2" fill="#80ff80"/><rect x="152.5" y="640" width="2.5" height="36" fill="#9e0000"/><rect x="155.0" y="613" width="2.5" height="3" fill="#3dffc2"/><rect x="155.0" y="616" width="2.5" height="3" fill="#b0ff4f"/><rect x="155.0" y="619" width="2.5" height="3" fill="#a6ff59"/><rect x="155.0" y="622" width="2.5" height="2" fill="#73ff8c"/><rect x="155.0" y="624" width="2.5" height="3" fill="#0038ff"/><rect x="155.0" y="627" width="2.5" height="3" fill="#009eff"/><rect x="155.0" y="630" width="2.5" height="3" fill="#009eff"/><rect x="155.0" y="633" width="2.5" height="3" fill="#009eff"/><rect x="155.0" y="636" width="2.5" height="1" fill="#0061ff"/><rect x="155.0" y="637" width="2.5" height="2" fill="#80ff80"/><rect x="155.0" y="639" width="2.5" height="37" fill="#ff3800"/><rect x="157.5" y="614" width="2.5" height="3" fill="#5cffa3"/><rect x="157.5" y="617" width="2.5" height="3" fill="#95ff6a"/><rect x="157.5" y="620" width="2.5" height="3" fill="#cfff30"/><rect x="157.5" y="623" width="2.5" height="2" fill="#6cff93"/><rect x="157.5" y="625" width="2.5" height="3" fill="#001aff"/><rect x="157.5" y="628" width="2.5" height="3" fill="#0038ff"/><rect x="157.5" y="631" width="2.5" height="3" fill="#009eff"/><rect x="157.5" y="634" width="2.5" height="3" fill="#004dff"/><rect x="157.5" y="637" width="2.5" height="0" fill="#0038ff"/><rect x="157.5" y="637" width="2.5" height="2" fill="#ffe500"/><rect x="157.5" y="639" width="2.5" height="37" fill="#9e0000"/><rect x="160.0" y="611" width="2.5" height="3" fill="#36ffc9"/><rect x="160.0" y="614" width="2.5" height="3" fill="#44ffbb"/><rect x="160.0" y="617" width="2.5" height="3" fill="#69ff96"/><rect x="160.0" y="620" width="2.5" height="3" fill="#ffe600"/><rect x="160.0" y="623" width="2.5" height="1" fill="#b4ff4b"/><rect x="160.0" y="624" width="2.5" height="3" fill="#0038ff"/><rect x="160.0" y="627" width="2.5" height="3" fill="#0038ff"/><rect x="160.0" y="630" width="2.5" height="3" fill="#004dff"/><rect x="160.0" y="633" width="2.5" height="3" fill="#00c7ff"/><rect x="160.0" y="636" width="2.5" height="1" fill="#009eff"/><rect x="160.0" y="638" width="2.5" height="2" fill="#e5ff1a"/><rect x="160.0" y="640" width="2.5" height="36" fill="#ff3800"/><rect x="162.5" y="612" width="2.5" height="3" fill="#25ffda"/><rect x="162.5" y="615" width="2.5" height="3" fill="#7fff80"/><rect x="162.5" y="618" width="2.5" height="3" fill="#a4ff5b"/><rect x="162.5" y="621" width="2.5" height="3" fill="#bfff40"/><rect x="162.5" y="624" width="2.5" height="3" fill="#f3ff0c"/><rect x="162.5" y="626" width="2.5" height="3" fill="#00c7ff"/><rect x="162.5" y="630" width="2.5" height="3" fill="#004dff"/><rect x="162.5" y="632" width="2.5" height="3" fill="#0061ff"/><rect x="162.5" y="636" width="2.5" height="3" fill="#009eff"/><rect x="162.5" y="638" width="2.5" height="2" fill="#009eff"/><rect x="162.5" y="641" width="2.5" height="2" fill="#80ff80"/><rect x="162.5" y="643" width="2.5" height="33" fill="#fa0000"/><rect x="165.0" y="613" width="2.5" height="3" fill="#34ffcb"/><rect x="165.0" y="616" width="2.5" height="3" fill="#c4ff3b"/><rect x="165.0" y="619" width="2.5" height="3" fill="#8eff71"/><rect x="165.0" y="622" width="2.5" height="3" fill="#c6ff39"/><rect x="165.0" y="625" width="2.5" height="3" fill="#004dff"/><rect x="165.0" y="628" width="2.5" height="3" fill="#009eff"/><rect x="165.0" y="631" width="2.5" height="3" fill="#0061ff"/><rect x="165.0" y="634" width="2.5" height="3" fill="#00c7ff"/><rect x="165.0" y="637" width="2.5" height="3" fill="#001aff"/><rect x="165.0" y="640" width="2.5" height="1" fill="#00c7ff"/><rect x="165.0" y="641" width="2.5" height="2" fill="#ffe500"/><rect x="165.0" y="643" width="2.5" height="33" fill="#a80000"/><rect x="167.5" y="612" width="2.5" height="3" fill="#4affb5"/><rect x="167.5" y="615" width="2.5" height="3" fill="#e6ff19"/><rect x="167.5" y="618" width="2.5" height="3" fill="#c0ff3f"/><rect x="167.5" y="621" width="2.5" height="3" fill="#62ff9d"/><rect x="167.5" y="624" width="2.5" height="3" fill="#ffbd00"/><rect x="167.5" y="627" width="2.5" height="0" fill="#fff100"/><rect x="167.5" y="627" width="2.5" height="3" fill="#001aff"/><rect x="167.5" y="630" width="2.5" height="3" fill="#001aff"/><rect x="167.5" y="633" width="2.5" height="3" fill="#001aff"/><rect x="167.5" y="636" width="2.5" height="3" fill="#0038ff"/><rect x="167.5" y="639" width="2.5" height="0" fill="#0038ff"/><rect x="167.5" y="639" width="2.5" height="2" fill="#80ff80"/><rect x="167.5" y="641" width="2.5" height="35" fill="#9e0000"/><rect x="170.0" y="610" width="2.5" height="3" fill="#7bff84"/><rect x="170.0" y="613" width="2.5" height="3" fill="#62ff9d"/><rect x="170.0" y="616" width="2.5" height="3" fill="#9dff62"/><rect x="170.0" y="619" width="2.5" height="3" fill="#a9ff56"/><rect x="170.0" y="622" width="2.5" height="3" fill="#acff53"/><rect x="170.0" y="625" width="2.5" height="2" fill="#b2ff4d"/><rect x="170.0" y="627" width="2.5" height="3" fill="#001aff"/><rect x="170.0" y="630" width="2.5" height="3" fill="#009eff"/><rect x="170.0" y="633" width="2.5" height="3" fill="#009eff"/><rect x="170.0" y="636" width="2.5" height="3" fill="#0061ff"/><rect x="170.0" y="639" width="2.5" height="2" fill="#00c7ff"/><rect x="170.0" y="641" width="2.5" height="2" fill="#e5ff1a"/><rect x="170.0" y="643" width="2.5" height="33" fill="#c70000"/><rect x="172.5" y="610" width="2.5" height="3" fill="#5effa1"/><rect x="172.5" y="613" width="2.5" height="3" fill="#6eff91"/><rect x="172.5" y="616" width="2.5" height="3" fill="#27ffd8"/><rect x="172.5" y="619" width="2.5" height="3" fill="#ccff33"/><rect x="172.5" y="622" width="2.5" height="3" fill="#b0ff4f"/><rect x="172.5" y="625" width="2.5" height="3" fill="#2bffd4"/><rect x="172.5" y="627" width="2.5" height="3" fill="#0038ff"/><rect x="172.5" y="630" width="2.5" height="3" fill="#0038ff"/><rect x="172.5" y="633" width="2.5" height="3" fill="#004dff"/><rect x="172.5" y="636" width="2.5" height="3" fill="#0038ff"/><rect x="172.5" y="639" width="2.5" height="0" fill="#001aff"/><rect x="172.5" y="639" width="2.5" height="2" fill="#e5ff1a"/><rect x="172.5" y="641" width="2.5" height="35" fill="#ff3800"/><rect x="175.0" y="610" width="2.5" height="3" fill="#92ff6d"/><rect x="175.0" y="613" width="2.5" height="3" fill="#c4ff3b"/><rect x="175.0" y="616" width="2.5" height="3" fill="#52ffad"/><rect x="175.0" y="619" width="2.5" height="3" fill="#3cffc3"/><rect x="175.0" y="622" width="2.5" height="3" fill="#7dff82"/><rect x="175.0" y="625" width="2.5" height="3" fill="#ffff00"/><rect x="175.0" y="627" width="2.5" height="3" fill="#00c7ff"/><rect x="175.0" y="630" width="2.5" height="3" fill="#0061ff"/><rect x="175.0" y="633" width="2.5" height="3" fill="#001aff"/><rect x="175.0" y="636" width="2.5" height="3" fill="#0061ff"/><rect x="175.0" y="639" width="2.5" height="1" fill="#0038ff"/><rect x="175.0" y="640" width="2.5" height="2" fill="#e5ff1a"/><rect x="175.0" y="642" width="2.5" height="34" fill="#fa0000"/><rect x="177.5" y="612" width="2.5" height="3" fill="#f7ff08"/><rect x="177.5" y="615" width="2.5" height="3" fill="#b8ff47"/><rect x="177.5" y="618" width="2.5" height="3" fill="#6fff90"/><rect x="177.5" y="621" width="2.5" height="3" fill="#20ffdf"/><rect x="177.5" y="624" width="2.5" height="3" fill="#c5ff3a"/><rect x="177.5" y="626" width="2.5" height="3" fill="#001aff"/><rect x="177.5" y="630" width="2.5" height="3" fill="#0061ff"/><rect x="177.5" y="632" width="2.5" height="3" fill="#0061ff"/><rect x="177.5" y="636" width="2.5" height="3" fill="#0061ff"/><rect x="177.5" y="638" width="2.5" height="0" fill="#001aff"/><rect x="177.5" y="639" width="2.5" height="2" fill="#ffe500"/><rect x="177.5" y="641" width="2.5" height="35" fill="#9e0000"/><rect x="180.0" y="609" width="2.5" height="3" fill="#82ff7d"/><rect x="180.0" y="612" width="2.5" height="3" fill="#ffbc00"/><rect x="180.0" y="615" width="2.5" height="3" fill="#ffd000"/><rect x="180.0" y="618" width="2.5" height="3" fill="#82ff7d"/><rect x="180.0" y="621" width="2.5" height="3" fill="#1fffe0"/><rect x="180.0" y="624" width="2.5" height="3" fill="#00feff"/><rect x="180.0" y="627" width="2.5" height="0" fill="#adff52"/><rect x="180.0" y="628" width="2.5" height="3" fill="#001aff"/><rect x="180.0" y="631" width="2.5" height="3" fill="#004dff"/><rect x="180.0" y="634" width="2.5" height="3" fill="#0061ff"/><rect x="180.0" y="637" width="2.5" height="3" fill="#0061ff"/><rect x="180.0" y="640" width="2.5" height="1" fill="#009eff"/><rect x="180.0" y="641" width="2.5" height="2" fill="#ffe500"/><rect x="180.0" y="643" width="2.5" height="33" fill="#a80000"/><rect x="182.5" y="611" width="2.5" height="3" fill="#7eff81"/><rect x="182.5" y="614" width="2.5" height="3" fill="#d4ff2b"/><rect x="182.5" y="617" width="2.5" height="3" fill="#d9ff26"/><rect x="182.5" y="620" width="2.5" height="3" fill="#75ff8a"/><rect x="182.5" y="623" width="2.5" height="3" fill="#99ff66"/><rect x="182.5" y="626" width="2.5" height="0" fill="#ccff33"/><rect x="182.5" y="627" width="2.5" height="3" fill="#004dff"/><rect x="182.5" y="630" width="2.5" height="3" fill="#001aff"/><rect x="182.5" y="633" width="2.5" height="3" fill="#00c7ff"/><rect x="182.5" y="636" width="2.5" height="3" fill="#0038ff"/><rect x="182.5" y="639" width="2.5" height="2" fill="#004dff"/><rect x="182.5" y="641" width="2.5" height="2" fill="#80ff80"/><rect x="182.5" y="643" width="2.5" height="33" fill="#e50000"/><rect x="185.0" y="609" width="2.5" height="3" fill="#a8ff57"/><rect x="185.0" y="612" width="2.5" height="3" fill="#3effc1"/><rect x="185.0" y="615" width="2.5" height="3" fill="#dbff24"/><rect x="185.0" y="618" width="2.5" height="3" fill="#adff52"/><rect x="185.0" y="621" width="2.5" height="3" fill="#9cff63"/><rect x="185.0" y="624" width="2.5" height="2" fill="#c8ff37"/><rect x="185.0" y="626" width="2.5" height="3" fill="#004dff"/><rect x="185.0" y="629" width="2.5" height="3" fill="#0061ff"/><rect x="185.0" y="632" width="2.5" height="3" fill="#0038ff"/><rect x="185.0" y="635" width="2.5" height="3" fill="#009eff"/><rect x="185.0" y="638" width="2.5" height="3" fill="#0061ff"/><rect x="185.0" y="641" width="2.5" height="1" fill="#0061ff"/><rect x="185.0" y="642" width="2.5" height="2" fill="#80ff80"/><rect x="185.0" y="644" width="2.5" height="32" fill="#fa0000"/><rect x="187.5" y="609" width="2.5" height="3" fill="#f7ff08"/><rect x="187.5" y="612" width="2.5" height="3" fill="#bbff44"/><rect x="187.5" y="615" width="2.5" height="3" fill="#bfff40"/><rect x="187.5" y="618" width="2.5" height="3" fill="#88ff77"/><rect x="187.5" y="621" width="2.5" height="3" fill="#55ffaa"/><rect x="187.5" y="624" width="2.5" height="3" fill="#28ffd7"/><rect x="187.5" y="627" width="2.5" height="1" fill="#1cffe3"/><rect x="187.5" y="628" width="2.5" height="3" fill="#0038ff"/><rect x="187.5" y="631" width="2.5" height="3" fill="#004dff"/><rect x="187.5" y="634" width="2.5" height="3" fill="#0038ff"/><rect x="187.5" y="637" width="2.5" height="3" fill="#001aff"/><rect x="187.5" y="640" width="2.5" height="0" fill="#004dff"/><rect x="187.5" y="640" width="2.5" height="2" fill="#ffe500"/><rect x="187.5" y="642" width="2.5" height="34" fill="#d10000"/><rect x="190.0" y="612" width="2.5" height="3" fill="#edff12"/><rect x="190.0" y="615" width="2.5" height="3" fill="#86ff79"/><rect x="190.0" y="618" width="2.5" height="3" fill="#76ff89"/><rect x="190.0" y="621" width="2.5" height="3" fill="#67ff98"/><rect x="190.0" y="624" width="2.5" height="3" fill="#3fffc0"/><rect x="190.0" y="627" width="2.5" height="1" fill="#68ff97"/><rect x="190.0" y="629" width="2.5" height="3" fill="#faff05"/><rect x="190.0" y="632" width="2.5" height="3" fill="#80ff80"/><rect x="190.0" y="635" width="2.5" height="3" fill="#80ff80"/><rect x="190.0" y="638" width="2.5" height="2" fill="#80ff80"/><rect x="190.0" y="640" width="2.5" height="36" fill="#9e0000"/><rect x="192.5" y="610" width="2.5" height="3" fill="#e8ff17"/><rect x="192.5" y="613" width="2.5" height="3" fill="#e6ff19"/><rect x="192.5" y="616" width="2.5" height="3" fill="#3bffc4"/><rect x="192.5" y="619" width="2.5" height="3" fill="#80ff7f"/><rect x="192.5" y="622" width="2.5" height="3" fill="#74ff8b"/><rect x="192.5" y="625" width="2.5" height="3" fill="#7bff84"/><rect x="192.5" y="628" width="2.5" height="0" fill="#ccff33"/><rect x="192.5" y="628" width="2.5" height="3" fill="#faff05"/><rect x="192.5" y="632" width="2.5" height="3" fill="#faff05"/><rect x="192.5" y="634" width="2.5" height="3" fill="#d1ff2e"/><rect x="192.5" y="638" width="2.5" height="2" fill="#80ff80"/><rect x="192.5" y="640" width="2.5" height="2" fill="#80ff80"/><rect x="192.5" y="642" width="2.5" height="34" fill="#d10000"/><rect x="195.0" y="610" width="2.5" height="3" fill="#cfff30"/><rect x="195.0" y="613" width="2.5" height="3" fill="#94ff6b"/><rect x="195.0" y="616" width="2.5" height="3" fill="#66ff99"/><rect x="195.0" y="619" width="2.5" height="3" fill="#baff45"/><rect x="195.0" y="622" width="2.5" height="3" fill="#d2ff2d"/><rect x="195.0" y="625" width="2.5" height="3" fill="#e9ff16"/><rect x="195.0" y="628" width="2.5" height="1" fill="#ffdd00"/><rect x="195.0" y="629" width="2.5" height="3" fill="#faff05"/><rect x="195.0" y="632" width="2.5" height="3" fill="#80ff80"/><rect x="195.0" y="635" width="2.5" height="3" fill="#80ff80"/><rect x="195.0" y="638" width="2.5" height="2" fill="#80ff80"/><rect x="195.0" y="640" width="2.5" height="36" fill="#9e0000"/><rect x="197.5" y="612" width="2.5" height="3" fill="#c4ff3b"/><rect x="197.5" y="615" width="2.5" height="3" fill="#b5ff4a"/><rect x="197.5" y="618" width="2.5" height="3" fill="#a5ff5a"/><rect x="197.5" y="621" width="2.5" height="3" fill="#a2ff5d"/><rect x="197.5" y="624" width="2.5" height="3" fill="#cbff34"/><rect x="197.5" y="627" width="2.5" height="3" fill="#ffe900"/><rect x="197.5" y="630" width="2.5" height="2" fill="#ffdf00"/><rect x="197.5" y="632" width="2.5" height="3" fill="#ffb300"/><rect x="197.5" y="635" width="2.5" height="0" fill="#faff05"/><rect x="197.5" y="636" width="2.5" height="2" fill="#80ff80"/><rect x="197.5" y="638" width="2.5" height="38" fill="#a80000"/><rect x="200.0" y="612" width="2.5" height="3" fill="#f4ff0b"/><rect x="200.0" y="615" width="2.5" height="3" fill="#f4ff0b"/><rect x="200.0" y="618" width="2.5" height="3" fill="#69ff96"/><rect x="200.0" y="621" width="2.5" height="3" fill="#00e9ff"/><rect x="200.0" y="624" width="2.5" height="3" fill="#30ffcf"/><rect x="200.0" y="627" width="2.5" height="3" fill="#9cff63"/><rect x="200.0" y="630" width="2.5" height="1" fill="#b9ff46"/><rect x="200.0" y="631" width="2.5" height="45" fill="#d10000"/><rect x="202.5" y="612" width="2.5" height="3" fill="#22ffdd"/><rect x="202.5" y="615" width="2.5" height="3" fill="#65ff9a"/><rect x="202.5" y="618" width="2.5" height="3" fill="#6aff95"/><rect x="202.5" y="621" width="2.5" height="3" fill="#68ff97"/><rect x="202.5" y="624" width="2.5" height="3" fill="#84ff7b"/><rect x="202.5" y="627" width="2.5" height="3" fill="#7cff83"/><rect x="202.5" y="630" width="2.5" height="1" fill="#5affa5"/><rect x="202.5" y="631" width="2.5" height="45" fill="#c70000"/><rect x="205.0" y="607" width="2.5" height="4" fill="#00e5ff"/><rect x="205.0" y="611" width="2.5" height="3" fill="#00dbff"/><rect x="205.0" y="614" width="2.5" height="3" fill="#02fffd"/><rect x="205.0" y="617" width="2.5" height="3" fill="#47ffb8"/><rect x="205.0" y="620" width="2.5" height="3" fill="#a5ff5a"/><rect x="205.0" y="623" width="2.5" height="3" fill="#a3ff5c"/><rect x="205.0" y="626" width="2.5" height="3" fill="#7fff80"/><rect x="205.0" y="629" width="2.5" height="47" fill="#a80000"/><rect x="207.5" y="607" width="2.5" height="7" fill="#e5ff1a"/><rect x="207.5" y="614" width="2.5" height="3" fill="#2bffd4"/><rect x="207.5" y="617" width="2.5" height="3" fill="#53ffac"/><rect x="207.5" y="620" width="2.5" height="3" fill="#bfff40"/><rect x="207.5" y="623" width="2.5" height="3" fill="#82ff7d"/><rect x="207.5" y="626" width="2.5" height="3" fill="#59ffa6"/><rect x="207.5" y="629" width="2.5" height="0" fill="#34ffcb"/><rect x="207.5" y="630" width="2.5" height="46" fill="#d10000"/><rect x="210.0" y="614" width="2.5" height="3" fill="#41ffbe"/><rect x="210.0" y="617" width="2.5" height="3" fill="#6bff94"/><rect x="210.0" y="620" width="2.5" height="3" fill="#83ff7c"/><rect x="210.0" y="623" width="2.5" height="3" fill="#3dffc2"/><rect x="210.0" y="626" width="2.5" height="0" fill="#57ffa8"/><rect x="210.0" y="626" width="2.5" height="50" fill="#fa0000"/><rect x="212.5" y="612" width="2.5" height="3" fill="#1effe1"/><rect x="212.5" y="615" width="2.5" height="3" fill="#80ff7f"/><rect x="212.5" y="618" width="2.5" height="3" fill="#6cff93"/><rect x="212.5" y="621" width="2.5" height="3" fill="#39ffc6"/><rect x="212.5" y="624" width="2.5" height="3" fill="#00f1ff"/><rect x="212.5" y="627" width="2.5" height="0" fill="#9bff64"/><rect x="212.5" y="627" width="2.5" height="49" fill="#fa0000"/><rect x="215.0" y="610" width="2.5" height="3" fill="#99ff66"/><rect x="215.0" y="613" width="2.5" height="3" fill="#76ff89"/><rect x="215.0" y="616" width="2.5" height="3" fill="#e0ff1f"/><rect x="215.0" y="619" width="2.5" height="3" fill="#72ff8d"/><rect x="215.0" y="622" width="2.5" height="3" fill="#63ff9c"/><rect x="215.0" y="625" width="2.5" height="51" fill="#e50000"/><rect x="217.5" y="605" width="2.5" height="6" fill="#00e5ff"/><rect x="217.5" y="611" width="2.5" height="3" fill="#89ff76"/><rect x="217.5" y="614" width="2.5" height="3" fill="#98ff67"/><rect x="217.5" y="617" width="2.5" height="3" fill="#a3ff5c"/><rect x="217.5" y="620" width="2.5" height="3" fill="#32ffcd"/><rect x="217.5" y="623" width="2.5" height="3" fill="#86ff79"/><rect x="217.5" y="626" width="2.5" height="50" fill="#ff3800"/><rect x="220.0" y="610" width="2.5" height="3" fill="#c0ff3f"/><rect x="220.0" y="613" width="2.5" height="3" fill="#7fff80"/><rect x="220.0" y="616" width="2.5" height="3" fill="#40ffbf"/><rect x="220.0" y="619" width="2.5" height="3" fill="#00daff"/><rect x="220.0" y="622" width="2.5" height="3" fill="#47ffb8"/><rect x="220.0" y="625" width="2.5" height="51" fill="#e50000"/><rect x="222.5" y="611" width="2.5" height="3" fill="#53ffac"/><rect x="222.5" y="614" width="2.5" height="3" fill="#1dffe2"/><rect x="222.5" y="617" width="2.5" height="3" fill="#00e5ff"/><rect x="222.5" y="620" width="2.5" height="3" fill="#00c1ff"/><rect x="222.5" y="623" width="2.5" height="1" fill="#48ffb7"/><rect x="222.5" y="624" width="2.5" height="52" fill="#9e0000"/><rect x="225.0" y="610" width="2.5" height="3" fill="#4affb5"/><rect x="225.0" y="613" width="2.5" height="3" fill="#34ffcb"/><rect x="225.0" y="616" width="2.5" height="3" fill="#00e6ff"/><rect x="225.0" y="619" width="2.5" height="3" fill="#00dfff"/><rect x="225.0" y="622" width="2.5" height="2" fill="#06fff9"/><rect x="225.0" y="624" width="2.5" height="52" fill="#a80000"/><rect x="227.5" y="609" width="2.5" height="4" fill="#00e5ff"/><rect x="227.5" y="613" width="2.5" height="3" fill="#9eff61"/><rect x="227.5" y="616" width="2.5" height="3" fill="#92ff6d"/><rect x="227.5" y="619" width="2.5" height="3" fill="#87ff78"/><rect x="227.5" y="622" width="2.5" height="1" fill="#4affb5"/><rect x="227.5" y="623" width="2.5" height="53" fill="#a80000"/><rect x="230.0" y="613" width="2.5" height="3" fill="#52ffad"/><rect x="230.0" y="616" width="2.5" height="3" fill="#89ff76"/><rect x="230.0" y="619" width="2.5" height="3" fill="#3affc5"/><rect x="230.0" y="622" width="2.5" height="2" fill="#35ffca"/><rect x="230.0" y="624" width="2.5" height="52" fill="#9e0000"/><rect x="232.5" y="610" width="2.5" height="3" fill="#23ffdc"/><rect x="232.5" y="613" width="2.5" height="3" fill="#00feff"/><rect x="232.5" y="616" width="2.5" height="3" fill="#71ff8e"/><rect x="232.5" y="619" width="2.5" height="3" fill="#00e6ff"/><rect x="232.5" y="622" width="2.5" height="3" fill="#1effe1"/><rect x="232.5" y="625" width="2.5" height="0" fill="#70ff8f"/><rect x="232.5" y="625" width="2.5" height="51" fill="#ff3800"/><rect x="235.0" y="609" width="2.5" height="5" fill="#1affe5"/><rect x="235.0" y="614" width="2.5" height="3" fill="#00e0ff"/><rect x="235.0" y="617" width="2.5" height="3" fill="#00f1ff"/><rect x="235.0" y="620" width="2.5" height="3" fill="#39ffc6"/><rect x="235.0" y="623" width="2.5" height="0" fill="#04fffb"/><rect x="235.0" y="623" width="2.5" height="53" fill="#9e0000"/><rect x="237.5" y="607" width="2.5" height="3" fill="#00e5ff"/><rect x="237.5" y="610" width="2.5" height="3" fill="#44ffbb"/><rect x="237.5" y="613" width="2.5" height="3" fill="#18ffe7"/><rect x="237.5" y="616" width="2.5" height="3" fill="#01fffe"/><rect x="237.5" y="619" width="2.5" height="3" fill="#47ffb8"/><rect x="237.5" y="622" width="2.5" height="1" fill="#1effe1"/><rect x="237.5" y="623" width="2.5" height="53" fill="#d10000"/><rect x="240.0" y="607" width="2.5" height="6" fill="#1affe5"/><rect x="240.0" y="613" width="2.5" height="3" fill="#a1ff5e"/><rect x="240.0" y="616" width="2.5" height="3" fill="#79ff86"/><rect x="240.0" y="619" width="2.5" height="3" fill="#65ff9a"/><rect x="240.0" y="622" width="2.5" height="3" fill="#2affd5"/><rect x="240.0" y="625" width="2.5" height="51" fill="#9e0000"/><rect x="242.5" y="608" width="2.5" height="5" fill="#00b2ff"/><rect x="242.5" y="613" width="2.5" height="3" fill="#62ff9d"/><rect x="242.5" y="616" width="2.5" height="3" fill="#ccff33"/><rect x="242.5" y="619" width="2.5" height="3" fill="#40ffbf"/><rect x="242.5" y="622" width="2.5" height="1" fill="#17ffe8"/><rect x="242.5" y="623" width="2.5" height="53" fill="#c70000"/><rect x="245.0" y="606" width="2.5" height="7" fill="#00e5ff"/><rect x="245.0" y="613" width="2.5" height="3" fill="#48ffb7"/><rect x="245.0" y="616" width="2.5" height="3" fill="#ddff22"/><rect x="245.0" y="619" width="2.5" height="3" fill="#42ffbd"/><rect x="245.0" y="622" width="2.5" height="2" fill="#1bffe4"/><rect x="245.0" y="624" width="2.5" height="52" fill="#9e0000"/><rect x="247.5" y="611" width="2.5" height="3" fill="#3dffc2"/><rect x="247.5" y="614" width="2.5" height="3" fill="#5fffa0"/><rect x="247.5" y="617" width="2.5" height="3" fill="#76ff89"/><rect x="247.5" y="620" width="2.5" height="3" fill="#aeff51"/><rect x="247.5" y="623" width="2.5" height="1" fill="#2cffd3"/><rect x="247.5" y="624" width="2.5" height="52" fill="#d10000"/><rect x="250.0" y="613" width="2.5" height="3" fill="#81ff7e"/><rect x="250.0" y="616" width="2.5" height="3" fill="#6aff95"/><rect x="250.0" y="619" width="2.5" height="3" fill="#b9ff46"/><rect x="250.0" y="622" width="2.5" height="0" fill="#62ff9d"/><rect x="250.0" y="622" width="2.5" height="54" fill="#9e0000"/><rect x="252.5" y="612" width="2.5" height="3" fill="#b4ff4b"/><rect x="252.5" y="615" width="2.5" height="3" fill="#7dff82"/><rect x="252.5" y="618" width="2.5" height="3" fill="#a5ff5a"/><rect x="252.5" y="621" width="2.5" height="2" fill="#b1ff4e"/><rect x="252.5" y="623" width="2.5" height="53" fill="#c70000"/><rect x="255.0" y="612" width="1.0" height="3" fill="#9aff65"/><rect x="255.0" y="615" width="1.0" height="3" fill="#ccff33"/><rect x="255.0" y="618" width="1.0" height="3" fill="#b7ff48"/><rect x="255.0" y="621" width="1.0" height="2" fill="#7bff84"/><rect x="255.0" y="623" width="1.0" height="53" fill="#a80000"/><rect x="45" y="682" width="302" height="4" fill="#000"/><path d="M39 526.5h6M39 536.5h6M39 548.5h6M39 560.5h6M39 572.5h6M39 584.5h6M39 596.5h6M39 608.5h6M39 620.5h6M39 632.5h6M39 644.5h6M39 656.5h6M39 668.5h6M39 678.5h6" stroke="#000" stroke-width="1" fill="none" shape-rendering="crispEdges"/><path d="M45.5 686v10.5M70.5 686v5.5M95.5 686v10.5M120.5 686v5.5M145.5 686v10.5M171.5 686v5.5M196.5 686v10.5M221.5 686v5.5M246.5 686v10.5M271.5 686v5.5M296.5 686v10.5M321.5 686v5.5M346.5 686v10.5" stroke="#000" stroke-width="1" fill="none" shape-rendering="crispEdges"/><rect x="350" y="524" width="6" height="166" fill="url(#jet)" /><path d="M357 526.5h6M357 551.5h6M357 578.5h6M357 605.5h6M357 632.5h6M357 659.5h6M357 682.5h6" stroke="#000" stroke-width="1" fill="none" shape-rendering="crispEdges"/><rect x="437" y="20" width="302" height="133" fill="#000" /><path d="M437 146 L437 88 L439 88 L439 93 L443 93 L443 91 L445 91 L445 90 L447 90 L447 94 L450 94 L450 85 L452 85 L452 88 L456 88 L456 85 L460 85 L460 87 L462 87 L462 88 L464 88 L464 85 L468 85 L468 89 L470 89 L470 91 L472 91 L472 92 L474 92 L474 92 L478 92 L478 90 L482 90 L482 87 L486 87 L486 90 L490 90 L490 91 L493 91 L493 90 L495 90 L495 91 L499 91 L499 88 L502 88 L502 91 L506 91 L506 91 L509 91 L509 87 L513 87 L513 90 L516 90 L516 85 L520 85 L520 90 L522 90 L522 93 L524 93 L524 92 L526 92 L526 93 L528 93 L528 91 L530 91 L530 91 L533 91 L533 92 L535 92 L535 90 L539 90 L539 91 L543 91 L543 90 L546 90 L546 90 L550 90 L550 91 L552 91 L552 92 L556 92 L556 87 L558 87 L558 89 L560 89 L560 87 L563 87 L563 85 L566 85 L566 85 L568 85 L568 89 L571 89 L571 89 L573 89 L573 90 L575 90 L575 88 L579 88 L579 92 L582 92 L582 91 L584 91 L584 93 L587 93 L587 93 L589 93 L589 87 L593 87 L593 94 L597 94 L597 91 L599 91 L599 90 L602 90 L602 87 L604 87 L604 92 L608 92 L608 92 L611 92 L611 85 L614 85 L614 89 L618 89 L618 90 L621 90 L621 89 L625 89 L625 90 L627 90 L627 89 L630 89 L630 94 L633 94 L633 91 L634 91 L634 86 L635 86 L635 93.8 L648 93.8 L648 63 L655 64.5 L658 67.5 L661 70 L664 73 L666 73 L667 75 L668 80 L669 83 L672 85 L675 86.5 L677 86 L684 85 L690 86 L694 87 L699 84 L702 80 L705 76 L706 73.5 L712 71 L716 72 L720 74 L723 75 L728 75 L732 73.5 L735 72 L737 78 L739 79.5 L739 146 Z" fill="#fff"/><path d="M673 85 L700 84 L703 88 L703 92.5 L700 92 L694 90.5 L690 89.5 L684 90 L677 91.5 L673 90 Z" fill="#000"/><path d="M672 85 L700 84 L699 84 L694 70 L688 68 L686 78 L680 79 L678 73 L672 80 Z" fill="#000"/><rect x="678" y="73" width="3" height="6" fill="#fff"/><rect x="678" y="79" width="15" height="2" fill="#fff"/><rect x="688" y="68" width="5" height="12" fill="#fff"/><rect x="680" y="81" width="2" height="4" fill="#fff"/><rect x="708" y="74" width="4" height="1.2" fill="#000"/><rect x="722" y="76" width="5" height="1.2" fill="#000"/><rect x="728" y="79" width="3" height="1.2" fill="#000"/><rect x="736" y="80" width="3" height="2" fill="#000"/><rect x="696" y="39" width="2" height="1.5" fill="#fff"/><rect x="437" y="143.8" width="55" height="1.2" fill="#000"/><rect x="499" y="143.8" width="4" height="1.2" fill="#000"/><rect x="509" y="143.8" width="4" height="1.2" fill="#000"/><rect x="518" y="143.8" width="4" height="1.2" fill="#000"/><rect x="526" y="143.8" width="4" height="1.2" fill="#000"/><rect x="533" y="143.8" width="4" height="1.2" fill="#000"/><rect x="541" y="143.8" width="4" height="1.2" fill="#000"/><rect x="549" y="143.8" width="4" height="1.2" fill="#000"/><rect x="557" y="143.8" width="4" height="1.2" fill="#000"/><rect x="600" y="143.8" width="80" height="1.2" fill="#000"/><rect x="437" y="146" width="302" height="6.5" fill="#000"/><rect x="535" y="109.5" width="2" height="2" fill="#000"/><path d="M431 22.5h6M431 47.5h6M431 74.5h6M431 101.5h6M431 128.5h6M431 154.5h6" stroke="#000" stroke-width="1" fill="none" shape-rendering="crispEdges"/><path d="M437.5 152.5v10.5M462.5 152.5v5.5M487.5 152.5v10.5M512.5 152.5v5.5M538.5 152.5v10.5M563.5 152.5v5.5M588.5 152.5v10.5M613.5 152.5v5.5M638.5 152.5v10.5M663.5 152.5v5.5M688.5 152.5v10.5M713.5 152.5v5.5M738.5 152.5v10.5" stroke="#000" stroke-width="1" fill="none" shape-rendering="crispEdges"/><rect x="437" y="198" width="302" height="133" fill="#000" /><defs><linearGradient id="lw0" x1="0" y1="0" x2="0" y2="1"><stop offset="0" stop-color="#100000"/><stop offset="0.12" stop-color="#240000"/><stop offset="0.85" stop-color="#240000"/><stop offset="1" stop-color="#310000"/></linearGradient><linearGradient id="lw1" x1="0" y1="0" x2="0" y2="1"><stop offset="0" stop-color="#1a0000"/><stop offset="0.12" stop-color="#3b0000"/><stop offset="0.85" stop-color="#3b0000"/><stop offset="1" stop-color="#4f0000"/></linearGradient><linearGradient id="lw2" x1="0" y1="0" x2="0" y2="1"><stop offset="0" stop-color="#160000"/><stop offset="0.12" stop-color="#320000"/><stop offset="0.85" stop-color="#320000"/><stop offset="1" stop-color="#430000"/></linearGradient><linearGradient id="lw3" x1="0" y1="0" x2="0" y2="1"><stop offset="0" stop-color="#1b0000"/><stop offset="0.12" stop-color="#3c0000"/><stop offset="0.85" stop-color="#3c0000"/><stop offset="1" stop-color="#510000"/></linearGradient><linearGradient id="lw4" x1="0" y1="0" x2="0" y2="1"><stop offset="0" stop-color="#0e0000"/><stop offset="0.12" stop-color="#200000"/><stop offset="0.85" stop-color="#200000"/><stop offset="1" stop-color="#2b0000"/></linearGradient><linearGradient id="lw5" x1="0" y1="0" x2="0" y2="1"><stop offset="0" stop-color="#1c0000"/><stop offset="0.12" stop-color="#3e0000"/><stop offset="0.85" stop-color="#3e0000"/><stop offset="1" stop-color="#530000"/></linearGradient><linearGradient id="lw6" x1="0" y1="0" x2="0" y2="1"><stop offset="0" stop-color="#1a0000"/><stop offset="0.12" stop-color="#3a0000"/><stop offset="0.85" stop-color="#3a0000"/><stop offset="1" stop-color="#4f0000"/></linearGradient><linearGradient id="lw7" x1="0" y1="0" x2="0" y2="1"><stop offset="0" stop-color="#180000"/><stop offset="0.12" stop-color="#350000"/><stop offset="0.85" stop-color="#350000"/><stop offset="1" stop-color="#480000"/></linearGradient><linearGradient id="lw8" x1="0" y1="0" x2="0" y2="1"><stop offset="0" stop-color="#1b0000"/><stop offset="0.12" stop-color="#3b0000"/><stop offset="0.85" stop-color="#3b0000"/><stop offset="1" stop-color="#500000"/></linearGradient><linearGradient id="lw9" x1="0" y1="0" x2="0" y2="1"><stop offset="0" stop-color="#0e0000"/><stop offset="0.12" stop-color="#1f0000"/><stop offset="0.85" stop-color="#1f0000"/><stop offset="1" stop-color="#2a0000"/></linearGradient><linearGradient id="lw10" x1="0" y1="0" x2="0" y2="1"><stop offset="0" stop-color="#050000"/><stop offset="0.12" stop-color="#0c0000"/><stop offset="0.85" stop-color="#0c0000"/><stop offset="1" stop-color="#100000"/></linearGradient><linearGradient id="lw11" x1="0" y1="0" x2="0" y2="1"><stop offset="0" stop-color="#110000"/><stop offset="0.12" stop-color="#260000"/><stop offset="0.85" stop-color="#260000"/><stop offset="1" stop-color="#330000"/></linearGradient><linearGradient id="lw12" x1="0" y1="0" x2="0" y2="1"><stop offset="0" stop-color="#160000"/><stop offset="0.12" stop-color="#310000"/><stop offset="0.85" stop-color="#310000"/><stop offset="1" stop-color="#410000"/></linearGradient><linearGradient id="lw13" x1="0" y1="0" x2="0" y2="1"><stop offset="0" stop-color="#050000"/><stop offset="0.12" stop-color="#0c0000"/><stop offset="0.85" stop-color="#0c0000"/><stop offset="1" stop-color="#100000"/></linearGradient><linearGradient id="lw14" x1="0" y1="0" x2="0" y2="1"><stop offset="0" stop-color="#0e0000"/><stop offset="0.12" stop-color="#1f0000"/><stop offset="0.85" stop-color="#1f0000"/><stop offset="1" stop-color="#290000"/></linearGradient><linearGradient id="lw15" x1="0" y1="0" x2="0" y2="1"><stop offset="0" stop-color="#100000"/><stop offset="0.12" stop-color="#240000"/><stop offset="0.85" stop-color="#240000"/><stop offset="1" stop-color="#310000"/></linearGradient><linearGradient id="lw16" x1="0" y1="0" x2="0" y2="1"><stop offset="0" stop-color="#190000"/><stop offset="0.12" stop-color="#360000"/><stop offset="0.85" stop-color="#360000"/><stop offset="1" stop-color="#4a0000"/></linearGradient><linearGradient id="lw17" x1="0" y1="0" x2="0" y2="1"><stop offset="0" stop-color="#160000"/><stop offset="0.12" stop-color="#310000"/><stop offset="0.85" stop-color="#310000"/><stop offset="1" stop-color="#430000"/></linearGradient><linearGradient id="lw18" x1="0" y1="0" x2="0" y2="1"><stop offset="0" stop-color="#170000"/><stop offset="0.12" stop-color="#340000"/><stop offset="0.85" stop-color="#340000"/><stop offset="1" stop-color="#460000"/></linearGradient><linearGradient id="lw19" x1="0" y1="0" x2="0" y2="1"><stop offset="0" stop-color="#160000"/><stop offset="0.12" stop-color="#300000"/><stop offset="0.85" stop-color="#300000"/><stop offset="1" stop-color="#410000"/></linearGradient><linearGradient id="lw20" x1="0" y1="0" x2="0" y2="1"><stop offset="0" stop-color="#130000"/><stop offset="0.12" stop-color="#2b0000"/><stop offset="0.85" stop-color="#2b0000"/><stop offset="1" stop-color="#3a0000"/></linearGradient><linearGradient id="lw21" x1="0" y1="0" x2="0" y2="1"><stop offset="0" stop-color="#0e0000"/><stop offset="0.12" stop-color="#1f0000"/><stop offset="0.85" stop-color="#1f0000"/><stop offset="1" stop-color="#2a0000"/></linearGradient><linearGradient id="lw22" x1="0" y1="0" x2="0" y2="1"><stop offset="0" stop-color="#190000"/><stop offset="0.12" stop-color="#370000"/><stop offset="0.85" stop-color="#370000"/><stop offset="1" stop-color="#4a0000"/></linearGradient><linearGradient id="lw23" x1="0" y1="0" x2="0" y2="1"><stop offset="0" stop-color="#1a0000"/><stop offset="0.12" stop-color="#3a0000"/><stop offset="0.85" stop-color="#3a0000"/><stop offset="1" stop-color="#4f0000"/></linearGradient><linearGradient id="lw24" x1="0" y1="0" x2="0" y2="1"><stop offset="0" stop-color="#100000"/><stop offset="0.12" stop-color="#240000"/><stop offset="0.85" stop-color="#240000"/><stop offset="1" stop-color="#310000"/></linearGradient><linearGradient id="lw25" x1="0" y1="0" x2="0" y2="1"><stop offset="0" stop-color="#160000"/><stop offset="0.12" stop-color="#310000"/><stop offset="0.85" stop-color="#310000"/><stop offset="1" stop-color="#430000"/></linearGradient><linearGradient id="lw26" x1="0" y1="0" x2="0" y2="1"><stop offset="0" stop-color="#110000"/><stop offset="0.12" stop-color="#250000"/><stop offset="0.85" stop-color="#250000"/><stop offset="1" stop-color="#320000"/></linearGradient><linearGradient id="lw27" x1="0" y1="0" x2="0" y2="1"><stop offset="0" stop-color="#120000"/><stop offset="0.12" stop-color="#280000"/><stop offset="0.85" stop-color="#280000"/><stop offset="1" stop-color="#360000"/></linearGradient><linearGradient id="lw28" x1="0" y1="0" x2="0" y2="1"><stop offset="0" stop-color="#0e0000"/><stop offset="0.12" stop-color="#200000"/><stop offset="0.85" stop-color="#200000"/><stop offset="1" stop-color="#2b0000"/></linearGradient><linearGradient id="lw29" x1="0" y1="0" x2="0" y2="1"><stop offset="0" stop-color="#150000"/><stop offset="0.12" stop-color="#2e0000"/><stop offset="0.85" stop-color="#2e0000"/><stop offset="1" stop-color="#3e0000"/></linearGradient><linearGradient id="lw30" x1="0" y1="0" x2="0" y2="1"><stop offset="0" stop-color="#110000"/><stop offset="0.12" stop-color="#250000"/><stop offset="0.85" stop-color="#250000"/><stop offset="1" stop-color="#320000"/></linearGradient><linearGradient id="lw31" x1="0" y1="0" x2="0" y2="1"><stop offset="0" stop-color="#1a0000"/><stop offset="0.12" stop-color="#3a0000"/><stop offset="0.85" stop-color="#3a0000"/><stop offset="1" stop-color="#4e0000"/></linearGradient><linearGradient id="lw32" x1="0" y1="0" x2="0" y2="1"><stop offset="0" stop-color="#100000"/><stop offset="0.12" stop-color="#230000"/><stop offset="0.85" stop-color="#230000"/><stop offset="1" stop-color="#300000"/></linearGradient><linearGradient id="lw33" x1="0" y1="0" x2="0" y2="1"><stop offset="0" stop-color="#050000"/><stop offset="0.12" stop-color="#0c0000"/><stop offset="0.85" stop-color="#0c0000"/><stop offset="1" stop-color="#100000"/></linearGradient><linearGradient id="lw34" x1="0" y1="0" x2="0" y2="1"><stop offset="0" stop-color="#1c0000"/><stop offset="0.12" stop-color="#3e0000"/><stop offset="0.85" stop-color="#3e0000"/><stop offset="1" stop-color="#530000"/></linearGradient><linearGradient id="lw35" x1="0" y1="0" x2="0" y2="1"><stop offset="0" stop-color="#050000"/><stop offset="0.12" stop-color="#0c0000"/><stop offset="0.85" stop-color="#0c0000"/><stop offset="1" stop-color="#100000"/></linearGradient><linearGradient id="lw36" x1="0" y1="0" x2="0" y2="1"><stop offset="0" stop-color="#130000"/><stop offset="0.12" stop-color="#2a0000"/><stop offset="0.85" stop-color="#2a0000"/><stop offset="1" stop-color="#390000"/></linearGradient><linearGradient id="lw37" x1="0" y1="0" x2="0" y2="1"><stop offset="0" stop-color="#130000"/><stop offset="0.12" stop-color="#290000"/><stop offset="0.85" stop-color="#290000"/><stop offset="1" stop-color="#380000"/></linearGradient><linearGradient id="lw38" x1="0" y1="0" x2="0" y2="1"><stop offset="0" stop-color="#0f0000"/><stop offset="0.12" stop-color="#220000"/><stop offset="0.85" stop-color="#220000"/><stop offset="1" stop-color="#2e0000"/></linearGradient><linearGradient id="lw39" x1="0" y1="0" x2="0" y2="1"><stop offset="0" stop-color="#0f0000"/><stop offset="0.12" stop-color="#220000"/><stop offset="0.85" stop-color="#220000"/><stop offset="1" stop-color="#2e0000"/></linearGradient><linearGradient id="lw40" x1="0" y1="0" x2="0" y2="1"><stop offset="0" stop-color="#160000"/><stop offset="0.12" stop-color="#300000"/><stop offset="0.85" stop-color="#300000"/><stop offset="1" stop-color="#410000"/></linearGradient><linearGradient id="lw41" x1="0" y1="0" x2="0" y2="1"><stop offset="0" stop-color="#110000"/><stop offset="0.12" stop-color="#270000"/><stop offset="0.85" stop-color="#270000"/><stop offset="1" stop-color="#340000"/></linearGradient><linearGradient id="lw42" x1="0" y1="0" x2="0" y2="1"><stop offset="0" stop-color="#1b0000"/><stop offset="0.12" stop-color="#3c0000"/><stop offset="0.85" stop-color="#3c0000"/><stop offset="1" stop-color="#500000"/></linearGradient><linearGradient id="lw43" x1="0" y1="0" x2="0" y2="1"><stop offset="0" stop-color="#190000"/><stop offset="0.12" stop-color="#380000"/><stop offset="0.85" stop-color="#380000"/><stop offset="1" stop-color="#4b0000"/></linearGradient><linearGradient id="lw44" x1="0" y1="0" x2="0" y2="1"><stop offset="0" stop-color="#110000"/><stop offset="0.12" stop-color="#250000"/><stop offset="0.85" stop-color="#250000"/><stop offset="1" stop-color="#320000"/></linearGradient><linearGradient id="lw45" x1="0" y1="0" x2="0" y2="1"><stop offset="0" stop-color="#140000"/><stop offset="0.12" stop-color="#2d0000"/><stop offset="0.85" stop-color="#2d0000"/><stop offset="1" stop-color="#3c0000"/></linearGradient><linearGradient id="lw46" x1="0" y1="0" x2="0" y2="1"><stop offset="0" stop-color="#140000"/><stop offset="0.12" stop-color="#2c0000"/><stop offset="0.85" stop-color="#2c0000"/><stop offset="1" stop-color="#3c0000"/></linearGradient><linearGradient id="lw47" x1="0" y1="0" x2="0" y2="1"><stop offset="0" stop-color="#220000"/><stop offset="0.12" stop-color="#4b0000"/><stop offset="0.85" stop-color="#4b0000"/><stop offset="1" stop-color="#650000"/></linearGradient><linearGradient id="lw48" x1="0" y1="0" x2="0" y2="1"><stop offset="0" stop-color="#1a0000"/><stop offset="0.12" stop-color="#3a0000"/><stop offset="0.85" stop-color="#3a0000"/><stop offset="1" stop-color="#4f0000"/></linearGradient><linearGradient id="lw49" x1="0" y1="0" x2="0" y2="1"><stop offset="0" stop-color="#1b0000"/><stop offset="0.12" stop-color="#3c0000"/><stop offset="0.85" stop-color="#3c0000"/><stop offset="1" stop-color="#520000"/></linearGradient><linearGradient id="lw50" x1="0" y1="0" x2="0" y2="1"><stop offset="0" stop-color="#1e0000"/><stop offset="0.12" stop-color="#420000"/><stop offset="0.85" stop-color="#420000"/><stop offset="1" stop-color="#5a0000"/></linearGradient><linearGradient id="lw51" x1="0" y1="0" x2="0" y2="1"><stop offset="0" stop-color="#190000"/><stop offset="0.12" stop-color="#380000"/><stop offset="0.85" stop-color="#380000"/><stop offset="1" stop-color="#4b0000"/></linearGradient><linearGradient id="lw52" x1="0" y1="0" x2="0" y2="1"><stop offset="0" stop-color="#110000"/><stop offset="0.12" stop-color="#270000"/><stop offset="0.85" stop-color="#270000"/><stop offset="1" stop-color="#340000"/></linearGradient><linearGradient id="lw53" x1="0" y1="0" x2="0" y2="1"><stop offset="0" stop-color="#200000"/><stop offset="0.12" stop-color="#460000"/><stop offset="0.85" stop-color="#460000"/><stop offset="1" stop-color="#5f0000"/></linearGradient><linearGradient id="lw54" x1="0" y1="0" x2="0" y2="1"><stop offset="0" stop-color="#120000"/><stop offset="0.12" stop-color="#270000"/><stop offset="0.85" stop-color="#270000"/><stop offset="1" stop-color="#350000"/></linearGradient><linearGradient id="lw55" x1="0" y1="0" x2="0" y2="1"><stop offset="0" stop-color="#1d0000"/><stop offset="0.12" stop-color="#410000"/><stop offset="0.85" stop-color="#410000"/><stop offset="1" stop-color="#570000"/></linearGradient><linearGradient id="lw56" x1="0" y1="0" x2="0" y2="1"><stop offset="0" stop-color="#110000"/><stop offset="0.12" stop-color="#270000"/><stop offset="0.85" stop-color="#270000"/><stop offset="1" stop-color="#340000"/></linearGradient><linearGradient id="lw57" x1="0" y1="0" x2="0" y2="1"><stop offset="0" stop-color="#050000"/><stop offset="0.12" stop-color="#0c0000"/><stop offset="0.85" stop-color="#0c0000"/><stop offset="1" stop-color="#100000"/></linearGradient><linearGradient id="lw58" x1="0" y1="0" x2="0" y2="1"><stop offset="0" stop-color="#190000"/><stop offset="0.12" stop-color="#380000"/><stop offset="0.85" stop-color="#380000"/><stop offset="1" stop-color="#4c0000"/></linearGradient><linearGradient id="lw59" x1="0" y1="0" x2="0" y2="1"><stop offset="0" stop-color="#170000"/><stop offset="0.12" stop-color="#320000"/><stop offset="0.85" stop-color="#320000"/><stop offset="1" stop-color="#440000"/></linearGradient><linearGradient id="lw60" x1="0" y1="0" x2="0" y2="1"><stop offset="0" stop-color="#220000"/><stop offset="0.12" stop-color="#4d0000"/><stop offset="0.85" stop-color="#4d0000"/><stop offset="1" stop-color="#670000"/></linearGradient><linearGradient id="lw61" x1="0" y1="0" x2="0" y2="1"><stop offset="0" stop-color="#170000"/><stop offset="0.12" stop-color="#330000"/><stop offset="0.85" stop-color="#330000"/><stop offset="1" stop-color="#450000"/></linearGradient><linearGradient id="lw62" x1="0" y1="0" x2="0" y2="1"><stop offset="0" stop-color="#140000"/><stop offset="0.12" stop-color="#2d0000"/><stop offset="0.85" stop-color="#2d0000"/><stop offset="1" stop-color="#3d0000"/></linearGradient><linearGradient id="lw63" x1="0" y1="0" x2="0" y2="1"><stop offset="0" stop-color="#130000"/><stop offset="0.12" stop-color="#2a0000"/><stop offset="0.85" stop-color="#2a0000"/><stop offset="1" stop-color="#390000"/></linearGradient><linearGradient id="lw64" x1="0" y1="0" x2="0" y2="1"><stop offset="0" stop-color="#110000"/><stop offset="0.12" stop-color="#260000"/><stop offset="0.85" stop-color="#260000"/><stop offset="1" stop-color="#340000"/></linearGradient><linearGradient id="lw65" x1="0" y1="0" x2="0" y2="1"><stop offset="0" stop-color="#1c0000"/><stop offset="0.12" stop-color="#3f0000"/><stop offset="0.85" stop-color="#3f0000"/><stop offset="1" stop-color="#550000"/></linearGradient><linearGradient id="lw66" x1="0" y1="0" x2="0" y2="1"><stop offset="0" stop-color="#1a0000"/><stop offset="0.12" stop-color="#3a0000"/><stop offset="0.85" stop-color="#3a0000"/><stop offset="1" stop-color="#4f0000"/></linearGradient><linearGradient id="lw67" x1="0" y1="0" x2="0" y2="1"><stop offset="0" stop-color="#220000"/><stop offset="0.12" stop-color="#4b0000"/><stop offset="0.85" stop-color="#4b0000"/><stop offset="1" stop-color="#660000"/></linearGradient><linearGradient id="lw68" x1="0" y1="0" x2="0" y2="1"><stop offset="0" stop-color="#180000"/><stop offset="0.12" stop-color="#360000"/><stop offset="0.85" stop-color="#360000"/><stop offset="1" stop-color="#490000"/></linearGradient><linearGradient id="lw69" x1="0" y1="0" x2="0" y2="1"><stop offset="0" stop-color="#1c0000"/><stop offset="0.12" stop-color="#3e0000"/><stop offset="0.85" stop-color="#3e0000"/><stop offset="1" stop-color="#530000"/></linearGradient><linearGradient id="lw70" x1="0" y1="0" x2="0" y2="1"><stop offset="0" stop-color="#130000"/><stop offset="0.12" stop-color="#2b0000"/><stop offset="0.85" stop-color="#2b0000"/><stop offset="1" stop-color="#3a0000"/></linearGradient><linearGradient id="lw71" x1="0" y1="0" x2="0" y2="1"><stop offset="0" stop-color="#1f0000"/><stop offset="0.12" stop-color="#450000"/><stop offset="0.85" stop-color="#450000"/><stop offset="1" stop-color="#5d0000"/></linearGradient><linearGradient id="lw72" x1="0" y1="0" x2="0" y2="1"><stop offset="0" stop-color="#210000"/><stop offset="0.12" stop-color="#4a0000"/><stop offset="0.85" stop-color="#4a0000"/><stop offset="1" stop-color="#640000"/></linearGradient><linearGradient id="lw73" x1="0" y1="0" x2="0" y2="1"><stop offset="0" stop-color="#150000"/><stop offset="0.12" stop-color="#2f0000"/><stop offset="0.85" stop-color="#2f0000"/><stop offset="1" stop-color="#400000"/></linearGradient><linearGradient id="lw74" x1="0" y1="0" x2="0" y2="1"><stop offset="0" stop-color="#170000"/><stop offset="0.12" stop-color="#330000"/><stop offset="0.85" stop-color="#330000"/><stop offset="1" stop-color="#450000"/></linearGradient><linearGradient id="lw75" x1="0" y1="0" x2="0" y2="1"><stop offset="0" stop-color="#110000"/><stop offset="0.12" stop-color="#270000"/><stop offset="0.85" stop-color="#270000"/><stop offset="1" stop-color="#340000"/></linearGradient><linearGradient id="lw76" x1="0" y1="0" x2="0" y2="1"><stop offset="0" stop-color="#140000"/><stop offset="0.12" stop-color="#2d0000"/><stop offset="0.85" stop-color="#2d0000"/><stop offset="1" stop-color="#3c0000"/></linearGradient><linearGradient id="lw77" x1="0" y1="0" x2="0" y2="1"><stop offset="0" stop-color="#120000"/><stop offset="0.12" stop-color="#280000"/><stop offset="0.85" stop-color="#280000"/><stop offset="1" stop-color="#370000"/></linearGradient><linearGradient id="lw78" x1="0" y1="0" x2="0" y2="1"><stop offset="0" stop-color="#050000"/><stop offset="0.12" stop-color="#0c0000"/><stop offset="0.85" stop-color="#0c0000"/><stop offset="1" stop-color="#100000"/></linearGradient><linearGradient id="lw79" x1="0" y1="0" x2="0" y2="1"><stop offset="0" stop-color="#1b0000"/><stop offset="0.12" stop-color="#3c0000"/><stop offset="0.85" stop-color="#3c0000"/><stop offset="1" stop-color="#510000"/></linearGradient><linearGradient id="lw80" x1="0" y1="0" x2="0" y2="1"><stop offset="0" stop-color="#160000"/><stop offset="0.12" stop-color="#310000"/><stop offset="0.85" stop-color="#310000"/><stop offset="1" stop-color="#420000"/></linearGradient><linearGradient id="lw81" x1="0" y1="0" x2="0" y2="1"><stop offset="0" stop-color="#120000"/><stop offset="0.12" stop-color="#290000"/><stop offset="0.85" stop-color="#290000"/><stop offset="1" stop-color="#370000"/></linearGradient><linearGradient id="lw82" x1="0" y1="0" x2="0" y2="1"><stop offset="0" stop-color="#1a0000"/><stop offset="0.12" stop-color="#3a0000"/><stop offset="0.85" stop-color="#3a0000"/><stop offset="1" stop-color="#4e0000"/></linearGradient><linearGradient id="lw83" x1="0" y1="0" x2="0" y2="1"><stop offset="0" stop-color="#180000"/><stop offset="0.12" stop-color="#350000"/><stop offset="0.85" stop-color="#350000"/><stop offset="1" stop-color="#470000"/></linearGradient><linearGradient id="lw84" x1="0" y1="0" x2="0" y2="1"><stop offset="0" stop-color="#050000"/><stop offset="0.12" stop-color="#0c0000"/><stop offset="0.85" stop-color="#0c0000"/><stop offset="1" stop-color="#100000"/></linearGradient><linearGradient id="lw85" x1="0" y1="0" x2="0" y2="1"><stop offset="0" stop-color="#120000"/><stop offset="0.12" stop-color="#290000"/><stop offset="0.85" stop-color="#290000"/><stop offset="1" stop-color="#370000"/></linearGradient><linearGradient id="lw86" x1="0" y1="0" x2="0" y2="1"><stop offset="0" stop-color="#130000"/><stop offset="0.12" stop-color="#2b0000"/><stop offset="0.85" stop-color="#2b0000"/><stop offset="1" stop-color="#3a0000"/></linearGradient><linearGradient id="lw87" x1="0" y1="0" x2="0" y2="1"><stop offset="0" stop-color="#130000"/><stop offset="0.12" stop-color="#290000"/><stop offset="0.85" stop-color="#290000"/><stop offset="1" stop-color="#380000"/></linearGradient><linearGradient id="lw88" x1="0" y1="0" x2="0" y2="1"><stop offset="0" stop-color="#160000"/><stop offset="0.12" stop-color="#300000"/><stop offset="0.85" stop-color="#300000"/><stop offset="1" stop-color="#410000"/></linearGradient><linearGradient id="lw89" x1="0" y1="0" x2="0" y2="1"><stop offset="0" stop-color="#120000"/><stop offset="0.12" stop-color="#280000"/><stop offset="0.85" stop-color="#280000"/><stop offset="1" stop-color="#360000"/></linearGradient><linearGradient id="lw90" x1="0" y1="0" x2="0" y2="1"><stop offset="0" stop-color="#180000"/><stop offset="0.12" stop-color="#360000"/><stop offset="0.85" stop-color="#360000"/><stop offset="1" stop-color="#490000"/></linearGradient><linearGradient id="lw91" x1="0" y1="0" x2="0" y2="1"><stop offset="0" stop-color="#150000"/><stop offset="0.12" stop-color="#2f0000"/><stop offset="0.85" stop-color="#2f0000"/><stop offset="1" stop-color="#3f0000"/></linearGradient><linearGradient id="lw92" x1="0" y1="0" x2="0" y2="1"><stop offset="0" stop-color="#180000"/><stop offset="0.12" stop-color="#360000"/><stop offset="0.85" stop-color="#360000"/><stop offset="1" stop-color="#490000"/></linearGradient><linearGradient id="lw93" x1="0" y1="0" x2="0" y2="1"><stop offset="0" stop-color="#120000"/><stop offset="0.12" stop-color="#290000"/><stop offset="0.85" stop-color="#290000"/><stop offset="1" stop-color="#370000"/></linearGradient><linearGradient id="lw94" x1="0" y1="0" x2="0" y2="1"><stop offset="0" stop-color="#170000"/><stop offset="0.12" stop-color="#330000"/><stop offset="0.85" stop-color="#330000"/><stop offset="1" stop-color="#450000"/></linearGradient><linearGradient id="lw95" x1="0" y1="0" x2="0" y2="1"><stop offset="0" stop-color="#180000"/><stop offset="0.12" stop-color="#360000"/><stop offset="0.85" stop-color="#360000"/><stop offset="1" stop-color="#490000"/></linearGradient></defs><rect x="437" y="270" width="3" height="53" fill="url(#lw0)"/><rect x="440" y="270" width="1" height="53" fill="url(#lw1)"/><rect x="441" y="270" width="1" height="53" fill="url(#lw2)"/><rect x="442" y="272" width="1" height="51" fill="url(#lw3)"/><rect x="443" y="268" width="3" height="55" fill="url(#lw4)"/><rect x="446" y="263" width="2" height="60" fill="url(#lw5)"/><rect x="448" y="272" width="1" height="51" fill="url(#lw6)"/><rect x="449" y="265" width="2" height="58" fill="url(#lw7)"/><rect x="451" y="267" width="3" height="56" fill="url(#lw8)"/><rect x="454" y="269" width="3" height="54" fill="url(#lw9)"/><rect x="457" y="272" width="1" height="51" fill="url(#lw10)"/><rect x="458" y="271" width="3" height="52" fill="url(#lw11)"/><rect x="461" y="266" width="1" height="57" fill="url(#lw12)"/><rect x="462" y="270" width="2" height="53" fill="url(#lw13)"/><rect x="464" y="268" width="1" height="55" fill="url(#lw14)"/><rect x="465" y="271" width="1" height="52" fill="url(#lw15)"/><rect x="466" y="272" width="1" height="51" fill="url(#lw16)"/><rect x="467" y="268" width="4" height="55" fill="url(#lw17)"/><rect x="471" y="266" width="1" height="57" fill="url(#lw18)"/><rect x="472" y="269" width="2" height="54" fill="url(#lw19)"/><rect x="474" y="267" width="1" height="56" fill="url(#lw20)"/><rect x="475" y="268" width="2" height="55" fill="url(#lw21)"/><rect x="477" y="263" width="2" height="60" fill="url(#lw22)"/><rect x="479" y="270" width="1" height="53" fill="url(#lw23)"/><rect x="480" y="271" width="2" height="52" fill="url(#lw24)"/><rect x="482" y="266" width="4" height="57" fill="url(#lw25)"/><rect x="486" y="272" width="1" height="51" fill="url(#lw26)"/><rect x="487" y="270" width="2" height="53" fill="url(#lw27)"/><rect x="489" y="267" width="2" height="56" fill="url(#lw28)"/><rect x="491" y="263" width="3" height="60" fill="url(#lw29)"/><rect x="494" y="267" width="2" height="56" fill="url(#lw30)"/><rect x="496" y="263" width="3" height="60" fill="url(#lw31)"/><rect x="499" y="268" width="2" height="55" fill="url(#lw32)"/><rect x="501" y="266" width="2" height="57" fill="url(#lw33)"/><rect x="503" y="269" width="2" height="54" fill="url(#lw34)"/><rect x="505" y="268" width="4" height="55" fill="url(#lw35)"/><rect x="509" y="271" width="1" height="52" fill="url(#lw36)"/><rect x="510" y="266" width="4" height="57" fill="url(#lw37)"/><rect x="514" y="271" width="2" height="52" fill="url(#lw38)"/><rect x="516" y="263" width="1" height="60" fill="url(#lw39)"/><rect x="517" y="271" width="3" height="52" fill="url(#lw40)"/><rect x="520" y="268" width="3" height="55" fill="url(#lw41)"/><rect x="523" y="271" width="4" height="52" fill="url(#lw42)"/><rect x="527" y="263" width="2" height="60" fill="url(#lw43)"/><rect x="529" y="268" width="1" height="55" fill="url(#lw44)"/><rect x="530" y="265" width="1" height="58" fill="url(#lw45)"/><rect x="531" y="263" width="4" height="60" fill="url(#lw46)"/><rect x="535" y="269" width="3" height="54" fill="url(#lw47)"/><rect x="538" y="272" width="1" height="51" fill="url(#lw48)"/><rect x="539" y="267" width="4" height="56" fill="url(#lw49)"/><rect x="543" y="267" width="2" height="56" fill="url(#lw50)"/><rect x="545" y="267" width="1" height="56" fill="url(#lw51)"/><rect x="546" y="266" width="3" height="57" fill="url(#lw52)"/><rect x="549" y="271" width="2" height="52" fill="url(#lw53)"/><rect x="551" y="271" width="4" height="52" fill="url(#lw54)"/><rect x="555" y="267" width="4" height="56" fill="url(#lw55)"/><rect x="559" y="267" width="3" height="56" fill="url(#lw56)"/><rect x="562" y="267" width="2" height="56" fill="url(#lw57)"/><rect x="564" y="271" width="2" height="52" fill="url(#lw58)"/><rect x="566" y="270" width="1" height="53" fill="url(#lw59)"/><rect x="567" y="271" width="3" height="52" fill="url(#lw60)"/><rect x="570" y="268" width="3" height="55" fill="url(#lw61)"/><rect x="573" y="271" width="2" height="52" fill="url(#lw62)"/><rect x="575" y="267" width="2" height="56" fill="url(#lw63)"/><rect x="577" y="270" width="1" height="53" fill="url(#lw64)"/><rect x="578" y="265" width="4" height="58" fill="url(#lw65)"/><rect x="582" y="266" width="2" height="57" fill="url(#lw66)"/><rect x="584" y="266" width="2" height="57" fill="url(#lw67)"/><rect x="586" y="267" width="1" height="56" fill="url(#lw68)"/><rect x="587" y="271" width="2" height="52" fill="url(#lw69)"/><rect x="589" y="266" width="2" height="57" fill="url(#lw70)"/><rect x="591" y="268" width="1" height="55" fill="url(#lw71)"/><rect x="592" y="266" width="3" height="57" fill="url(#lw72)"/><rect x="595" y="266" width="1" height="57" fill="url(#lw73)"/><rect x="596" y="270" width="4" height="53" fill="url(#lw74)"/><rect x="600" y="272" width="3" height="51" fill="url(#lw75)"/><rect x="603" y="272" width="3" height="51" fill="url(#lw76)"/><rect x="606" y="271" width="3" height="52" fill="url(#lw77)"/><rect x="609" y="272" width="2" height="51" fill="url(#lw78)"/><rect x="611" y="272" width="2" height="51" fill="url(#lw79)"/><rect x="613" y="271" width="1" height="52" fill="url(#lw80)"/><rect x="614" y="272" width="3" height="51" fill="url(#lw81)"/><rect x="617" y="271" width="1" height="52" fill="url(#lw82)"/><rect x="618" y="272" width="2" height="51" fill="url(#lw83)"/><rect x="620" y="271" width="2" height="52" fill="url(#lw84)"/><rect x="622" y="271" width="1" height="52" fill="url(#lw85)"/><rect x="623" y="271" width="1" height="52" fill="url(#lw86)"/><rect x="624" y="271" width="4" height="52" fill="url(#lw87)"/><rect x="628" y="271" width="2" height="52" fill="url(#lw88)"/><rect x="630" y="272" width="4" height="51" fill="url(#lw89)"/><rect x="634" y="271" width="1" height="52" fill="url(#lw90)"/><rect x="635" y="271" width="3" height="52" fill="url(#lw91)"/><rect x="638" y="271" width="3" height="52" fill="url(#lw92)"/><rect x="641" y="272" width="2" height="51" fill="url(#lw93)"/><rect x="643" y="272" width="4" height="51" fill="url(#lw94)"/><rect x="647" y="271" width="1" height="52" fill="url(#lw95)"/><rect x="437" y="323" width="211" height="2" fill="#1a0000"/><path d="M431 200.5h6M431 226.5h6M431 252.5h6M431 279.5h6M431 306.5h6M431 331.5h6" stroke="#000" stroke-width="1" fill="none" shape-rendering="crispEdges"/><path d="M437.5 331v10.5M462.5 331v5.5M487.5 331v10.5M512.5 331v5.5M538.5 331v10.5M563.5 331v5.5M588.5 331v10.5M613.5 331v5.5M638.5 331v10.5M663.5 331v5.5M688.5 331v10.5M713.5 331v5.5M738.5 331v10.5" stroke="#000" stroke-width="1" fill="none" shape-rendering="crispEdges"/><rect x="742" y="198" width="6" height="136" fill="url(#red)" /><path d="M749 199.5h6M749 266.5h6M749 331.5h6" stroke="#000" stroke-width="1" fill="none" shape-rendering="crispEdges"/><rect x="437" y="376" width="302" height="133" fill="#000" /><defs><linearGradient id="tg" x1="0" y1="0" x2="0" y2="1"><stop offset="0" stop-color="#0040ff"/><stop offset="0.2" stop-color="#0060ff"/><stop offset="0.33" stop-color="#00a8ff"/><stop offset="0.43" stop-color="#00f0ff"/><stop offset="0.55" stop-color="#60ffa0"/><stop offset="0.68" stop-color="#c0ff40"/><stop offset="0.78" stop-color="#ffff00"/><stop offset="0.88" stop-color="#ffa000"/><stop offset="0.96" stop-color="#ff6000"/><stop offset="1" stop-color="#ff5000"/></linearGradient></defs><rect x="437" y="378" width="211" height="128" fill="url(#tg)"/><rect x="437" y="378" width="2" height="118" fill="#fff" opacity="0.11"/><rect x="442" y="378" width="2" height="118" fill="#fff" opacity="0.06"/><rect x="444" y="378" width="3" height="118" fill="#fff" opacity="0.11"/><rect x="449" y="378" width="1" height="118" fill="#fff" opacity="0.11"/><rect x="452" y="378" width="2" height="118" fill="#fff" opacity="0.09"/><rect x="458" y="378" width="2" height="118" fill="#fff" opacity="0.08"/><rect x="460" y="378" width="2" height="118" fill="#fff" opacity="0.04"/><rect x="466" y="378" width="2" height="118" fill="#fff" opacity="0.02"/><rect x="473" y="378" width="2" height="118" fill="#fff" opacity="0.10"/><rect x="475" y="378" width="3" height="118" fill="#fff" opacity="0.02"/><rect x="480" y="378" width="1" height="118" fill="#fff" opacity="0.06"/><rect x="485" y="378" width="1" height="118" fill="#fff" opacity="0.08"/><rect x="486" y="378" width="1" height="118" fill="#fff" opacity="0.02"/><rect x="487" y="378" width="3" height="118" fill="#fff" opacity="0.09"/><rect x="490" y="378" width="2" height="118" fill="#fff" opacity="0.03"/><rect x="492" y="378" width="3" height="118" fill="#fff" opacity="0.11"/><rect x="498" y="378" width="1" height="118" fill="#fff" opacity="0.01"/><rect x="502" y="378" width="1" height="118" fill="#fff" opacity="0.01"/><rect x="503" y="378" width="3" height="118" fill="#fff" opacity="0.11"/><rect x="508" y="378" width="2" height="118" fill="#fff" opacity="0.08"/><rect x="515" y="378" width="2" height="118" fill="#fff" opacity="0.03"/><rect x="520" y="378" width="1" height="118" fill="#fff" opacity="0.01"/><rect x="521" y="378" width="2" height="118" fill="#fff" opacity="0.05"/><rect x="529" y="378" width="2" height="118" fill="#fff" opacity="0.05"/><rect x="531" y="378" width="3" height="118" fill="#fff" opacity="0.01"/><rect x="536" y="378" width="3" height="118" fill="#fff" opacity="0.02"/><rect x="545" y="378" width="2" height="118" fill="#fff" opacity="0.12"/><rect x="549" y="378" width="2" height="118" fill="#fff" opacity="0.02"/><rect x="559" y="378" width="3" height="118" fill="#fff" opacity="0.10"/><rect x="562" y="378" width="2" height="118" fill="#fff" opacity="0.01"/><rect x="564" y="378" width="2" height="118" fill="#fff" opacity="0.12"/><rect x="569" y="378" width="1" height="118" fill="#fff" opacity="0.08"/><rect x="571" y="378" width="2" height="118" fill="#fff" opacity="0.09"/><rect x="573" y="378" width="1" height="118" fill="#fff" opacity="0.10"/><rect x="577" y="378" width="2" height="118" fill="#fff" opacity="0.04"/><rect x="579" y="378" width="2" height="118" fill="#fff" opacity="0.08"/><rect x="586" y="378" width="2" height="118" fill="#fff" opacity="0.04"/><rect x="588" y="378" width="3" height="118" fill="#fff" opacity="0.10"/><rect x="591" y="378" width="3" height="118" fill="#fff" opacity="0.03"/><rect x="594" y="378" width="3" height="118" fill="#fff" opacity="0.05"/><rect x="599" y="378" width="1" height="118" fill="#fff" opacity="0.07"/><rect x="602" y="378" width="1" height="118" fill="#fff" opacity="0.05"/><rect x="605" y="378" width="2" height="118" fill="#fff" opacity="0.08"/><rect x="617" y="378" width="2" height="118" fill="#fff" opacity="0.03"/><rect x="621" y="378" width="3" height="118" fill="#fff" opacity="0.02"/><rect x="624" y="378" width="1" height="118" fill="#fff" opacity="0.10"/><rect x="625" y="378" width="2" height="118" fill="#fff" opacity="0.02"/><rect x="629" y="378" width="1" height="118" fill="#fff" opacity="0.01"/><rect x="636" y="378" width="1" height="118" fill="#fff" opacity="0.08"/><rect x="637" y="378" width="2" height="118" fill="#fff" opacity="0.02"/><rect x="639" y="378" width="2" height="118" fill="#fff" opacity="0.03"/><rect x="642" y="378" width="1" height="118" fill="#fff" opacity="0.08"/><rect x="643" y="378" width="1" height="118" fill="#fff" opacity="0.08"/><rect x="647" y="378" width="3" height="118" fill="#fff" opacity="0.01"/><rect x="437" y="502" width="211" height="1.5" fill="#70a030"/><rect x="437.0" y="465" width="3" height="1.3" fill="#c84010"/><rect x="441.0" y="462" width="4" height="1.3" fill="#c84010"/><rect x="446.0" y="462" width="3" height="1.3" fill="#c84010"/><rect x="449.0" y="465" width="5" height="1.3" fill="#c84010"/><rect x="454.0" y="460.5" width="3" height="1.3" fill="#c84010"/><rect x="459.0" y="463.5" width="4" height="1.3" fill="#c84010"/><rect x="464.0" y="460.5" width="5" height="1.3" fill="#c84010"/><rect x="470.0" y="465" width="5" height="1.3" fill="#c84010"/><rect x="475.0" y="466.5" width="4" height="1.3" fill="#c84010"/><rect x="479.0" y="459" width="4" height="1.3" fill="#c84010"/><rect x="485.0" y="465" width="3" height="1.3" fill="#c84010"/><rect x="490.0" y="466.5" width="3" height="1.3" fill="#c84010"/><rect x="493.0" y="462" width="4" height="1.3" fill="#c84010"/><rect x="498.0" y="462" width="3" height="1.3" fill="#c84010"/><rect x="502.0" y="459" width="4" height="1.3" fill="#c84010"/><rect x="506.0" y="460.5" width="3" height="1.3" fill="#c84010"/><rect x="510.0" y="462" width="3" height="1.3" fill="#c84010"/><rect x="514.0" y="463.5" width="5" height="1.3" fill="#c84010"/><rect x="520.0" y="466.5" width="3" height="1.3" fill="#c84010"/><rect x="524.0" y="460.5" width="5" height="1.3" fill="#c84010"/><rect x="529.0" y="462" width="3" height="1.3" fill="#c84010"/><rect x="532.0" y="466.5" width="4" height="1.3" fill="#c84010"/><rect x="537.0" y="462" width="3" height="1.3" fill="#c84010"/><rect x="541.0" y="459" width="4" height="1.3" fill="#c84010"/><rect x="545.0" y="459" width="6" height="1.3" fill="#c84010"/><rect x="552.0" y="460.5" width="3" height="1.3" fill="#c84010"/><rect x="556.0" y="465" width="4" height="1.3" fill="#c84010"/><rect x="562.0" y="462" width="6" height="1.3" fill="#c84010"/><rect x="570.0" y="460.5" width="6" height="1.3" fill="#c84010"/><rect x="577.0" y="462" width="6" height="1.3" fill="#c84010"/><rect x="585.0" y="462" width="3" height="1.3" fill="#c84010"/><rect x="589.0" y="462" width="4" height="1.3" fill="#c84010"/><rect x="594.0" y="459" width="6" height="1.3" fill="#c84010"/><rect x="602.0" y="465" width="5" height="1.3" fill="#c84010"/><rect x="608.0" y="462" width="5" height="1.3" fill="#c84010"/><rect x="613.0" y="460.5" width="3" height="1.3" fill="#c84010"/><rect x="616.0" y="459" width="5" height="1.3" fill="#c84010"/><rect x="622.0" y="459" width="5" height="1.3" fill="#c84010"/><rect x="628.0" y="462" width="6" height="1.3" fill="#c84010"/><rect x="634" y="466" width="14" height="1.3" fill="#c84010"/><path d="M431 378.5h6M431 410.5h6M431 445.5h6M431 478.5h6M431 510.5h6" stroke="#000" stroke-width="1" fill="none" shape-rendering="crispEdges"/><path d="M437.5 508.6v10.5M462.5 508.6v5.5M487.5 508.6v10.5M512.5 508.6v5.5M538.5 508.6v10.5M563.5 508.6v5.5M588.5 508.6v10.5M613.5 508.6v5.5M638.5 508.6v10.5M663.5 508.6v5.5M688.5 508.6v10.5M713.5 508.6v5.5M738.5 508.6v10.5" stroke="#000" stroke-width="1" fill="none" shape-rendering="crispEdges"/><rect x="742" y="376" width="6" height="136" fill="url(#jet)" /><path d="M749 378.5h6M749 410.5h6M749 444.5h6M749 478.5h6M749 507.5h6" stroke="#000" stroke-width="1" fill="none" shape-rendering="crispEdges"/><rect x="437" y="554" width="302" height="133" fill="#000" /><path d="M437 687 L437.2 677.1 L440.0 677.1 L440.0 678.8 L441.7 678.8 L441.7 674.9 L445.0 674.9 L445.0 678.8 L448.9 678.8 L448.9 673.2 L452.2 673.2 L452.2 677.1 L455.0 677.1 L455.0 678.8 L457.2 678.8 L457.2 677.7 L460.0 677.7 L460.0 680.4 L462.2 680.4 L462.2 677.1 L464.4 677.1 L464.4 673.2 L467.2 673.2 L467.2 676.6 L469.4 676.6 L469.4 672.1 L474.9 672.1 L474.9 678.8 L477.1 678.8 L477.1 673.2 L479.4 673.2 L479.4 674.3 L481.6 674.3 L481.6 678.8 L483.8 678.8 L483.8 664.9 L487.1 664.9 L487.1 668.8 L489.9 668.8 L489.9 676.0 L492.1 676.0 L492.1 676.6 L493.8 676.6 L493.8 664.9 L497.1 664.9 L497.1 669.9 L499.3 669.9 L499.3 667.1 L502.1 667.1 L502.1 674.9 L504.3 674.9 L504.3 663.2 L507.1 663.2 L507.1 671.6 L508.7 671.6 L508.7 667.1 L511.5 667.1 L511.5 663.2 L514.8 663.2 L514.8 671.0 L517.1 671.0 L517.1 664.9 L519.8 664.9 L519.8 676.0 L522.6 676.0 L522.6 673.2 L524.8 673.2 L524.8 672.1 L528.1 672.1 L528.1 675.4 L530.4 675.4 L530.4 677.7 L532.0 677.7 L532.0 669.9 L535.9 669.9 L535.9 668.8 L539.2 668.8 L539.2 664.4 L540.0 664.4 L540.0 664.4 L542.8 664.4 L542.8 669.9 L545.0 669.9 L545.0 668.8 L547.2 668.8 L547.2 660.5 L550.0 660.5 L550.0 655.5 L553.3 655.5 L553.3 657.7 L555.0 657.7 L555.0 648.3 L557.7 648.3 L557.7 657.1 L560.0 657.1 L560.0 653.3 L562.7 653.3 L562.7 661.0 L566.6 661.0 L566.6 658.8 L569.9 658.8 L569.9 647.2 L572.2 647.2 L572.2 644.4 L574.9 644.4 L574.9 654.9 L579.4 654.9 L579.4 653.8 L582.1 653.8 L582.1 652.2 L584.9 652.2 L584.9 658.8 L587.7 658.8 L587.7 642.2 L591.0 642.2 L591.0 653.3 L592.7 653.3 L592.7 656.0 L595.4 656.0 L595.4 660.5 L597.7 660.5 L597.7 657.1 L601.0 657.1 L601.0 666.6 L603.2 666.6 L603.2 658.8 L605.4 658.8 L605.4 671.0 L607.6 671.0 L607.6 660.5 L610.4 660.5 L610.4 676.6 L613.2 676.6 L613.2 660.5 L616.0 660.5 L616.0 663.8 L617.6 663.8 L617.6 649.4 L620.9 649.4 L620.9 654.9 L625.4 654.9 L625.4 653.3 L627.6 653.3 L627.6 640.0 L630.9 640.0 L630.9 657.1 L633.1 657.1 L633.1 661.6 L635.4 661.6 L635.4 658.8 L647.8 658.8 L648 687 Z" fill="#00ff00"/><path d="M431 556.5h6M431 622.5h6M431 688.5h6" stroke="#000" stroke-width="1" fill="none" shape-rendering="crispEdges"/><path d="M437.5 687v10.5M462.5 687v5.5M487.5 687v10.5M512.5 687v5.5M538.5 687v10.5M563.5 687v5.5M588.5 687v10.5M613.5 687v5.5M638.5 687v10.5M663.5 687v5.5M688.5 687v10.5M713.5 687v5.5M738.5 687v10.5" stroke="#000" stroke-width="1" fill="none" shape-rendering="crispEdges"/><defs><linearGradient id="btng" x1="0" y1="0" x2="0" y2="1"><stop offset="0" stop-color="#ffffff"/><stop offset="1" stop-color="#c4d6ea"/></linearGradient><linearGradient id="ddg" x1="0" y1="0" x2="0" y2="1"><stop offset="0" stop-color="#f6f6f6"/><stop offset="1" stop-color="#e2e6ea"/></linearGradient></defs><rect x="799.5" y="107.5" width="87" height="22" fill="#aa0000" stroke="#8a8a8a" stroke-width="1"/><rect x="892.5" y="107.5" width="83" height="22" fill="#00a000" stroke="#8a8a8a" stroke-width="1"/><rect x="799.5" y="165.5" width="145" height="15.5" fill="#ffffff" stroke="#8a8a8a" stroke-width="1"/><rect x="800.5" y="166.5" width="143" height="1" fill="#dddddd"/><rect x="951.5" y="163.5" width="23" height="20" fill="url(#btng)" stroke="#8c9cb0" stroke-width="1"/><rect x="953.5" y="165.5" width="19" height="16" fill="none" stroke="#a8b8cc" stroke-width="1"/><rect x="803.5" y="194.5" width="31" height="20" fill="url(#btng)" stroke="#8c9cb0" stroke-width="1"/><rect x="840.5" y="194.5" width="23" height="20" fill="url(#btng)" stroke="#8c9cb0" stroke-width="1"/><rect x="869.5" y="194.5" width="15" height="20" fill="url(#btng)" stroke="#8c9cb0" stroke-width="1"/><rect x="890.5" y="194.5" width="15" height="20" fill="url(#btng)" stroke="#8c9cb0" stroke-width="1"/><rect x="911.5" y="194.5" width="23" height="20" fill="url(#btng)" stroke="#8c9cb0" stroke-width="1"/><rect x="940.5" y="194.5" width="31" height="20" fill="url(#btng)" stroke="#8c9cb0" stroke-width="1"/><rect x="894.5" y="225.5" width="70" height="23" fill="url(#ddg)" stroke="#8c9cb0" stroke-width="1"/><rect x="945.5" y="225.5" width="19" height="23" fill="url(#btng)" stroke="#8c9cb0" stroke-width="1"/><path d="M950 235 L959.6 235 L954.8 240.5 Z" fill="#222"/><text x="10" y="18.8" font-size="10" font-weight="normal" text-anchor="start" fill="#000" stroke="#000" stroke-width="0.2" textLength="80.60" lengthAdjust="spacingAndGlyphs" >Alt (1000ft MSL)</text><text x="163.3" y="18.9" font-size="10" font-weight="bold" text-anchor="start" fill="#000" textLength="65.10" lengthAdjust="spacingAndGlyphs"  stroke="#000" stroke-width="0.3">Reflectivity</text><text x="343.5" y="18.9" font-size="10" font-weight="normal" text-anchor="start" fill="#000" stroke="#000" stroke-width="0.2" textLength="39.00" lengthAdjust="spacingAndGlyphs" >dbz-min</text><text x="29.6" y="25.9" font-size="8.3" font-weight="bold" text-anchor="start" fill="#000" textLength="9.50" lengthAdjust="spacingAndGlyphs" >26</text><text x="29.6" y="36.099999999999994" font-size="8.3" font-weight="bold" text-anchor="start" fill="#000" textLength="9.50" lengthAdjust="spacingAndGlyphs" >24</text><text x="29.6" y="48.099999999999994" font-size="8.3" font-weight="bold" text-anchor="start" fill="#000" textLength="9.50" lengthAdjust="spacingAndGlyphs" >22</text><text x="29.6" y="60.099999999999994" font-size="8.3" font-weight="bold" text-anchor="start" fill="#000" textLength="9.50" lengthAdjust="spacingAndGlyphs" >20</text><text x="29.6" y="72.1" font-size="8.3" font-weight="bold" text-anchor="start" fill="#000" textLength="9.50" lengthAdjust="spacingAndGlyphs" >18</text><text x="29.6" y="84.1" font-size="8.3" font-weight="bold" text-anchor="start" fill="#000" textLength="9.50" lengthAdjust="spacingAndGlyphs" >16</text><text x="29.6" y="96.1" font-size="8.3" font-weight="bold" text-anchor="start" fill="#000" textLength="9.50" lengthAdjust="spacingAndGlyphs" >14</text><text x="29.6" y="108.1" font-size="8.3" font-weight="bold" text-anchor="start" fill="#000" textLength="9.50" lengthAdjust="spacingAndGlyphs" >12</text><text x="29.6" y="120.1" font-size="8.3" font-weight="bold" text-anchor="start" fill="#000" textLength="9.50" lengthAdjust="spacingAndGlyphs" >10</text><text x="34.4" y="132.10000000000002" font-size="8.3" font-weight="bold" text-anchor="start" fill="#000" textLength="4.70" lengthAdjust="spacingAndGlyphs" >8</text><text x="34.4" y="144.10000000000002" font-size="8.3" font-weight="bold" text-anchor="start" fill="#000" textLength="4.70" lengthAdjust="spacingAndGlyphs" >6</text><text x="34.4" y="156.10000000000002" font-size="8.3" font-weight="bold" text-anchor="start" fill="#000" textLength="4.70" lengthAdjust="spacingAndGlyphs" >4</text><text x="34.4" y="168.10000000000002" font-size="8.3" font-weight="bold" text-anchor="start" fill="#000" textLength="4.70" lengthAdjust="spacingAndGlyphs" >2</text><text x="34.4" y="173.8" font-size="8.3" font-weight="bold" text-anchor="start" fill="#000" textLength="4.70" lengthAdjust="spacingAndGlyphs" >0</text><text x="40.7" y="203.3" font-size="8.3" font-weight="bold" text-anchor="start" fill="#000" textLength="22.10" lengthAdjust="spacingAndGlyphs" >21:31</text><text x="90.93333333333332" y="203.3" font-size="8.3" font-weight="bold" text-anchor="start" fill="#000" textLength="22.10" lengthAdjust="spacingAndGlyphs" >21:51</text><text x="141.16666666666663" y="203.3" font-size="8.3" font-weight="bold" text-anchor="start" fill="#000" textLength="22.10" lengthAdjust="spacingAndGlyphs" >22:11</text><text x="191.39999999999998" y="203.3" font-size="8.3" font-weight="bold" text-anchor="start" fill="#000" textLength="22.10" lengthAdjust="spacingAndGlyphs" >22:31</text><text x="241.6333333333333" y="203.3" font-size="8.3" font-weight="bold" text-anchor="start" fill="#000" textLength="22.10" lengthAdjust="spacingAndGlyphs" >22:51</text><text x="291.8666666666666" y="203.3" font-size="8.3" font-weight="bold" text-anchor="start" fill="#000" textLength="22.10" lengthAdjust="spacingAndGlyphs" >23:11</text><text x="342.09999999999997" y="203.3" font-size="8.3" font-weight="bold" text-anchor="start" fill="#000" textLength="22.10" lengthAdjust="spacingAndGlyphs" >23:31</text><text x="363.3" y="26.4" font-size="8.3" font-weight="normal" text-anchor="start" fill="#000" stroke="#000" stroke-width="0.12" textLength="14.30" lengthAdjust="spacingAndGlyphs" >130</text><text x="363.3" y="36" font-size="8.3" font-weight="normal" text-anchor="start" fill="#000" stroke="#000" stroke-width="0.12" textLength="14.30" lengthAdjust="spacingAndGlyphs" >120</text><text x="363.3" y="48" font-size="8.3" font-weight="normal" text-anchor="start" fill="#000" stroke="#000" stroke-width="0.12" textLength="14.30" lengthAdjust="spacingAndGlyphs" >110</text><text x="363.3" y="60" font-size="8.3" font-weight="normal" text-anchor="start" fill="#000" stroke="#000" stroke-width="0.12" textLength="14.30" lengthAdjust="spacingAndGlyphs" >100</text><text x="363.3" y="72" font-size="8.3" font-weight="normal" text-anchor="start" fill="#000" stroke="#000" stroke-width="0.12" textLength="9.50" lengthAdjust="spacingAndGlyphs" >90</text><text x="363.3" y="84" font-size="8.3" font-weight="normal" text-anchor="start" fill="#000" stroke="#000" stroke-width="0.12" textLength="9.50" lengthAdjust="spacingAndGlyphs" >80</text><text x="363.3" y="96" font-size="8.3" font-weight="normal" text-anchor="start" fill="#000" stroke="#000" stroke-width="0.12" textLength="9.50" lengthAdjust="spacingAndGlyphs" >70</text><text x="363.3" y="108" font-size="8.3" font-weight="normal" text-anchor="start" fill="#000" stroke="#000" stroke-width="0.12" textLength="9.50" lengthAdjust="spacingAndGlyphs" >60</text><text x="363.3" y="120" font-size="8.3" font-weight="normal" text-anchor="start" fill="#000" stroke="#000" stroke-width="0.12" textLength="9.50" lengthAdjust="spacingAndGlyphs" >50</text><text x="363.3" y="132" font-size="8.3" font-weight="normal" text-anchor="start" fill="#000" stroke="#000" stroke-width="0.12" textLength="9.50" lengthAdjust="spacingAndGlyphs" >40</text><text x="363.3" y="144" font-size="8.3" font-weight="normal" text-anchor="start" fill="#000" stroke="#000" stroke-width="0.12" textLength="9.50" lengthAdjust="spacingAndGlyphs" >30</text><text x="363.3" y="156" font-size="8.3" font-weight="normal" text-anchor="start" fill="#000" stroke="#000" stroke-width="0.12" textLength="9.50" lengthAdjust="spacingAndGlyphs" >20</text><text x="363.3" y="168" font-size="8.3" font-weight="normal" text-anchor="start" fill="#000" stroke="#000" stroke-width="0.12" textLength="9.50" lengthAdjust="spacingAndGlyphs" >10</text><text x="363.3" y="177" font-size="8.3" font-weight="normal" text-anchor="start" fill="#000" stroke="#000" stroke-width="0.12" textLength="4.70" lengthAdjust="spacingAndGlyphs" >0</text><text x="10.8" y="225.9" font-size="10" font-weight="bold" text-anchor="start" fill="#000" textLength="62.90" lengthAdjust="spacingAndGlyphs"  stroke="#000" stroke-width="0.3">Instrument</text><text x="177.7" y="226.4" font-size="10" font-weight="bold" text-anchor="start" fill="#000" textLength="37.20" lengthAdjust="spacingAndGlyphs"  stroke="#000" stroke-width="0.3">Status</text><text x="339.5" y="226.4" font-size="10" font-weight="bold" text-anchor="start" fill="#000" textLength="43.00" lengthAdjust="spacingAndGlyphs"  stroke="#000" stroke-width="0.3">Current</text><text x="10.8" y="238.9" font-size="8.2" font-weight="normal" text-anchor="start" fill="#000" stroke="#000" stroke-width="0.12" textLength="27.70" lengthAdjust="spacingAndGlyphs" >RADAR</text><text x="10.8" y="252.9" font-size="8.2" font-weight="normal" text-anchor="start" fill="#000" stroke="#000" stroke-width="0.12" textLength="27.80" lengthAdjust="spacingAndGlyphs" >CLMTR</text><text x="10.8" y="266.9" font-size="8.2" font-weight="normal" text-anchor="start" fill="#000" stroke="#000" stroke-width="0.12" textLength="24.40" lengthAdjust="spacingAndGlyphs" >RDMR</text><text x="10.8" y="280.9" font-size="8.2" font-weight="normal" text-anchor="start" fill="#000" stroke="#000" stroke-width="0.12" textLength="21.20" lengthAdjust="spacingAndGlyphs" >DRY?</text><text x="10" y="315.1" font-size="10" font-weight="normal" text-anchor="start" fill="#000" stroke="#000" stroke-width="0.2" textLength="80.60" lengthAdjust="spacingAndGlyphs" >Alt (1000ft MSL)</text><text x="162" y="316" font-size="10" font-weight="bold" text-anchor="start" fill="#000" textLength="68.60" lengthAdjust="spacingAndGlyphs"  stroke="#000" stroke-width="0.3">Icing Hazard</text><text x="341" y="315.9" font-size="10" font-weight="normal" text-anchor="start" fill="#000" stroke="#000" stroke-width="0.2" textLength="41.60" lengthAdjust="spacingAndGlyphs" >Severity</text><text x="29.6" y="321.4" font-size="8.3" font-weight="bold" text-anchor="start" fill="#000" textLength="9.50" lengthAdjust="spacingAndGlyphs" >26</text><text x="29.6" y="332.1" font-size="8.3" font-weight="bold" text-anchor="start" fill="#000" textLength="9.50" lengthAdjust="spacingAndGlyphs" >24</text><text x="29.6" y="344.1" font-size="8.3" font-weight="bold" text-anchor="start" fill="#000" textLength="9.50" lengthAdjust="spacingAndGlyphs" >22</text><text x="29.6" y="356.1" font-size="8.3" font-weight="bold" text-anchor="start" fill="#000" textLength="9.50" lengthAdjust="spacingAndGlyphs" >20</text><text x="29.6" y="368.1" font-size="8.3" font-weight="bold" text-anchor="start" fill="#000" textLength="9.50" lengthAdjust="spacingAndGlyphs" >18</text><text x="29.6" y="380.1" font-size="8.3" font-weight="bold" text-anchor="start" fill="#000" textLength="9.50" lengthAdjust="spacingAndGlyphs" >16</text><text x="29.6" y="392.1" font-size="8.3" font-weight="bold" text-anchor="start" fill="#000" textLength="9.50" lengthAdjust="spacingAndGlyphs" >14</text><text x="29.6" y="404.1" font-size="8.3" font-weight="bold" text-anchor="start" fill="#000" textLength="9.50" lengthAdjust="spacingAndGlyphs" >12</text><text x="29.6" y="416.1" font-size="8.3" font-weight="bold" text-anchor="start" fill="#000" textLength="9.50" lengthAdjust="spacingAndGlyphs" >10</text><text x="34.4" y="428.1" font-size="8.3" font-weight="bold" text-anchor="start" fill="#000" textLength="4.70" lengthAdjust="spacingAndGlyphs" >8</text><text x="34.4" y="440.1" font-size="8.3" font-weight="bold" text-anchor="start" fill="#000" textLength="4.70" lengthAdjust="spacingAndGlyphs" >6</text><text x="34.4" y="452.1" font-size="8.3" font-weight="bold" text-anchor="start" fill="#000" textLength="4.70" lengthAdjust="spacingAndGlyphs" >4</text><text x="34.4" y="464.1" font-size="8.3" font-weight="bold" text-anchor="start" fill="#000" textLength="4.70" lengthAdjust="spacingAndGlyphs" >2</text><text x="34.4" y="470.1" font-size="8.3" font-weight="bold" text-anchor="start" fill="#000" textLength="4.70" lengthAdjust="spacingAndGlyphs" >0</text><text x="40.7" y="499.3" font-size="8.3" font-weight="bold" text-anchor="start" fill="#000" textLength="22.10" lengthAdjust="spacingAndGlyphs" >21:31</text><text x="90.93333333333332" y="499.3" font-size="8.3" font-weight="bold" text-anchor="start" fill="#000" textLength="22.10" lengthAdjust="spacingAndGlyphs" >21:51</text><text x="141.16666666666663" y="499.3" font-size="8.3" font-weight="bold" text-anchor="start" fill="#000" textLength="22.10" lengthAdjust="spacingAndGlyphs" >22:11</text><text x="191.39999999999998" y="499.3" font-size="8.3" font-weight="bold" text-anchor="start" fill="#000" textLength="22.10" lengthAdjust="spacingAndGlyphs" >22:31</text><text x="241.6333333333333" y="499.3" font-size="8.3" font-weight="bold" text-anchor="start" fill="#000" textLength="22.10" lengthAdjust="spacingAndGlyphs" >22:51</text><text x="291.8666666666666" y="499.3" font-size="8.3" font-weight="bold" text-anchor="start" fill="#000" textLength="22.10" lengthAdjust="spacingAndGlyphs" >23:11</text><text x="342.09999999999997" y="499.3" font-size="8.3" font-weight="bold" text-anchor="start" fill="#000" textLength="22.10" lengthAdjust="spacingAndGlyphs" >23:31</text><text x="357.8" y="322.6" font-size="8" font-weight="normal" text-anchor="start" fill="#000" stroke="#000" stroke-width="0.12" textLength="18.60" lengthAdjust="spacingAndGlyphs" >HVY</text><text x="357.8" y="343.3" font-size="8" font-weight="normal" text-anchor="start" fill="#000" stroke="#000" stroke-width="0.12" textLength="25.10" lengthAdjust="spacingAndGlyphs" >M.HVY</text><text x="357.8" y="366.3" font-size="8" font-weight="normal" text-anchor="start" fill="#000" stroke="#000" stroke-width="0.12" textLength="18.10" lengthAdjust="spacingAndGlyphs" >MOD</text><text x="357.8" y="389" font-size="8" font-weight="normal" text-anchor="start" fill="#000" stroke="#000" stroke-width="0.12" textLength="23.60" lengthAdjust="spacingAndGlyphs" >L.MOD</text><text x="357.8" y="412.3" font-size="8" font-weight="normal" text-anchor="start" fill="#000" stroke="#000" stroke-width="0.12" textLength="16.60" lengthAdjust="spacingAndGlyphs" >LOT</text><text x="357.8" y="435.3" font-size="8" font-weight="normal" text-anchor="start" fill="#000" stroke="#000" stroke-width="0.12" textLength="22.10" lengthAdjust="spacingAndGlyphs" >T.LOT</text><text x="357.8" y="458.3" font-size="8" font-weight="normal" text-anchor="start" fill="#000" stroke="#000" stroke-width="0.12" textLength="17.60" lengthAdjust="spacingAndGlyphs" >TRC</text><text x="357.8" y="476.5" font-size="8" font-weight="normal" text-anchor="start" fill="#000" stroke="#000" stroke-width="0.12" textLength="24.60" lengthAdjust="spacingAndGlyphs" >NONE</text><text x="10" y="521.7" font-size="10" font-weight="normal" text-anchor="start" fill="#000" stroke="#000" stroke-width="0.2" textLength="80.60" lengthAdjust="spacingAndGlyphs" >Alt (1000ft MSL)</text><text x="170.7" y="521.4" font-size="10" font-weight="bold" text-anchor="start" fill="#000" textLength="51.70" lengthAdjust="spacingAndGlyphs"  stroke="#000" stroke-width="0.3">Drop Size</text><text x="289.4" y="521.4" font-size="10" font-weight="normal" text-anchor="start" fill="#000" stroke="#000" stroke-width="0.2" textLength="92.60" lengthAdjust="spacingAndGlyphs" >Drop Size(microns)</text><text x="29.6" y="528.0" font-size="8.3" font-weight="bold" text-anchor="start" fill="#000" textLength="9.50" lengthAdjust="spacingAndGlyphs" >26</text><text x="29.6" y="538.8" font-size="8.3" font-weight="bold" text-anchor="start" fill="#000" textLength="9.50" lengthAdjust="spacingAndGlyphs" >24</text><text x="29.6" y="550.8" font-size="8.3" font-weight="bold" text-anchor="start" fill="#000" textLength="9.50" lengthAdjust="spacingAndGlyphs" >22</text><text x="29.6" y="562.8" font-size="8.3" font-weight="bold" text-anchor="start" fill="#000" textLength="9.50" lengthAdjust="spacingAndGlyphs" >20</text><text x="29.6" y="574.8" font-size="8.3" font-weight="bold" text-anchor="start" fill="#000" textLength="9.50" lengthAdjust="spacingAndGlyphs" >18</text><text x="29.6" y="586.8" font-size="8.3" font-weight="bold" text-anchor="start" fill="#000" textLength="9.50" lengthAdjust="spacingAndGlyphs" >16</text><text x="29.6" y="598.8" font-size="8.3" font-weight="bold" text-anchor="start" fill="#000" textLength="9.50" lengthAdjust="spacingAndGlyphs" >14</text><text x="29.6" y="610.8" font-size="8.3" font-weight="bold" text-anchor="start" fill="#000" textLength="9.50" lengthAdjust="spacingAndGlyphs" >12</text><text x="29.6" y="622.8" font-size="8.3" font-weight="bold" text-anchor="start" fill="#000" textLength="9.50" lengthAdjust="spacingAndGlyphs" >10</text><text x="34.4" y="634.8" font-size="8.3" font-weight="bold" text-anchor="start" fill="#000" textLength="4.70" lengthAdjust="spacingAndGlyphs" >8</text><text x="34.4" y="646.8" font-size="8.3" font-weight="bold" text-anchor="start" fill="#000" textLength="4.70" lengthAdjust="spacingAndGlyphs" >6</text><text x="34.4" y="658.8" font-size="8.3" font-weight="bold" text-anchor="start" fill="#000" textLength="4.70" lengthAdjust="spacingAndGlyphs" >4</text><text x="34.4" y="670.8" font-size="8.3" font-weight="bold" text-anchor="start" fill="#000" textLength="4.70" lengthAdjust="spacingAndGlyphs" >2</text><text x="34.4" y="677.0999999999999" font-size="8.3" font-weight="bold" text-anchor="start" fill="#000" textLength="4.70" lengthAdjust="spacingAndGlyphs" >0</text><text x="40.7" y="706.6" font-size="8.3" font-weight="bold" text-anchor="start" fill="#000" textLength="22.10" lengthAdjust="spacingAndGlyphs" >21:31</text><text x="90.93333333333332" y="706.6" font-size="8.3" font-weight="bold" text-anchor="start" fill="#000" textLength="22.10" lengthAdjust="spacingAndGlyphs" >21:51</text><text x="141.16666666666663" y="706.6" font-size="8.3" font-weight="bold" text-anchor="start" fill="#000" textLength="22.10" lengthAdjust="spacingAndGlyphs" >22:11</text><text x="191.39999999999998" y="706.6" font-size="8.3" font-weight="bold" text-anchor="start" fill="#000" textLength="22.10" lengthAdjust="spacingAndGlyphs" >22:31</text><text x="241.6333333333333" y="706.6" font-size="8.3" font-weight="bold" text-anchor="start" fill="#000" textLength="22.10" lengthAdjust="spacingAndGlyphs" >22:51</text><text x="291.8666666666666" y="706.6" font-size="8.3" font-weight="bold" text-anchor="start" fill="#000" textLength="22.10" lengthAdjust="spacingAndGlyphs" >23:11</text><text x="342.09999999999997" y="706.6" font-size="8.3" font-weight="bold" text-anchor="start" fill="#000" textLength="22.10" lengthAdjust="spacingAndGlyphs" >23:31</text><text x="363.3" y="529" font-size="8.3" font-weight="normal" text-anchor="start" fill="#000" stroke="#000" stroke-width="0.12" textLength="9.50" lengthAdjust="spacingAndGlyphs" >60</text><text x="363.3" y="554" font-size="8.3" font-weight="normal" text-anchor="start" fill="#000" stroke="#000" stroke-width="0.12" textLength="9.50" lengthAdjust="spacingAndGlyphs" >50</text><text x="363.3" y="581" font-size="8.3" font-weight="normal" text-anchor="start" fill="#000" stroke="#000" stroke-width="0.12" textLength="9.50" lengthAdjust="spacingAndGlyphs" >40</text><text x="363.3" y="608" font-size="8.3" font-weight="normal" text-anchor="start" fill="#000" stroke="#000" stroke-width="0.12" textLength="9.50" lengthAdjust="spacingAndGlyphs" >30</text><text x="363.3" y="635" font-size="8.3" font-weight="normal" text-anchor="start" fill="#000" stroke="#000" stroke-width="0.12" textLength="9.50" lengthAdjust="spacingAndGlyphs" >20</text><text x="363.3" y="662" font-size="8.3" font-weight="normal" text-anchor="start" fill="#000" stroke="#000" stroke-width="0.12" textLength="9.50" lengthAdjust="spacingAndGlyphs" >10</text><text x="363.3" y="684.5" font-size="8.3" font-weight="normal" text-anchor="start" fill="#000" stroke="#000" stroke-width="0.12" textLength="4.70" lengthAdjust="spacingAndGlyphs" >0</text><text x="402.5" y="17.9" font-size="10" font-weight="normal" text-anchor="start" fill="#000" stroke="#000" stroke-width="0.2" textLength="80.60" lengthAdjust="spacingAndGlyphs" >Alt (1000ft MSL)</text><text x="421.6" y="24.7" font-size="8.3" font-weight="normal" text-anchor="start" fill="#000" stroke="#000" stroke-width="0.12" textLength="9.50" lengthAdjust="spacingAndGlyphs" >25</text><text x="421.6" y="49.8" font-size="8.3" font-weight="normal" text-anchor="start" fill="#000" stroke="#000" stroke-width="0.12" textLength="9.50" lengthAdjust="spacingAndGlyphs" >20</text><text x="421.6" y="77.0" font-size="8.3" font-weight="normal" text-anchor="start" fill="#000" stroke="#000" stroke-width="0.12" textLength="9.50" lengthAdjust="spacingAndGlyphs" >15</text><text x="421.6" y="104.2" font-size="8.3" font-weight="normal" text-anchor="start" fill="#000" stroke="#000" stroke-width="0.12" textLength="9.50" lengthAdjust="spacingAndGlyphs" >10</text><text x="426.4" y="131.10000000000002" font-size="8.3" font-weight="normal" text-anchor="start" fill="#000" stroke="#000" stroke-width="0.12" textLength="4.70" lengthAdjust="spacingAndGlyphs" >5</text><text x="426.4" y="152.89999999999998" font-size="8.3" font-weight="normal" text-anchor="start" fill="#000" stroke="#000" stroke-width="0.12" textLength="4.70" lengthAdjust="spacingAndGlyphs" >0</text><text x="432.7" y="173.5" font-size="8.3" font-weight="normal" text-anchor="start" fill="#000" stroke="#000" stroke-width="0.12" textLength="22.10" lengthAdjust="spacingAndGlyphs" >21:31</text><text x="482.95" y="173.5" font-size="8.3" font-weight="normal" text-anchor="start" fill="#000" stroke="#000" stroke-width="0.12" textLength="22.10" lengthAdjust="spacingAndGlyphs" >21:51</text><text x="533.2" y="173.5" font-size="8.3" font-weight="normal" text-anchor="start" fill="#000" stroke="#000" stroke-width="0.12" textLength="22.10" lengthAdjust="spacingAndGlyphs" >22:11</text><text x="583.45" y="173.5" font-size="8.3" font-weight="normal" text-anchor="start" fill="#000" stroke="#000" stroke-width="0.12" textLength="22.10" lengthAdjust="spacingAndGlyphs" >22:31</text><text x="633.7" y="173.5" font-size="8.3" font-weight="normal" text-anchor="start" fill="#000" stroke="#000" stroke-width="0.12" textLength="22.10" lengthAdjust="spacingAndGlyphs" >22:51</text><text x="683.95" y="173.5" font-size="8.3" font-weight="normal" text-anchor="start" fill="#000" stroke="#000" stroke-width="0.12" textLength="22.10" lengthAdjust="spacingAndGlyphs" >23:11</text><text x="734.2" y="173.5" font-size="8.3" font-weight="normal" text-anchor="start" fill="#000" stroke="#000" stroke-width="0.12" textLength="22.10" lengthAdjust="spacingAndGlyphs" >23:31</text><text x="402.5" y="195.7" font-size="10" font-weight="normal" text-anchor="start" fill="#000" stroke="#000" stroke-width="0.2" textLength="80.60" lengthAdjust="spacingAndGlyphs" >Alt (1000ft MSL)</text><text x="719" y="195.4" font-size="10" font-weight="normal" text-anchor="start" fill="#000" stroke="#000" stroke-width="0.2" textLength="55.60" lengthAdjust="spacingAndGlyphs" >LWC(g/m3)</text><text x="421.6" y="202.70000000000002" font-size="8.3" font-weight="normal" text-anchor="start" fill="#000" stroke="#000" stroke-width="0.12" textLength="9.50" lengthAdjust="spacingAndGlyphs" >25</text><text x="421.6" y="228.4" font-size="8.3" font-weight="normal" text-anchor="start" fill="#000" stroke="#000" stroke-width="0.12" textLength="9.50" lengthAdjust="spacingAndGlyphs" >20</text><text x="421.6" y="255.3" font-size="8.3" font-weight="normal" text-anchor="start" fill="#000" stroke="#000" stroke-width="0.12" textLength="9.50" lengthAdjust="spacingAndGlyphs" >15</text><text x="421.6" y="282.2" font-size="8.3" font-weight="normal" text-anchor="start" fill="#000" stroke="#000" stroke-width="0.12" textLength="9.50" lengthAdjust="spacingAndGlyphs" >10</text><text x="426.4" y="309.0" font-size="8.3" font-weight="normal" text-anchor="start" fill="#000" stroke="#000" stroke-width="0.12" textLength="4.70" lengthAdjust="spacingAndGlyphs" >5</text><text x="426.4" y="329.9" font-size="8.3" font-weight="normal" text-anchor="start" fill="#000" stroke="#000" stroke-width="0.12" textLength="4.70" lengthAdjust="spacingAndGlyphs" >0</text><text x="432.7" y="351.5" font-size="8.3" font-weight="normal" text-anchor="start" fill="#000" stroke="#000" stroke-width="0.12" textLength="22.10" lengthAdjust="spacingAndGlyphs" >21:31</text><text x="482.95" y="351.5" font-size="8.3" font-weight="normal" text-anchor="start" fill="#000" stroke="#000" stroke-width="0.12" textLength="22.10" lengthAdjust="spacingAndGlyphs" >21:51</text><text x="533.2" y="351.5" font-size="8.3" font-weight="normal" text-anchor="start" fill="#000" stroke="#000" stroke-width="0.12" textLength="22.10" lengthAdjust="spacingAndGlyphs" >22:11</text><text x="583.45" y="351.5" font-size="8.3" font-weight="normal" text-anchor="start" fill="#000" stroke="#000" stroke-width="0.12" textLength="22.10" lengthAdjust="spacingAndGlyphs" >22:31</text><text x="633.7" y="351.5" font-size="8.3" font-weight="normal" text-anchor="start" fill="#000" stroke="#000" stroke-width="0.12" textLength="22.10" lengthAdjust="spacingAndGlyphs" >22:51</text><text x="683.95" y="351.5" font-size="8.3" font-weight="normal" text-anchor="start" fill="#000" stroke="#000" stroke-width="0.12" textLength="22.10" lengthAdjust="spacingAndGlyphs" >23:11</text><text x="734.2" y="351.5" font-size="8.3" font-weight="normal" text-anchor="start" fill="#000" stroke="#000" stroke-width="0.12" textLength="22.10" lengthAdjust="spacingAndGlyphs" >23:31</text><text x="755.3" y="202.4" font-size="8.3" font-weight="normal" text-anchor="start" fill="#000" stroke="#000" stroke-width="0.12" textLength="12.80" lengthAdjust="spacingAndGlyphs" >0.2</text><text x="755.3" y="269" font-size="8.3" font-weight="normal" text-anchor="start" fill="#000" stroke="#000" stroke-width="0.12" textLength="12.80" lengthAdjust="spacingAndGlyphs" >0.1</text><text x="755.3" y="333.7" font-size="8.3" font-weight="normal" text-anchor="start" fill="#000" stroke="#000" stroke-width="0.12" textLength="12.80" lengthAdjust="spacingAndGlyphs" >0.0</text><text x="402.5" y="374.2" font-size="10" font-weight="normal" text-anchor="start" fill="#000" stroke="#000" stroke-width="0.2" textLength="80.60" lengthAdjust="spacingAndGlyphs" >Alt (1000ft MSL)</text><text x="732" y="374.2" font-size="10" font-weight="normal" text-anchor="start" fill="#000" stroke="#000" stroke-width="0.2" textLength="41.60" lengthAdjust="spacingAndGlyphs" >Temp(K)</text><text x="421.6" y="380.8" font-size="8.3" font-weight="normal" text-anchor="start" fill="#000" stroke="#000" stroke-width="0.12" textLength="9.50" lengthAdjust="spacingAndGlyphs" >34</text><text x="413.5" y="412.8" font-size="8.3" font-weight="normal" text-anchor="start" fill="#000" stroke="#000" stroke-width="0.12" textLength="17.60" lengthAdjust="spacingAndGlyphs" >25.5</text><text x="421.6" y="447.40000000000003" font-size="8.3" font-weight="normal" text-anchor="start" fill="#000" stroke="#000" stroke-width="0.12" textLength="9.50" lengthAdjust="spacingAndGlyphs" >17</text><text x="418.3" y="481.2" font-size="8.3" font-weight="normal" text-anchor="start" fill="#000" stroke="#000" stroke-width="0.12" textLength="12.80" lengthAdjust="spacingAndGlyphs" >8.5</text><text x="426.4" y="509.09999999999997" font-size="8.3" font-weight="normal" text-anchor="start" fill="#000" stroke="#000" stroke-width="0.12" textLength="4.70" lengthAdjust="spacingAndGlyphs" >0</text><text x="432.7" y="529" font-size="8.3" font-weight="normal" text-anchor="start" fill="#000" stroke="#000" stroke-width="0.12" textLength="22.10" lengthAdjust="spacingAndGlyphs" >21:31</text><text x="482.95" y="529" font-size="8.3" font-weight="normal" text-anchor="start" fill="#000" stroke="#000" stroke-width="0.12" textLength="22.10" lengthAdjust="spacingAndGlyphs" >21:51</text><text x="533.2" y="529" font-size="8.3" font-weight="normal" text-anchor="start" fill="#000" stroke="#000" stroke-width="0.12" textLength="22.10" lengthAdjust="spacingAndGlyphs" >22:11</text><text x="583.45" y="529" font-size="8.3" font-weight="normal" text-anchor="start" fill="#000" stroke="#000" stroke-width="0.12" textLength="22.10" lengthAdjust="spacingAndGlyphs" >22:31</text><text x="633.7" y="529" font-size="8.3" font-weight="normal" text-anchor="start" fill="#000" stroke="#000" stroke-width="0.12" textLength="22.10" lengthAdjust="spacingAndGlyphs" >22:51</text><text x="683.95" y="529" font-size="8.3" font-weight="normal" text-anchor="start" fill="#000" stroke="#000" stroke-width="0.12" textLength="22.10" lengthAdjust="spacingAndGlyphs" >23:11</text><text x="734.2" y="529" font-size="8.3" font-weight="normal" text-anchor="start" fill="#000" stroke="#000" stroke-width="0.12" textLength="22.10" lengthAdjust="spacingAndGlyphs" >23:31</text><text x="755.3" y="381" font-size="8.3" font-weight="normal" text-anchor="start" fill="#000" stroke="#000" stroke-width="0.12" textLength="14.30" lengthAdjust="spacingAndGlyphs" >290</text><text x="755.3" y="413" font-size="8.3" font-weight="normal" text-anchor="start" fill="#000" stroke="#000" stroke-width="0.12" textLength="14.30" lengthAdjust="spacingAndGlyphs" >270</text><text x="755.3" y="447" font-size="8.3" font-weight="normal" text-anchor="start" fill="#000" stroke="#000" stroke-width="0.12" textLength="14.30" lengthAdjust="spacingAndGlyphs" >250</text><text x="755.3" y="481" font-size="8.3" font-weight="normal" text-anchor="start" fill="#000" stroke="#000" stroke-width="0.12" textLength="14.30" lengthAdjust="spacingAndGlyphs" >230</text><text x="755.3" y="510" font-size="8.3" font-weight="normal" text-anchor="start" fill="#000" stroke="#000" stroke-width="0.12" textLength="14.30" lengthAdjust="spacingAndGlyphs" >210</text><text x="402.5" y="551.9" font-size="10" font-weight="normal" text-anchor="start" fill="#000" stroke="#000" stroke-width="0.2" textLength="18.60" lengthAdjust="spacingAndGlyphs" >ILW</text><text x="426.4" y="559.0" font-size="8.3" font-weight="normal" text-anchor="start" fill="#000" stroke="#000" stroke-width="0.12" textLength="4.70" lengthAdjust="spacingAndGlyphs" >2</text><text x="426.4" y="624.8" font-size="8.3" font-weight="normal" text-anchor="start" fill="#000" stroke="#000" stroke-width="0.12" textLength="4.70" lengthAdjust="spacingAndGlyphs" >1</text><text x="426.4" y="686.7" font-size="8.3" font-weight="normal" text-anchor="start" fill="#000" stroke="#000" stroke-width="0.12" textLength="4.70" lengthAdjust="spacingAndGlyphs" >0</text><text x="432.7" y="707.5" font-size="8.3" font-weight="normal" text-anchor="start" fill="#000" stroke="#000" stroke-width="0.12" textLength="22.10" lengthAdjust="spacingAndGlyphs" >21:31</text><text x="482.95" y="707.5" font-size="8.3" font-weight="normal" text-anchor="start" fill="#000" stroke="#000" stroke-width="0.12" textLength="22.10" lengthAdjust="spacingAndGlyphs" >21:51</text><text x="533.2" y="707.5" font-size="8.3" font-weight="normal" text-anchor="start" fill="#000" stroke="#000" stroke-width="0.12" textLength="22.10" lengthAdjust="spacingAndGlyphs" >22:11</text><text x="583.45" y="707.5" font-size="8.3" font-weight="normal" text-anchor="start" fill="#000" stroke="#000" stroke-width="0.12" textLength="22.10" lengthAdjust="spacingAndGlyphs" >22:31</text><text x="633.7" y="707.5" font-size="8.3" font-weight="normal" text-anchor="start" fill="#000" stroke="#000" stroke-width="0.12" textLength="22.10" lengthAdjust="spacingAndGlyphs" >22:51</text><text x="683.95" y="707.5" font-size="8.3" font-weight="normal" text-anchor="start" fill="#000" stroke="#000" stroke-width="0.12" textLength="22.10" lengthAdjust="spacingAndGlyphs" >23:11</text><text x="734.2" y="707.5" font-size="8.3" font-weight="normal" text-anchor="start" fill="#000" stroke="#000" stroke-width="0.12" textLength="22.10" lengthAdjust="spacingAndGlyphs" >23:31</text><text x="814.3" y="48.6" font-size="19.5" font-weight="bold" text-anchor="start" fill="#333" textLength="147.90" lengthAdjust="spacingAndGlyphs"  stroke="#333" stroke-width="0.4">NIRSS - Local</text><text x="870" y="94.2" font-size="10" font-weight="bold" text-anchor="start" fill="#333" textLength="33.00" lengthAdjust="spacingAndGlyphs"  stroke="#333" stroke-width="0.35">Mode:</text><text x="816.4" y="122" font-size="10" font-weight="bold" text-anchor="start" fill="#ffffff" textLength="54.60" lengthAdjust="spacingAndGlyphs" >REALTIME</text><text x="910" y="122" font-size="10" font-weight="bold" text-anchor="start" fill="#e4ffe4" textLength="50.10" lengthAdjust="spacingAndGlyphs" >ARCHIVE</text><text x="835.7" y="150.7" font-size="10.5" font-weight="bold" text-anchor="start" fill="#333" textLength="104.40" lengthAdjust="spacingAndGlyphs"  stroke="#333" stroke-width="0.3">Display time (UTC)</text><text x="801.5" y="177" font-size="10.2" font-weight="bold" text-anchor="start" fill="#000" textLength="117.10" lengthAdjust="spacingAndGlyphs"  stroke="#000" stroke-width="0.3">2012-02-24 23:31:00</text><text x="955.8" y="177.2" font-size="10.3" font-weight="bold" text-anchor="start" fill="#222" textLength="16.00" lengthAdjust="spacingAndGlyphs" >GO</text><text x="808.0" y="207.8" font-size="8.5" font-weight="bold" text-anchor="start" fill="#222" textLength="22.60" lengthAdjust="spacingAndGlyphs" >&lt;&lt;&lt;</text><text x="844.75" y="207.8" font-size="8.5" font-weight="bold" text-anchor="start" fill="#222" textLength="15.10" lengthAdjust="spacingAndGlyphs" >&lt;&lt;</text><text x="873.75" y="207.8" font-size="8.5" font-weight="bold" text-anchor="start" fill="#222" textLength="7.10" lengthAdjust="spacingAndGlyphs" >&lt;</text><text x="894.75" y="207.8" font-size="8.5" font-weight="bold" text-anchor="start" fill="#222" textLength="7.10" lengthAdjust="spacingAndGlyphs" >&gt;</text><text x="915.75" y="207.8" font-size="8.5" font-weight="bold" text-anchor="start" fill="#222" textLength="15.10" lengthAdjust="spacingAndGlyphs" >&gt;&gt;</text><text x="945.0" y="207.8" font-size="8.5" font-weight="bold" text-anchor="start" fill="#222" textLength="22.60" lengthAdjust="spacingAndGlyphs" >&gt;&gt;&gt;</text><text x="809.7" y="241.2" font-size="13.3" font-weight="normal" text-anchor="start" fill="#222" textLength="78.20" lengthAdjust="spacingAndGlyphs"  stroke="#222" stroke-width="0.45">Time zoom:</text><text x="897.5" y="240.8" font-size="12" font-weight="normal" text-anchor="start" fill="#222" textLength="34.50" lengthAdjust="spacingAndGlyphs"  stroke="#222" stroke-width="0.4">2 hrs</text></svg>
</body></html>
